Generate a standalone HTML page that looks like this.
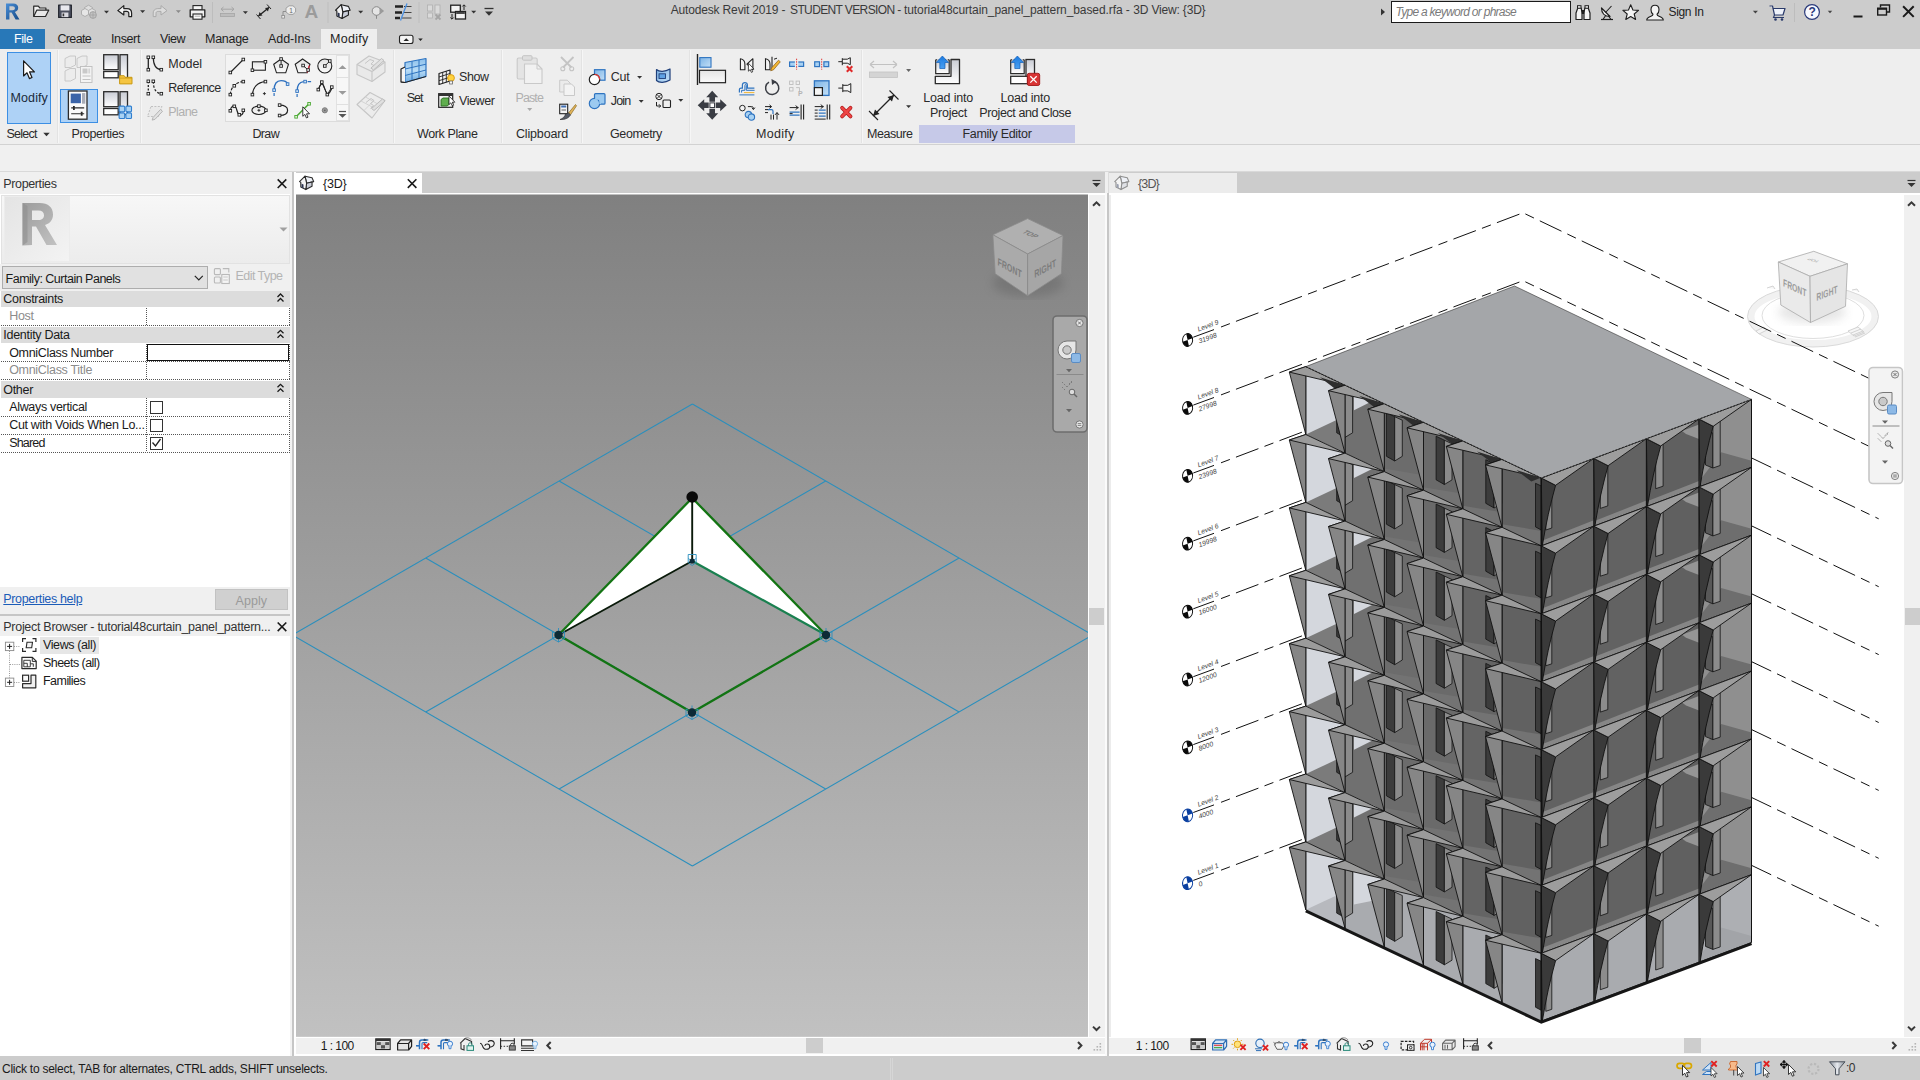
<!DOCTYPE html>
<html><head><meta charset="utf-8"><title>Revit</title>
<style>
html,body{margin:0;padding:0}
body{width:1920px;height:1080px;position:relative;overflow:hidden;background:#f0f0f0;font-family:"Liberation Sans",sans-serif;font-size:12px}
.t{position:absolute;white-space:nowrap;display:block}
.b{position:absolute}
svg{position:absolute;left:0;top:0;overflow:visible}
</style></head><body>
<div class="b" style="left:0px;top:0px;width:1920px;height:49px;background:#cccccc;"></div>
<div class="b" style="left:0px;top:49px;width:1920px;height:95px;background:#eeeeee;"></div>
<div class="b" style="left:0px;top:144px;width:1920px;height:1px;background:#d2d2d2;"></div>
<div class="b" style="left:0px;top:145px;width:1920px;height:27px;background:#f0f0f0;"></div>
<div class="b" style="left:0px;top:28.9px;width:44.7px;height:19.8px;background:#2878b8;"></div>
<span class="t" style="left:14.0px;top:31.3px;font-size:12.5px;line-height:16.2px;color:#ffffff;letter-spacing:-0.41px;">File</span>
<div class="b" style="left:321px;top:29px;width:56px;height:20px;background:#eeeeee;"></div>
<span class="t" style="left:57.5px;top:31.3px;font-size:12.5px;line-height:16.2px;color:#222;letter-spacing:-0.67px;">Create</span>
<span class="t" style="left:111.0px;top:31.3px;font-size:12.5px;line-height:16.2px;color:#222;letter-spacing:-0.38px;">Insert</span>
<span class="t" style="left:160.0px;top:31.3px;font-size:12.5px;line-height:16.2px;color:#222;letter-spacing:-0.47px;">View</span>
<span class="t" style="left:205.0px;top:31.3px;font-size:12.5px;line-height:16.2px;color:#222;letter-spacing:-0.28px;">Manage</span>
<span class="t" style="left:268.0px;top:31.3px;font-size:12.5px;line-height:16.2px;color:#222;letter-spacing:-0.08px;">Add-Ins</span>
<span class="t" style="left:330.0px;top:31.3px;font-size:12.5px;line-height:16.2px;color:#222;letter-spacing:0.28px;">Modify</span>
<span class="t" style="left:670.7px;top:3.4px;font-size:12px;line-height:15.6px;color:#3a3a3a;letter-spacing:-0.16px;">Autodesk Revit 2019 -</span>
<span class="t" style="left:790.0px;top:3.4px;font-size:12px;line-height:15.6px;color:#3a3a3a;letter-spacing:-0.62px;">STUDENT VERSION -</span>
<span class="t" style="left:904.0px;top:3.4px;font-size:12px;line-height:15.6px;color:#3a3a3a;letter-spacing:-0.09px;">tutorial48curtain_panel_pattern_based.rfa -</span>
<span class="t" style="left:1133.3px;top:3.4px;font-size:12px;line-height:15.6px;color:#3a3a3a;letter-spacing:-0.18px;">3D View: {3D}</span>
<div class="b" style="left:1391px;top:1px;width:180px;height:22px;background:#ffffff;border:1px solid #1a1a1a;box-sizing:border-box;"></div>
<span class="t" style="left:1395.5px;top:4.9px;font-size:12px;line-height:15.6px;color:#7a7a7a;letter-spacing:-0.72px;font-style:italic;">Type a keyword or phrase</span>
<span class="t" style="left:1668.5px;top:5.4px;font-size:12px;line-height:15.6px;color:#222;letter-spacing:-0.34px;">Sign In</span>
<div class="b" style="left:56.5px;top:50px;width:1px;height:93px;background:#e3e3e3;"></div>
<div class="b" style="left:57.5px;top:50px;width:1px;height:93px;background:#f6f6f6;"></div>
<div class="b" style="left:139.5px;top:50px;width:1px;height:93px;background:#e3e3e3;"></div>
<div class="b" style="left:140.5px;top:50px;width:1px;height:93px;background:#f6f6f6;"></div>
<div class="b" style="left:392.5px;top:50px;width:1px;height:93px;background:#e3e3e3;"></div>
<div class="b" style="left:393.5px;top:50px;width:1px;height:93px;background:#f6f6f6;"></div>
<div class="b" style="left:501px;top:50px;width:1px;height:93px;background:#e3e3e3;"></div>
<div class="b" style="left:502px;top:50px;width:1px;height:93px;background:#f6f6f6;"></div>
<div class="b" style="left:581px;top:50px;width:1px;height:93px;background:#e3e3e3;"></div>
<div class="b" style="left:582px;top:50px;width:1px;height:93px;background:#f6f6f6;"></div>
<div class="b" style="left:689px;top:50px;width:1px;height:93px;background:#e3e3e3;"></div>
<div class="b" style="left:690px;top:50px;width:1px;height:93px;background:#f6f6f6;"></div>
<div class="b" style="left:861px;top:50px;width:1px;height:93px;background:#e3e3e3;"></div>
<div class="b" style="left:862px;top:50px;width:1px;height:93px;background:#f6f6f6;"></div>
<div class="b" style="left:7px;top:52px;width:44px;height:72px;background:#aed2f6;border:1px solid #3c8fe4;box-sizing:border-box;"></div>
<span class="t" style="left:10.5px;top:90.1px;font-size:12.5px;line-height:16.2px;color:#1a2a3a;letter-spacing:0.11px;">Modify</span>
<div class="b" style="left:60px;top:89px;width:38px;height:34px;background:#aed2f6;border:1px solid #3c8fe4;box-sizing:border-box;"></div>
<div class="b" style="left:225px;top:54px;width:125px;height:68px;background:#f3f3f3;border:1px solid #dcdcdc;box-sizing:border-box;"></div>
<div class="b" style="left:336px;top:55px;width:13px;height:66px;background:#f7f7f7;border:1px solid #e2e2e2;box-sizing:border-box;"></div>
<div class="b" style="left:336px;top:77px;width:13px;height:1px;background:#e0e0e0;"></div>
<div class="b" style="left:336px;top:104px;width:13px;height:1px;background:#e0e0e0;"></div>
<span class="t" style="left:6.5px;top:125.8px;font-size:12.5px;line-height:16.2px;color:#2a2a2a;letter-spacing:-0.74px;">Select</span>
<span class="t" style="left:71.5px;top:125.8px;font-size:12.5px;line-height:16.2px;color:#2a2a2a;letter-spacing:-0.45px;">Properties</span>
<span class="t" style="left:252.5px;top:125.8px;font-size:12.5px;line-height:16.2px;color:#2a2a2a;letter-spacing:-0.67px;">Draw</span>
<span class="t" style="left:417.0px;top:125.8px;font-size:12.5px;line-height:16.2px;color:#2a2a2a;letter-spacing:-0.39px;">Work Plane</span>
<span class="t" style="left:516.0px;top:125.8px;font-size:12.5px;line-height:16.2px;color:#2a2a2a;letter-spacing:-0.17px;">Clipboard</span>
<span class="t" style="left:610.0px;top:125.8px;font-size:12.5px;line-height:16.2px;color:#2a2a2a;letter-spacing:-0.36px;">Geometry</span>
<span class="t" style="left:756.0px;top:125.8px;font-size:12.5px;line-height:16.2px;color:#2a2a2a;letter-spacing:0.28px;">Modify</span>
<span class="t" style="left:867.0px;top:125.8px;font-size:12.5px;line-height:16.2px;color:#2a2a2a;letter-spacing:-0.45px;">Measure</span>
<div class="b" style="left:919px;top:125px;width:156px;height:18px;background:#c6c9e8;"></div>
<span class="t" style="left:962.5px;top:125.8px;font-size:12.5px;line-height:16.2px;color:#2a2a2a;letter-spacing:-0.30px;">Family Editor</span>
<span class="t" style="left:168.3px;top:56.4px;font-size:12.5px;line-height:16.2px;color:#2a2a2a;letter-spacing:-0.07px;">Model</span>
<span class="t" style="left:168.3px;top:80.4px;font-size:12.5px;line-height:16.2px;color:#2a2a2a;letter-spacing:-0.61px;">Reference</span>
<span class="t" style="left:406.7px;top:90.1px;font-size:12.5px;line-height:16.2px;color:#2a2a2a;letter-spacing:-0.99px;">Set</span>
<span class="t" style="left:459.0px;top:69.3px;font-size:12.5px;line-height:16.2px;color:#2a2a2a;letter-spacing:-0.44px;">Show</span>
<span class="t" style="left:459.0px;top:93.4px;font-size:12.5px;line-height:16.2px;color:#2a2a2a;letter-spacing:-0.41px;">Viewer</span>
<span class="t" style="left:610.7px;top:69.3px;font-size:12.5px;line-height:16.2px;color:#2a2a2a;letter-spacing:-0.22px;">Cut</span>
<span class="t" style="left:610.7px;top:93.3px;font-size:12.5px;line-height:16.2px;color:#2a2a2a;letter-spacing:-0.78px;">Join</span>
<span class="t" style="left:168.3px;top:104.3px;font-size:12.5px;line-height:16.2px;color:#b0b0b0;letter-spacing:-0.55px;">Plane</span>
<span class="t" style="left:515.5px;top:90.1px;font-size:12.5px;line-height:16.2px;color:#b0b0b0;letter-spacing:-0.89px;">Paste</span>
<span class="t" style="left:923.3px;top:90.3px;font-size:12.5px;line-height:16.2px;color:#2a2a2a;letter-spacing:-0.19px;">Load into</span>
<span class="t" style="left:930.0px;top:105.3px;font-size:12.5px;line-height:16.2px;color:#2a2a2a;letter-spacing:-0.27px;">Project</span>
<span class="t" style="left:1000.5px;top:90.3px;font-size:12.5px;line-height:16.2px;color:#2a2a2a;letter-spacing:-0.21px;">Load into</span>
<span class="t" style="left:979.3px;top:105.3px;font-size:12.5px;line-height:16.2px;color:#2a2a2a;letter-spacing:-0.41px;">Project and Close</span>
<div class="b" style="left:0px;top:172px;width:292px;height:885px;background:#ffffff;"></div>
<div class="b" style="left:0px;top:171px;width:1920px;height:1px;background:#d9d9d9;"></div>
<div class="b" style="left:0px;top:172px;width:292px;height:22px;background:#f0f0f0;"></div>
<span class="t" style="left:3.3px;top:176.2px;font-size:12.5px;line-height:16.2px;color:#333;letter-spacing:-0.37px;">Properties</span>
<div class="b" style="left:1px;top:194.5px;width:289px;height:69px;border:1px solid #e2e2e2;box-sizing:border-box;background:linear-gradient(#f7f7f7,#ececec);"></div>
<div class="b" style="left:4px;top:196px;width:66px;height:66px;border:1px solid #ececec;box-sizing:border-box;background:linear-gradient(135deg,#e4e4e4,#f3f3f3);"></div>
<div class="b" style="left:0px;top:263.5px;width:292px;height:27px;background:#f0f0f0;"></div>
<div class="b" style="left:1.5px;top:266px;width:206px;height:22.5px;background:#e1e1e1;border:1px solid #adadad;box-sizing:border-box;"></div>
<span class="t" style="left:5.6px;top:270.6px;font-size:12.5px;line-height:16.2px;color:#1a1a1a;letter-spacing:-0.50px;">Family: Curtain Panels</span>
<span class="t" style="left:235.5px;top:268.4px;font-size:12.5px;line-height:16.2px;color:#b4b4b4;letter-spacing:-0.54px;">Edit Type</span>
<div class="b" style="left:1px;top:290.5px;width:289px;height:16.8px;background:#dcdcdc;"></div>
<span class="t" style="left:3.3px;top:291.2px;font-size:12.5px;line-height:16.2px;color:#1a1a1a;letter-spacing:-0.32px;">Constraints</span>
<div class="b" style="left:1px;top:326.7px;width:289px;height:16.7px;background:#dcdcdc;"></div>
<span class="t" style="left:3.3px;top:327.3px;font-size:12.5px;line-height:16.2px;color:#1a1a1a;letter-spacing:-0.29px;">Identity Data</span>
<div class="b" style="left:1px;top:380.8px;width:289px;height:16.8px;background:#dcdcdc;"></div>
<span class="t" style="left:3.3px;top:381.5px;font-size:12.5px;line-height:16.2px;color:#1a1a1a;letter-spacing:-0.31px;">Other</span>
<span class="t" style="left:9.2px;top:308.3px;font-size:12.5px;line-height:16.2px;color:#8c8c8c;letter-spacing:-0.28px;">Host</span>
<span class="t" style="left:9.2px;top:344.9px;font-size:12.5px;line-height:16.2px;color:#1a1a1a;letter-spacing:-0.33px;">OmniClass Number</span>
<span class="t" style="left:9.2px;top:362.4px;font-size:12.5px;line-height:16.2px;color:#8c8c8c;letter-spacing:-0.31px;">OmniClass Title</span>
<span class="t" style="left:9.2px;top:398.5px;font-size:12.5px;line-height:16.2px;color:#1a1a1a;letter-spacing:-0.32px;">Always vertical</span>
<span class="t" style="left:9.2px;top:416.6px;font-size:12.5px;line-height:16.2px;color:#1a1a1a;letter-spacing:-0.31px;">Cut with Voids When Lo...</span>
<span class="t" style="left:9.2px;top:434.7px;font-size:12.5px;line-height:16.2px;color:#1a1a1a;letter-spacing:-0.82px;">Shared</span>
<div class="b" style="left:1px;top:325.3px;width:289px;height:1px;background:repeating-linear-gradient(90deg,#555 0 1px,transparent 1px 2px);"></div>
<div class="b" style="left:1px;top:361px;width:289px;height:1px;background:repeating-linear-gradient(90deg,#555 0 1px,transparent 1px 2px);"></div>
<div class="b" style="left:1px;top:379px;width:289px;height:1px;background:repeating-linear-gradient(90deg,#555 0 1px,transparent 1px 2px);"></div>
<div class="b" style="left:1px;top:415.5px;width:289px;height:1px;background:repeating-linear-gradient(90deg,#555 0 1px,transparent 1px 2px);"></div>
<div class="b" style="left:1px;top:433.5px;width:289px;height:1px;background:repeating-linear-gradient(90deg,#555 0 1px,transparent 1px 2px);"></div>
<div class="b" style="left:1px;top:451.5px;width:289px;height:1px;background:repeating-linear-gradient(90deg,#555 0 1px,transparent 1px 2px);"></div>
<div class="b" style="left:146.4px;top:307.3px;width:1px;height:18px;background:repeating-linear-gradient(0deg,#555 0 1px,transparent 1px 2px);"></div>
<div class="b" style="left:289.3px;top:307.3px;width:1px;height:18px;background:repeating-linear-gradient(0deg,#555 0 1px,transparent 1px 2px);"></div>
<div class="b" style="left:146.4px;top:343.4px;width:1px;height:35.6px;background:repeating-linear-gradient(0deg,#555 0 1px,transparent 1px 2px);"></div>
<div class="b" style="left:289.3px;top:343.4px;width:1px;height:35.6px;background:repeating-linear-gradient(0deg,#555 0 1px,transparent 1px 2px);"></div>
<div class="b" style="left:146.4px;top:397.6px;width:1px;height:53.9px;background:repeating-linear-gradient(0deg,#555 0 1px,transparent 1px 2px);"></div>
<div class="b" style="left:289.3px;top:397.6px;width:1px;height:53.9px;background:repeating-linear-gradient(0deg,#555 0 1px,transparent 1px 2px);"></div>
<div class="b" style="left:146.8px;top:344.2px;width:142.4px;height:16.5px;background:#fff;border:1px solid #111;box-sizing:border-box;"></div>
<div class="b" style="left:150px;top:400.5px;width:13px;height:13px;background:#fff;border:1px solid #333;box-sizing:border-box;"></div>
<div class="b" style="left:150px;top:418.5px;width:13px;height:13px;background:#fff;border:1px solid #333;box-sizing:border-box;"></div>
<div class="b" style="left:150px;top:436.5px;width:13px;height:13px;background:#fff;border:1px solid #333;box-sizing:border-box;"></div>
<div class="b" style="left:0px;top:586.5px;width:292px;height:28px;background:#f0f0f0;"></div>
<span class="t" style="left:3.3px;top:590.6px;font-size:12.5px;line-height:16.2px;color:#1b5cb8;letter-spacing:-0.34px;text-decoration:underline;">Properties help</span>
<div class="b" style="left:215.3px;top:589px;width:73px;height:21px;background:#d0d0d0;border:1px solid #c2c2c2;box-sizing:border-box;"></div>
<span class="t" style="left:235.5px;top:592.9px;font-size:12.5px;line-height:16.2px;color:#9a9a9a;letter-spacing:0.05px;">Apply</span>
<div class="b" style="left:0px;top:613.8px;width:292px;height:1.8px;background:#c6c6c6;"></div>
<div class="b" style="left:0px;top:616px;width:292px;height:20px;background:#f0f0f0;"></div>
<span class="t" style="left:3.3px;top:619.4px;font-size:12.5px;line-height:16.2px;color:#333;letter-spacing:-0.29px;">Project Browser - tutorial48curtain_panel_pattern...</span>
<div class="b" style="left:40.3px;top:636.5px;width:58.5px;height:17px;background:#e6e6e6;"></div>
<span class="t" style="left:43.0px;top:637.4px;font-size:12.5px;line-height:16.2px;color:#1a1a1a;letter-spacing:-0.40px;">Views (all)</span>
<span class="t" style="left:43.0px;top:655.4px;font-size:12.5px;line-height:16.2px;color:#1a1a1a;letter-spacing:-0.55px;">Sheets (all)</span>
<span class="t" style="left:43.0px;top:673.4px;font-size:12.5px;line-height:16.2px;color:#1a1a1a;letter-spacing:-0.54px;">Families</span>
<div class="b" style="left:290px;top:172px;width:2px;height:885px;background:#f2f2f2;"></div>
<div class="b" style="left:292px;top:172px;width:2px;height:885px;background:#c6c6c6;"></div>
<div class="b" style="left:294px;top:172px;width:2.1px;height:885px;background:#ffffff;"></div>
<div class="b" style="left:295.8px;top:172px;width:809.2px;height:20.5px;background:#cccccc;"></div>
<div class="b" style="left:295.8px;top:192.5px;width:809.2px;height:2.1px;background:#ffffff;"></div>
<div class="b" style="left:294.2px;top:172.7px;width:127.8px;height:21.9px;background:#ffffff;"></div>
<span class="t" style="left:323.0px;top:176.3px;font-size:12.5px;line-height:16.2px;color:#1a1a1a;letter-spacing:-0.18px;">{3D}</span>
<div class="b" style="left:1088px;top:194.5px;width:17px;height:843px;background:#f0f0f0;"></div>
<div class="b" style="left:1088px;top:194.5px;width:1.1px;height:843px;background:#ffffff;"></div>
<div class="b" style="left:1089.1px;top:608px;width:15px;height:16.7px;background:#cdcdcd;"></div>
<div class="b" style="left:295.8px;top:1036.8px;width:809.2px;height:19.2px;background:#f0f0f0;"></div>
<span class="t" style="left:320.8px;top:1039.0px;font-size:12px;line-height:15.6px;color:#1a1a1a;letter-spacing:-0.54px;">1 : 100</span>
<div class="b" style="left:295.8px;top:1036.8px;width:809.2px;height:1.4px;background:#ffffff;"></div>
<div class="b" style="left:295.8px;top:1054.2px;width:809.2px;height:1.6px;background:#ffffff;"></div>
<div class="b" style="left:806px;top:1038.4px;width:17px;height:14.8px;background:#cdcdcd;"></div>
<div class="b" style="left:1105px;top:192.5px;width:2.2px;height:864px;background:#fafafa;"></div>
<div class="b" style="left:1107.2px;top:192.5px;width:2px;height:864px;background:#c6c6c6;"></div>
<div class="b" style="left:1108.3px;top:172px;width:0.9px;height:20.5px;background:#dcdcdc;"></div>
<div class="b" style="left:1109.2px;top:172px;width:810.8px;height:20.5px;background:#cccccc;"></div>
<div class="b" style="left:1109.2px;top:192.5px;width:810.8px;height:2.1px;background:#ffffff;"></div>
<div class="b" style="left:1109.2px;top:172.9px;width:127.5px;height:20px;background:#ececec;"></div>
<span class="t" style="left:1137.9px;top:176.1px;font-size:12.5px;line-height:16.2px;color:#555;letter-spacing:-0.81px;">{3D}</span>
<div class="b" style="left:1109.2px;top:194.5px;width:795px;height:843px;background:#ffffff;"></div>
<div class="b" style="left:1109.2px;top:194.5px;width:1.8px;height:843px;background:#ececec;"></div>
<div class="b" style="left:1904.2px;top:194.5px;width:15.8px;height:843px;background:#f0f0f0;"></div>
<div class="b" style="left:1905.1px;top:608px;width:14.9px;height:16.7px;background:#cdcdcd;"></div>
<div class="b" style="left:1109.2px;top:1037px;width:810.8px;height:19px;background:#f0f0f0;"></div>
<span class="t" style="left:1135.8px;top:1039.0px;font-size:12px;line-height:15.6px;color:#1a1a1a;letter-spacing:-0.57px;">1 : 100</span>
<div class="b" style="left:1109.2px;top:1036.8px;width:810.8px;height:1.4px;background:#ffffff;"></div>
<div class="b" style="left:1109.2px;top:1054.2px;width:810.8px;height:1.6px;background:#ffffff;"></div>
<div class="b" style="left:1684px;top:1038.4px;width:17px;height:14.8px;background:#cdcdcd;"></div>
<div class="b" style="left:0px;top:1055.8px;width:1920px;height:24.2px;background:#cccccc;"></div>
<div class="b" style="left:890.3px;top:1058px;width:1px;height:22px;background:#d6d6d6;"></div>
<div class="b" style="left:892.3px;top:1058px;width:1px;height:22px;background:#d6d6d6;"></div>
<span class="t" style="left:2.0px;top:1061.9px;font-size:12px;line-height:15.6px;color:#1a1a1a;letter-spacing:-0.25px;">Click to select, TAB for alternates, CTRL adds, SHIFT unselects.</span>
<span class="t" style="left:1846.0px;top:1061.2px;font-size:12px;line-height:15.6px;color:#333;letter-spacing:-0.50px;">:0</span>
<svg width="1920" height="1080" viewBox="0 0 1920 1080"><defs><linearGradient id="cg" x1="0" y1="0" x2="0" y2="1"><stop offset="0" stop-color="#808080"/><stop offset="1" stop-color="#c1c1c1"/></linearGradient><clipPath id="cc"><rect x="296" y="194.5" width="792" height="842.3"/></clipPath><filter id="bl"><feGaussianBlur stdDeviation="5"/></filter></defs><rect x="296" y="194.5" width="792" height="842.3" fill="url(#cg)"/><g clip-path="url(#cc)"><path d="M692.4 404.0L292.4 635.0M692.4 404.0L1092.4 635.0M292.4 635.0L692.4 866.0M1092.4 635.0L692.4 866.0M559.1 481.0L959.1 712.0M825.7 481.0L425.7 712.0M425.7 558.0L825.7 789.0M959.1 558.0L559.1 789.0" stroke="#2a8fbd" stroke-width="1.05" fill="none"/><polygon points="692.2,498 558.5,635 692.2,561 826,635" fill="#ffffff"/><path d="M692.2 498L692.2 561M692.2 561L558.5 635" stroke="#0a1a0a" stroke-width="1.9" fill="none"/><path d="M692.2 561L826 635" stroke="#1a8050" stroke-width="2.2" fill="none"/><path d="M692.2 498L558.5 635M692.2 498L826 635M558.5 635L692 712.5L826 635" stroke="#137413" stroke-width="2.3" fill="none" stroke-linejoin="round"/><circle cx="692.2" cy="497" r="5.8" fill="#0a0a0a"/><g transform="translate(558.5,635)"><path d="M-6 -3.5L6 3.5M-6 3.5L6 -3.5M0 -7V7M-6 -3.5V3.5L0 7L6 3.5V-3.5" stroke="#2a8fbd" stroke-width="0.9" fill="none"/><circle r="4.2" fill="#0d2a36"/></g><g transform="translate(826,635)"><path d="M-6 -3.5L6 3.5M-6 3.5L6 -3.5M0 -7V7M-6 -3.5V3.5L0 7L6 3.5V-3.5" stroke="#2a8fbd" stroke-width="0.9" fill="none"/><circle r="4.2" fill="#0d2a36"/></g><g transform="translate(692,712.5)"><path d="M-6 -3.5L6 3.5M-6 3.5L6 -3.5M0 -7V7M-6 -3.5V3.5L0 7L6 3.5V-3.5" stroke="#2a8fbd" stroke-width="0.9" fill="none"/><circle r="4.2" fill="#0d2a36"/></g><g transform="translate(692.2,559.5)"><path d="M-4 -5h8v8l-4 3l-4-3zM-4 -1l4 2.5l4-2.5" stroke="#2a8fbd" stroke-width="0.9" fill="none"/><circle cy="1.5" r="2.6" fill="#0d2a36"/></g></g><ellipse cx="1028" cy="283" rx="36" ry="14" fill="#5a5a5a" opacity="0.35" filter="url(#bl)"/><polygon points="1027.6,218.6 1063,235.5 1027.6,254 992.9,234.8" fill="#b0b0b0" stroke="#8a8a8a" stroke-width="0.8"/><polygon points="992.9,234.8 1027.6,254 1027.6,295.7 995.2,273.7" fill="#aaaaaa" stroke="#8a8a8a" stroke-width="0.8"/><polygon points="1027.6,254 1063,235.5 1061.4,273.7 1027.6,295.7" fill="#a6a6a6" stroke="#8a8a8a" stroke-width="0.8"/><text style="font-family:'Liberation Sans',sans-serif;font-size:10.5px;font-weight:bold;fill:#7c7c7c;letter-spacing:0.1px" transform="matrix(0.66,0.36,-0.04,1,997.5,265)">FRONT</text><text style="font-family:'Liberation Sans',sans-serif;font-size:10.5px;font-weight:bold;fill:#7c7c7c;letter-spacing:0.1px" transform="matrix(0.66,-0.36,0.04,1,1034.5,278)">RIGHT</text><text style="font-family:'Liberation Sans',sans-serif;font-size:10.5px;font-weight:bold;fill:#7c7c7c;letter-spacing:0.1px" transform="matrix(0.6,0.27,-0.7,0.36,1021.5,232.5)">TOP</text><g opacity="1"><rect x="1053" y="316" width="34" height="116" rx="4" fill="#a9a9a9" stroke="#6e6e6e" stroke-width="1.6"/><circle cx="1079.5" cy="323" r="3.6" fill="#e8e8e8" stroke="#666" stroke-width="0.8"/><path d="M1078 321.5l3 3m0-3l-3 3" stroke="#666" stroke-width="0.9" fill="none"/><path d="M1067 341 a9 9 0 1 0 9 9 v-9z" fill="#e6e6e6" stroke="#777" stroke-width="1"/><circle cx="1067" cy="350" r="4.2" fill="#c9c9c9" stroke="#777" stroke-width="1"/><rect x="1071.5" y="353.5" width="9" height="9" rx="1.5" fill="#8db9e6" stroke="#5a8cc4" stroke-width="1"/><path d="M1066 369h6l-3 3.2z" fill="#666"/><path d="M1056.5 374.5h27" stroke="#8a8a8a" stroke-width="1"/><circle cx="1072" cy="392" r="2.8" fill="#ddd" stroke="#666" stroke-width="1"/><path d="M1074 394l3 3" stroke="#666" stroke-width="1.4"/><path d="M1062 382l5 5M1072 382l-5 5M1065 390l-3-3M1069 384l3-3" stroke="#777" stroke-width="0.9" stroke-dasharray="1.5 1.2" fill="none"/><path d="M1066 409h6l-3 3.2z" fill="#666"/><circle cx="1079.5" cy="424.5" r="3.6" fill="#e8e8e8" stroke="#666" stroke-width="0.8"/><path d="M1077.7 423.6h3.6M1077.7 425.4h3.6" stroke="#666" stroke-width="0.8"/></g></svg>
<svg width="1920" height="1080" viewBox="0 0 1920 1080"><defs><clipPath id="rc"><rect x="1109.2" y="194.5" width="795" height="842.5"/></clipPath></defs><g clip-path="url(#rc)" shape-rendering="auto"><ellipse cx="1813" cy="316.5" rx="62" ry="27" fill="none" stroke="#f1f1f1" stroke-width="7"/><ellipse cx="1813" cy="316.5" rx="65.5" ry="30.5" fill="none" stroke="#d6d6d6" stroke-width="0.9"/><ellipse cx="1813" cy="315.5" rx="51" ry="23" fill="none" stroke="#dadada" stroke-width="0.9"/><path d="M1756 331l8-4l3 3l-8 4zM1848 331l10-4l6 5l-10 4zM1767 288l6-2l2 3M1852 290l5-1l2 3" fill="#f6f6f6" stroke="#cfcfcf" stroke-width="0.9"/><path d="M1851 333l10-4M1853 335l10-4M1855 337l10-4" stroke="#c9c9c9" stroke-width="0.8"/><path d="M1193.3 880.4L1214 872.8" stroke="#111" stroke-width="1"/><path d="M1221 870.2L1523 756.0L1878.7 926.2" stroke="#111" stroke-width="1" fill="none" stroke-dasharray="9.5 6.5 24 6.5"/><g transform="translate(1187.6,883.2) rotate(-20) skewX(-8)"><ellipse rx="5.2" ry="6.2" fill="#fff" stroke="#0a3fa0" stroke-width="1"/><path d="M0 0V-6.2A5.2 6.2 0 0 1 5.2 0ZM0 0V6.2A5.2 6.2 0 0 1 -5.2 0Z" fill="#0a3fa0"/></g><text style="font-family:'Liberation Sans',sans-serif;font-size:6.8px;fill:#444;font-style:italic" transform="translate(1198.5,874.7) rotate(-20)">Level 1</text><text style="font-family:'Liberation Sans',sans-serif;font-size:6.8px;fill:#444;font-style:italic" transform="translate(1199.5,886.7) rotate(-20)">0</text><path d="M1193.3 812.5L1214 804.9" stroke="#111" stroke-width="1"/><path d="M1221 802.3L1523 688.1L1878.7 858.3" stroke="#111" stroke-width="1" fill="none" stroke-dasharray="9.5 6.5 24 6.5"/><g transform="translate(1187.6,815.3) rotate(-20) skewX(-8)"><ellipse rx="5.2" ry="6.2" fill="#fff" stroke="#0a3fa0" stroke-width="1"/><path d="M0 0V-6.2A5.2 6.2 0 0 1 5.2 0ZM0 0V6.2A5.2 6.2 0 0 1 -5.2 0Z" fill="#0a3fa0"/></g><text style="font-family:'Liberation Sans',sans-serif;font-size:6.8px;fill:#444;font-style:italic" transform="translate(1198.5,806.8) rotate(-20)">Level 2</text><text style="font-family:'Liberation Sans',sans-serif;font-size:6.8px;fill:#444;font-style:italic" transform="translate(1199.5,818.8) rotate(-20)">4000</text><path d="M1193.3 744.6L1214 737.0" stroke="#111" stroke-width="1"/><path d="M1221 734.4L1523 620.2L1878.7 790.4" stroke="#111" stroke-width="1" fill="none" stroke-dasharray="9.5 6.5 24 6.5"/><g transform="translate(1187.6,747.4) rotate(-20) skewX(-8)"><ellipse rx="5.2" ry="6.2" fill="#fff" stroke="#0a0a0a" stroke-width="1"/><path d="M0 0V-6.2A5.2 6.2 0 0 1 5.2 0ZM0 0V6.2A5.2 6.2 0 0 1 -5.2 0Z" fill="#0a0a0a"/></g><text style="font-family:'Liberation Sans',sans-serif;font-size:6.8px;fill:#444;font-style:italic" transform="translate(1198.5,738.9) rotate(-20)">Level 3</text><text style="font-family:'Liberation Sans',sans-serif;font-size:6.8px;fill:#444;font-style:italic" transform="translate(1199.5,750.9) rotate(-20)">8000</text><path d="M1193.3 676.7L1214 669.1" stroke="#111" stroke-width="1"/><path d="M1221 666.5L1523 552.3L1878.7 722.5" stroke="#111" stroke-width="1" fill="none" stroke-dasharray="9.5 6.5 24 6.5"/><g transform="translate(1187.6,679.5) rotate(-20) skewX(-8)"><ellipse rx="5.2" ry="6.2" fill="#fff" stroke="#0a0a0a" stroke-width="1"/><path d="M0 0V-6.2A5.2 6.2 0 0 1 5.2 0ZM0 0V6.2A5.2 6.2 0 0 1 -5.2 0Z" fill="#0a0a0a"/></g><text style="font-family:'Liberation Sans',sans-serif;font-size:6.8px;fill:#444;font-style:italic" transform="translate(1198.5,671.0) rotate(-20)">Level 4</text><text style="font-family:'Liberation Sans',sans-serif;font-size:6.8px;fill:#444;font-style:italic" transform="translate(1199.5,683.0) rotate(-20)">12000</text><path d="M1193.3 608.8L1214 601.2" stroke="#111" stroke-width="1"/><path d="M1221 598.6L1523 484.4L1878.7 654.6" stroke="#111" stroke-width="1" fill="none" stroke-dasharray="9.5 6.5 24 6.5"/><g transform="translate(1187.6,611.6) rotate(-20) skewX(-8)"><ellipse rx="5.2" ry="6.2" fill="#fff" stroke="#0a0a0a" stroke-width="1"/><path d="M0 0V-6.2A5.2 6.2 0 0 1 5.2 0ZM0 0V6.2A5.2 6.2 0 0 1 -5.2 0Z" fill="#0a0a0a"/></g><text style="font-family:'Liberation Sans',sans-serif;font-size:6.8px;fill:#444;font-style:italic" transform="translate(1198.5,603.1) rotate(-20)">Level 5</text><text style="font-family:'Liberation Sans',sans-serif;font-size:6.8px;fill:#444;font-style:italic" transform="translate(1199.5,615.1) rotate(-20)">16000</text><path d="M1193.3 540.9L1214 533.3" stroke="#111" stroke-width="1"/><path d="M1221 530.7L1523 416.5L1878.7 586.7" stroke="#111" stroke-width="1" fill="none" stroke-dasharray="9.5 6.5 24 6.5"/><g transform="translate(1187.6,543.7) rotate(-20) skewX(-8)"><ellipse rx="5.2" ry="6.2" fill="#fff" stroke="#0a0a0a" stroke-width="1"/><path d="M0 0V-6.2A5.2 6.2 0 0 1 5.2 0ZM0 0V6.2A5.2 6.2 0 0 1 -5.2 0Z" fill="#0a0a0a"/></g><text style="font-family:'Liberation Sans',sans-serif;font-size:6.8px;fill:#444;font-style:italic" transform="translate(1198.5,535.2) rotate(-20)">Level 6</text><text style="font-family:'Liberation Sans',sans-serif;font-size:6.8px;fill:#444;font-style:italic" transform="translate(1199.5,547.2) rotate(-20)">19998</text><path d="M1193.3 473.0L1214 465.4" stroke="#111" stroke-width="1"/><path d="M1221 462.8L1523 348.6L1878.7 518.8" stroke="#111" stroke-width="1" fill="none" stroke-dasharray="9.5 6.5 24 6.5"/><g transform="translate(1187.6,475.8) rotate(-20) skewX(-8)"><ellipse rx="5.2" ry="6.2" fill="#fff" stroke="#0a0a0a" stroke-width="1"/><path d="M0 0V-6.2A5.2 6.2 0 0 1 5.2 0ZM0 0V6.2A5.2 6.2 0 0 1 -5.2 0Z" fill="#0a0a0a"/></g><text style="font-family:'Liberation Sans',sans-serif;font-size:6.8px;fill:#444;font-style:italic" transform="translate(1198.5,467.3) rotate(-20)">Level 7</text><text style="font-family:'Liberation Sans',sans-serif;font-size:6.8px;fill:#444;font-style:italic" transform="translate(1199.5,479.3) rotate(-20)">23998</text><path d="M1193.3 405.1L1214 397.5" stroke="#111" stroke-width="1"/><path d="M1221 394.9L1523 280.7L1878.7 450.9" stroke="#111" stroke-width="1" fill="none" stroke-dasharray="9.5 6.5 24 6.5"/><g transform="translate(1187.6,407.9) rotate(-20) skewX(-8)"><ellipse rx="5.2" ry="6.2" fill="#fff" stroke="#0a0a0a" stroke-width="1"/><path d="M0 0V-6.2A5.2 6.2 0 0 1 5.2 0ZM0 0V6.2A5.2 6.2 0 0 1 -5.2 0Z" fill="#0a0a0a"/></g><text style="font-family:'Liberation Sans',sans-serif;font-size:6.8px;fill:#444;font-style:italic" transform="translate(1198.5,399.4) rotate(-20)">Level 8</text><text style="font-family:'Liberation Sans',sans-serif;font-size:6.8px;fill:#444;font-style:italic" transform="translate(1199.5,411.4) rotate(-20)">27998</text><path d="M1193.3 337.2L1214 329.6" stroke="#111" stroke-width="1"/><path d="M1221 327.0L1523 212.8L1878.7 383.0" stroke="#111" stroke-width="1" fill="none" stroke-dasharray="9.5 6.5 24 6.5"/><g transform="translate(1187.6,340.0) rotate(-20) skewX(-8)"><ellipse rx="5.2" ry="6.2" fill="#fff" stroke="#0a0a0a" stroke-width="1"/><path d="M0 0V-6.2A5.2 6.2 0 0 1 5.2 0ZM0 0V6.2A5.2 6.2 0 0 1 -5.2 0Z" fill="#0a0a0a"/></g><text style="font-family:'Liberation Sans',sans-serif;font-size:6.8px;fill:#444;font-style:italic" transform="translate(1198.5,331.5) rotate(-20)">Level 9</text><text style="font-family:'Liberation Sans',sans-serif;font-size:6.8px;fill:#444;font-style:italic" transform="translate(1199.5,343.5) rotate(-20)">31998</text><polygon points="1305.8,366.6 1345.0,385.2 1345.0,453.1 1305.8,434.5" fill="#d4d7dd" stroke="none" stroke-width="0" stroke-linejoin="round" /><polygon points="1305.8,434.5 1345.0,453.1 1345.0,416.1" fill="#7b7b7b" stroke="none" stroke-width="0" stroke-linejoin="round" /><path d="M1305.8 366.6L1305.8 434.5" stroke="#111" stroke-width="0.9"/><polygon points="1345.0,385.2 1384.3,403.7 1384.3,471.6 1345.0,453.1" fill="#707070" stroke="none" stroke-width="0" stroke-linejoin="round" /><polygon points="1354.0,390.2 1376.0,399.2 1354.0,410.2" fill="#d4d7dd" stroke="none" stroke-width="0" stroke-linejoin="round" /><path d="M1345.0 385.2L1345.0 453.1" stroke="#111" stroke-width="0.9"/><polygon points="1384.3,403.7 1423.5,422.3 1423.5,490.2 1384.3,471.6" fill="#6c6c6c" stroke="none" stroke-width="0" stroke-linejoin="round" /><polygon points="1384.3,471.6 1423.5,490.2 1423.5,475.2 1384.3,468.6" fill="#737373" stroke="none" stroke-width="0" stroke-linejoin="round" /><path d="M1384.3 403.7L1384.3 471.6" stroke="#111" stroke-width="0.9"/><polygon points="1423.5,422.3 1462.8,440.9 1462.8,508.8 1423.5,490.2" fill="#6a6a6a" stroke="none" stroke-width="0" stroke-linejoin="round" /><polygon points="1423.5,490.2 1462.8,508.8 1462.8,493.8 1423.5,487.2" fill="#737373" stroke="none" stroke-width="0" stroke-linejoin="round" /><path d="M1423.5 422.3L1423.5 490.2" stroke="#111" stroke-width="0.9"/><polygon points="1462.8,440.9 1502.0,459.4 1502.0,527.3 1462.8,508.8" fill="#646464" stroke="none" stroke-width="0" stroke-linejoin="round" /><polygon points="1462.8,508.8 1502.0,527.3 1502.0,512.3 1462.8,505.8" fill="#737373" stroke="none" stroke-width="0" stroke-linejoin="round" /><path d="M1462.8 440.9L1462.8 508.8" stroke="#111" stroke-width="0.9"/><polygon points="1502.0,459.4 1541.3,478.0 1541.3,545.9 1502.0,527.3" fill="#616161" stroke="none" stroke-width="0" stroke-linejoin="round" /><polygon points="1502.0,527.3 1541.3,545.9 1541.3,530.9 1502.0,524.3" fill="#737373" stroke="none" stroke-width="0" stroke-linejoin="round" /><path d="M1502.0 459.4L1502.0 527.3" stroke="#111" stroke-width="0.9"/><polygon points="1289.3,372.1 1305.8,366.6 1305.8,434.5" fill="#868686" stroke="#111" stroke-width="0.9" stroke-linejoin="round" /><polygon points="1289.3,372.1 1305.8,366.6 1345.0,385.2" fill="#9b9b9b" stroke="#111" stroke-width="0.9" stroke-linejoin="round" /><polygon points="1320.0,377.2 1344.5,385.0 1335.0,388.7" fill="#2e2e2e" stroke="none" stroke-width="0" stroke-linejoin="round" /><polygon points="1336.7,389.2 1345.0,393.1 1345.0,437.4 1336.7,432.8" fill="#3c3c3c" stroke="#111" stroke-width="0.8" stroke-linejoin="round" /><polygon points="1345.0,393.1 1352.6,396.7 1352.6,432.8 1345.0,437.4" fill="#8b8b8b" stroke="#111" stroke-width="0.8" stroke-linejoin="round" /><polygon points="1328.5,390.7 1345.0,385.2 1345.0,453.1" fill="#868686" stroke="#111" stroke-width="0.9" stroke-linejoin="round" /><polygon points="1328.5,390.7 1345.0,385.2 1384.3,403.7" fill="#9b9b9b" stroke="#111" stroke-width="0.9" stroke-linejoin="round" /><polygon points="1359.3,395.7 1383.8,403.5 1374.3,407.2" fill="#2e2e2e" stroke="none" stroke-width="0" stroke-linejoin="round" /><polygon points="1386.4,412.7 1394.7,416.7 1394.7,461.0 1386.4,456.3" fill="#3c3c3c" stroke="#111" stroke-width="0.8" stroke-linejoin="round" /><polygon points="1394.7,416.7 1402.3,420.2 1402.3,456.3 1394.7,461.0" fill="#8b8b8b" stroke="#111" stroke-width="0.8" stroke-linejoin="round" /><polygon points="1367.8,409.2 1384.3,403.7 1384.3,471.6" fill="#868686" stroke="#111" stroke-width="0.9" stroke-linejoin="round" /><polygon points="1367.8,409.2 1384.3,403.7 1423.5,422.3" fill="#9b9b9b" stroke="#111" stroke-width="0.9" stroke-linejoin="round" /><polygon points="1398.5,414.3 1423.0,422.1 1413.5,425.8" fill="#2e2e2e" stroke="none" stroke-width="0" stroke-linejoin="round" /><polygon points="1436.1,436.2 1444.4,440.2 1444.4,484.5 1436.1,479.8" fill="#3c3c3c" stroke="#111" stroke-width="0.8" stroke-linejoin="round" /><polygon points="1444.4,440.2 1452.0,443.8 1452.0,479.9 1444.4,484.5" fill="#8b8b8b" stroke="#111" stroke-width="0.8" stroke-linejoin="round" /><polygon points="1407.0,427.8 1423.5,422.3 1423.5,490.2" fill="#868686" stroke="#111" stroke-width="0.9" stroke-linejoin="round" /><polygon points="1407.0,427.8 1423.5,422.3 1462.8,440.9" fill="#9b9b9b" stroke="#111" stroke-width="0.9" stroke-linejoin="round" /><polygon points="1437.8,432.9 1462.3,440.7 1452.8,444.4" fill="#2e2e2e" stroke="none" stroke-width="0" stroke-linejoin="round" /><polygon points="1485.8,459.7 1494.1,463.7 1494.1,508.0 1485.8,503.3" fill="#3c3c3c" stroke="#111" stroke-width="0.8" stroke-linejoin="round" /><polygon points="1494.1,463.7 1501.7,467.3 1501.7,503.4 1494.1,508.0" fill="#8b8b8b" stroke="#111" stroke-width="0.8" stroke-linejoin="round" /><polygon points="1446.3,446.4 1462.8,440.9 1462.8,508.8" fill="#868686" stroke="#111" stroke-width="0.9" stroke-linejoin="round" /><polygon points="1446.3,446.4 1462.8,440.9 1502.0,459.4" fill="#9b9b9b" stroke="#111" stroke-width="0.9" stroke-linejoin="round" /><polygon points="1477.0,451.4 1501.5,459.2 1492.0,462.9" fill="#2e2e2e" stroke="none" stroke-width="0" stroke-linejoin="round" /><polygon points="1535.5,483.3 1541.3,486.0 1541.3,530.0 1535.5,526.9" fill="#3c3c3c" stroke="#111" stroke-width="0.8" stroke-linejoin="round" /><polygon points="1485.5,464.9 1502.0,459.4 1502.0,527.3" fill="#868686" stroke="#111" stroke-width="0.9" stroke-linejoin="round" /><polygon points="1485.5,464.9 1502.0,459.4 1541.3,478.0" fill="#9b9b9b" stroke="#111" stroke-width="0.9" stroke-linejoin="round" /><polygon points="1516.3,470.0 1540.8,477.8 1531.3,481.5" fill="#2e2e2e" stroke="none" stroke-width="0" stroke-linejoin="round" /><polygon points="1305.8,434.5 1345.0,453.1 1345.0,521.0 1305.8,502.4" fill="#d4d7dd" stroke="none" stroke-width="0" stroke-linejoin="round" /><polygon points="1305.8,502.4 1345.0,521.0 1345.0,484.0" fill="#7b7b7b" stroke="none" stroke-width="0" stroke-linejoin="round" /><path d="M1305.8 434.5L1305.8 502.4" stroke="#111" stroke-width="0.9"/><polygon points="1345.0,453.1 1384.3,471.6 1384.3,539.5 1345.0,521.0" fill="#707070" stroke="none" stroke-width="0" stroke-linejoin="round" /><polygon points="1354.0,458.1 1376.0,467.1 1354.0,478.1" fill="#d4d7dd" stroke="none" stroke-width="0" stroke-linejoin="round" /><path d="M1345.0 453.1L1345.0 521.0" stroke="#111" stroke-width="0.9"/><polygon points="1384.3,471.6 1423.5,490.2 1423.5,558.1 1384.3,539.5" fill="#6c6c6c" stroke="none" stroke-width="0" stroke-linejoin="round" /><polygon points="1384.3,539.5 1423.5,558.1 1423.5,543.1 1384.3,536.5" fill="#737373" stroke="none" stroke-width="0" stroke-linejoin="round" /><path d="M1384.3 471.6L1384.3 539.5" stroke="#111" stroke-width="0.9"/><polygon points="1423.5,490.2 1462.8,508.8 1462.8,576.7 1423.5,558.1" fill="#6a6a6a" stroke="none" stroke-width="0" stroke-linejoin="round" /><polygon points="1423.5,558.1 1462.8,576.7 1462.8,561.7 1423.5,555.1" fill="#737373" stroke="none" stroke-width="0" stroke-linejoin="round" /><path d="M1423.5 490.2L1423.5 558.1" stroke="#111" stroke-width="0.9"/><polygon points="1462.8,508.8 1502.0,527.3 1502.0,595.2 1462.8,576.7" fill="#646464" stroke="none" stroke-width="0" stroke-linejoin="round" /><polygon points="1462.8,576.7 1502.0,595.2 1502.0,580.2 1462.8,573.7" fill="#737373" stroke="none" stroke-width="0" stroke-linejoin="round" /><path d="M1462.8 508.8L1462.8 576.7" stroke="#111" stroke-width="0.9"/><polygon points="1502.0,527.3 1541.3,545.9 1541.3,613.8 1502.0,595.2" fill="#616161" stroke="none" stroke-width="0" stroke-linejoin="round" /><polygon points="1502.0,595.2 1541.3,613.8 1541.3,598.8 1502.0,592.2" fill="#737373" stroke="none" stroke-width="0" stroke-linejoin="round" /><path d="M1502.0 527.3L1502.0 595.2" stroke="#111" stroke-width="0.9"/><polygon points="1289.3,440.0 1305.8,434.5 1305.8,502.4" fill="#868686" stroke="#111" stroke-width="0.9" stroke-linejoin="round" /><polygon points="1289.3,440.0 1305.8,434.5 1345.0,453.1" fill="#9b9b9b" stroke="#111" stroke-width="0.9" stroke-linejoin="round" /><polygon points="1336.7,457.1 1345.0,461.0 1345.0,505.3 1336.7,500.7" fill="#3c3c3c" stroke="#111" stroke-width="0.8" stroke-linejoin="round" /><polygon points="1345.0,461.0 1352.6,464.6 1352.6,500.7 1345.0,505.3" fill="#8b8b8b" stroke="#111" stroke-width="0.8" stroke-linejoin="round" /><polygon points="1328.5,458.6 1345.0,453.1 1345.0,521.0" fill="#868686" stroke="#111" stroke-width="0.9" stroke-linejoin="round" /><polygon points="1328.5,458.6 1345.0,453.1 1384.3,471.6" fill="#9b9b9b" stroke="#111" stroke-width="0.9" stroke-linejoin="round" /><polygon points="1386.4,480.6 1394.7,484.6 1394.7,528.9 1386.4,524.2" fill="#3c3c3c" stroke="#111" stroke-width="0.8" stroke-linejoin="round" /><polygon points="1394.7,484.6 1402.3,488.1 1402.3,524.2 1394.7,528.9" fill="#8b8b8b" stroke="#111" stroke-width="0.8" stroke-linejoin="round" /><polygon points="1367.8,477.1 1384.3,471.6 1384.3,539.5" fill="#868686" stroke="#111" stroke-width="0.9" stroke-linejoin="round" /><polygon points="1367.8,477.1 1384.3,471.6 1423.5,490.2" fill="#9b9b9b" stroke="#111" stroke-width="0.9" stroke-linejoin="round" /><polygon points="1436.1,504.1 1444.4,508.1 1444.4,552.4 1436.1,547.7" fill="#3c3c3c" stroke="#111" stroke-width="0.8" stroke-linejoin="round" /><polygon points="1444.4,508.1 1452.0,511.7 1452.0,547.8 1444.4,552.4" fill="#8b8b8b" stroke="#111" stroke-width="0.8" stroke-linejoin="round" /><polygon points="1407.0,495.7 1423.5,490.2 1423.5,558.1" fill="#868686" stroke="#111" stroke-width="0.9" stroke-linejoin="round" /><polygon points="1407.0,495.7 1423.5,490.2 1462.8,508.8" fill="#9b9b9b" stroke="#111" stroke-width="0.9" stroke-linejoin="round" /><polygon points="1485.8,527.6 1494.1,531.6 1494.1,575.9 1485.8,571.2" fill="#3c3c3c" stroke="#111" stroke-width="0.8" stroke-linejoin="round" /><polygon points="1494.1,531.6 1501.7,535.2 1501.7,571.3 1494.1,575.9" fill="#8b8b8b" stroke="#111" stroke-width="0.8" stroke-linejoin="round" /><polygon points="1446.3,514.3 1462.8,508.8 1462.8,576.7" fill="#868686" stroke="#111" stroke-width="0.9" stroke-linejoin="round" /><polygon points="1446.3,514.3 1462.8,508.8 1502.0,527.3" fill="#9b9b9b" stroke="#111" stroke-width="0.9" stroke-linejoin="round" /><polygon points="1535.5,551.2 1541.3,553.9 1541.3,597.9 1535.5,594.8" fill="#3c3c3c" stroke="#111" stroke-width="0.8" stroke-linejoin="round" /><polygon points="1485.5,532.8 1502.0,527.3 1502.0,595.2" fill="#868686" stroke="#111" stroke-width="0.9" stroke-linejoin="round" /><polygon points="1485.5,532.8 1502.0,527.3 1541.3,545.9" fill="#9b9b9b" stroke="#111" stroke-width="0.9" stroke-linejoin="round" /><polygon points="1305.8,502.4 1345.0,521.0 1345.0,588.9 1305.8,570.3" fill="#d4d7dd" stroke="none" stroke-width="0" stroke-linejoin="round" /><polygon points="1305.8,570.3 1345.0,588.9 1345.0,551.9" fill="#7b7b7b" stroke="none" stroke-width="0" stroke-linejoin="round" /><path d="M1305.8 502.4L1305.8 570.3" stroke="#111" stroke-width="0.9"/><polygon points="1345.0,521.0 1384.3,539.5 1384.3,607.4 1345.0,588.9" fill="#707070" stroke="none" stroke-width="0" stroke-linejoin="round" /><polygon points="1354.0,526.0 1376.0,535.0 1354.0,546.0" fill="#d4d7dd" stroke="none" stroke-width="0" stroke-linejoin="round" /><path d="M1345.0 521.0L1345.0 588.9" stroke="#111" stroke-width="0.9"/><polygon points="1384.3,539.5 1423.5,558.1 1423.5,626.0 1384.3,607.4" fill="#6c6c6c" stroke="none" stroke-width="0" stroke-linejoin="round" /><polygon points="1384.3,607.4 1423.5,626.0 1423.5,611.0 1384.3,604.4" fill="#737373" stroke="none" stroke-width="0" stroke-linejoin="round" /><path d="M1384.3 539.5L1384.3 607.4" stroke="#111" stroke-width="0.9"/><polygon points="1423.5,558.1 1462.8,576.7 1462.8,644.6 1423.5,626.0" fill="#6a6a6a" stroke="none" stroke-width="0" stroke-linejoin="round" /><polygon points="1423.5,626.0 1462.8,644.6 1462.8,629.6 1423.5,623.0" fill="#737373" stroke="none" stroke-width="0" stroke-linejoin="round" /><path d="M1423.5 558.1L1423.5 626.0" stroke="#111" stroke-width="0.9"/><polygon points="1462.8,576.7 1502.0,595.2 1502.0,663.1 1462.8,644.6" fill="#646464" stroke="none" stroke-width="0" stroke-linejoin="round" /><polygon points="1462.8,644.6 1502.0,663.1 1502.0,648.1 1462.8,641.6" fill="#737373" stroke="none" stroke-width="0" stroke-linejoin="round" /><path d="M1462.8 576.7L1462.8 644.6" stroke="#111" stroke-width="0.9"/><polygon points="1502.0,595.2 1541.3,613.8 1541.3,681.7 1502.0,663.1" fill="#616161" stroke="none" stroke-width="0" stroke-linejoin="round" /><polygon points="1502.0,663.1 1541.3,681.7 1541.3,666.7 1502.0,660.1" fill="#737373" stroke="none" stroke-width="0" stroke-linejoin="round" /><path d="M1502.0 595.2L1502.0 663.1" stroke="#111" stroke-width="0.9"/><polygon points="1289.3,507.9 1305.8,502.4 1305.8,570.3" fill="#868686" stroke="#111" stroke-width="0.9" stroke-linejoin="round" /><polygon points="1289.3,507.9 1305.8,502.4 1345.0,521.0" fill="#9b9b9b" stroke="#111" stroke-width="0.9" stroke-linejoin="round" /><polygon points="1336.7,525.0 1345.0,528.9 1345.0,573.2 1336.7,568.6" fill="#3c3c3c" stroke="#111" stroke-width="0.8" stroke-linejoin="round" /><polygon points="1345.0,528.9 1352.6,532.5 1352.6,568.6 1345.0,573.2" fill="#8b8b8b" stroke="#111" stroke-width="0.8" stroke-linejoin="round" /><polygon points="1328.5,526.5 1345.0,521.0 1345.0,588.9" fill="#868686" stroke="#111" stroke-width="0.9" stroke-linejoin="round" /><polygon points="1328.5,526.5 1345.0,521.0 1384.3,539.5" fill="#9b9b9b" stroke="#111" stroke-width="0.9" stroke-linejoin="round" /><polygon points="1386.4,548.5 1394.7,552.5 1394.7,596.8 1386.4,592.1" fill="#3c3c3c" stroke="#111" stroke-width="0.8" stroke-linejoin="round" /><polygon points="1394.7,552.5 1402.3,556.0 1402.3,592.1 1394.7,596.8" fill="#8b8b8b" stroke="#111" stroke-width="0.8" stroke-linejoin="round" /><polygon points="1367.8,545.0 1384.3,539.5 1384.3,607.4" fill="#868686" stroke="#111" stroke-width="0.9" stroke-linejoin="round" /><polygon points="1367.8,545.0 1384.3,539.5 1423.5,558.1" fill="#9b9b9b" stroke="#111" stroke-width="0.9" stroke-linejoin="round" /><polygon points="1436.1,572.0 1444.4,576.0 1444.4,620.3 1436.1,615.6" fill="#3c3c3c" stroke="#111" stroke-width="0.8" stroke-linejoin="round" /><polygon points="1444.4,576.0 1452.0,579.6 1452.0,615.7 1444.4,620.3" fill="#8b8b8b" stroke="#111" stroke-width="0.8" stroke-linejoin="round" /><polygon points="1407.0,563.6 1423.5,558.1 1423.5,626.0" fill="#868686" stroke="#111" stroke-width="0.9" stroke-linejoin="round" /><polygon points="1407.0,563.6 1423.5,558.1 1462.8,576.7" fill="#9b9b9b" stroke="#111" stroke-width="0.9" stroke-linejoin="round" /><polygon points="1485.8,595.5 1494.1,599.5 1494.1,643.8 1485.8,639.1" fill="#3c3c3c" stroke="#111" stroke-width="0.8" stroke-linejoin="round" /><polygon points="1494.1,599.5 1501.7,603.1 1501.7,639.2 1494.1,643.8" fill="#8b8b8b" stroke="#111" stroke-width="0.8" stroke-linejoin="round" /><polygon points="1446.3,582.2 1462.8,576.7 1462.8,644.6" fill="#868686" stroke="#111" stroke-width="0.9" stroke-linejoin="round" /><polygon points="1446.3,582.2 1462.8,576.7 1502.0,595.2" fill="#9b9b9b" stroke="#111" stroke-width="0.9" stroke-linejoin="round" /><polygon points="1535.5,619.1 1541.3,621.8 1541.3,665.8 1535.5,662.7" fill="#3c3c3c" stroke="#111" stroke-width="0.8" stroke-linejoin="round" /><polygon points="1485.5,600.7 1502.0,595.2 1502.0,663.1" fill="#868686" stroke="#111" stroke-width="0.9" stroke-linejoin="round" /><polygon points="1485.5,600.7 1502.0,595.2 1541.3,613.8" fill="#9b9b9b" stroke="#111" stroke-width="0.9" stroke-linejoin="round" /><polygon points="1305.8,570.3 1345.0,588.9 1345.0,656.8 1305.8,638.2" fill="#d4d7dd" stroke="none" stroke-width="0" stroke-linejoin="round" /><polygon points="1305.8,638.2 1345.0,656.8 1345.0,619.8" fill="#7b7b7b" stroke="none" stroke-width="0" stroke-linejoin="round" /><path d="M1305.8 570.3L1305.8 638.2" stroke="#111" stroke-width="0.9"/><polygon points="1345.0,588.9 1384.3,607.4 1384.3,675.3 1345.0,656.8" fill="#707070" stroke="none" stroke-width="0" stroke-linejoin="round" /><polygon points="1354.0,593.9 1376.0,602.9 1354.0,613.9" fill="#d4d7dd" stroke="none" stroke-width="0" stroke-linejoin="round" /><path d="M1345.0 588.9L1345.0 656.8" stroke="#111" stroke-width="0.9"/><polygon points="1384.3,607.4 1423.5,626.0 1423.5,693.9 1384.3,675.3" fill="#6c6c6c" stroke="none" stroke-width="0" stroke-linejoin="round" /><polygon points="1384.3,675.3 1423.5,693.9 1423.5,678.9 1384.3,672.3" fill="#737373" stroke="none" stroke-width="0" stroke-linejoin="round" /><path d="M1384.3 607.4L1384.3 675.3" stroke="#111" stroke-width="0.9"/><polygon points="1423.5,626.0 1462.8,644.6 1462.8,712.5 1423.5,693.9" fill="#6a6a6a" stroke="none" stroke-width="0" stroke-linejoin="round" /><polygon points="1423.5,693.9 1462.8,712.5 1462.8,697.5 1423.5,690.9" fill="#737373" stroke="none" stroke-width="0" stroke-linejoin="round" /><path d="M1423.5 626.0L1423.5 693.9" stroke="#111" stroke-width="0.9"/><polygon points="1462.8,644.6 1502.0,663.1 1502.0,731.0 1462.8,712.5" fill="#646464" stroke="none" stroke-width="0" stroke-linejoin="round" /><polygon points="1462.8,712.5 1502.0,731.0 1502.0,716.0 1462.8,709.5" fill="#737373" stroke="none" stroke-width="0" stroke-linejoin="round" /><path d="M1462.8 644.6L1462.8 712.5" stroke="#111" stroke-width="0.9"/><polygon points="1502.0,663.1 1541.3,681.7 1541.3,749.6 1502.0,731.0" fill="#616161" stroke="none" stroke-width="0" stroke-linejoin="round" /><polygon points="1502.0,731.0 1541.3,749.6 1541.3,734.6 1502.0,728.0" fill="#737373" stroke="none" stroke-width="0" stroke-linejoin="round" /><path d="M1502.0 663.1L1502.0 731.0" stroke="#111" stroke-width="0.9"/><polygon points="1289.3,575.8 1305.8,570.3 1305.8,638.2" fill="#868686" stroke="#111" stroke-width="0.9" stroke-linejoin="round" /><polygon points="1289.3,575.8 1305.8,570.3 1345.0,588.9" fill="#9b9b9b" stroke="#111" stroke-width="0.9" stroke-linejoin="round" /><polygon points="1336.7,592.9 1345.0,596.8 1345.0,641.1 1336.7,636.5" fill="#3c3c3c" stroke="#111" stroke-width="0.8" stroke-linejoin="round" /><polygon points="1345.0,596.8 1352.6,600.4 1352.6,636.5 1345.0,641.1" fill="#8b8b8b" stroke="#111" stroke-width="0.8" stroke-linejoin="round" /><polygon points="1328.5,594.4 1345.0,588.9 1345.0,656.8" fill="#868686" stroke="#111" stroke-width="0.9" stroke-linejoin="round" /><polygon points="1328.5,594.4 1345.0,588.9 1384.3,607.4" fill="#9b9b9b" stroke="#111" stroke-width="0.9" stroke-linejoin="round" /><polygon points="1386.4,616.4 1394.7,620.4 1394.7,664.7 1386.4,660.0" fill="#3c3c3c" stroke="#111" stroke-width="0.8" stroke-linejoin="round" /><polygon points="1394.7,620.4 1402.3,623.9 1402.3,660.0 1394.7,664.7" fill="#8b8b8b" stroke="#111" stroke-width="0.8" stroke-linejoin="round" /><polygon points="1367.8,612.9 1384.3,607.4 1384.3,675.3" fill="#868686" stroke="#111" stroke-width="0.9" stroke-linejoin="round" /><polygon points="1367.8,612.9 1384.3,607.4 1423.5,626.0" fill="#9b9b9b" stroke="#111" stroke-width="0.9" stroke-linejoin="round" /><polygon points="1436.1,639.9 1444.4,643.9 1444.4,688.2 1436.1,683.5" fill="#3c3c3c" stroke="#111" stroke-width="0.8" stroke-linejoin="round" /><polygon points="1444.4,643.9 1452.0,647.5 1452.0,683.6 1444.4,688.2" fill="#8b8b8b" stroke="#111" stroke-width="0.8" stroke-linejoin="round" /><polygon points="1407.0,631.5 1423.5,626.0 1423.5,693.9" fill="#868686" stroke="#111" stroke-width="0.9" stroke-linejoin="round" /><polygon points="1407.0,631.5 1423.5,626.0 1462.8,644.6" fill="#9b9b9b" stroke="#111" stroke-width="0.9" stroke-linejoin="round" /><polygon points="1485.8,663.4 1494.1,667.4 1494.1,711.7 1485.8,707.0" fill="#3c3c3c" stroke="#111" stroke-width="0.8" stroke-linejoin="round" /><polygon points="1494.1,667.4 1501.7,671.0 1501.7,707.1 1494.1,711.7" fill="#8b8b8b" stroke="#111" stroke-width="0.8" stroke-linejoin="round" /><polygon points="1446.3,650.1 1462.8,644.6 1462.8,712.5" fill="#868686" stroke="#111" stroke-width="0.9" stroke-linejoin="round" /><polygon points="1446.3,650.1 1462.8,644.6 1502.0,663.1" fill="#9b9b9b" stroke="#111" stroke-width="0.9" stroke-linejoin="round" /><polygon points="1535.5,687.0 1541.3,689.7 1541.3,733.7 1535.5,730.6" fill="#3c3c3c" stroke="#111" stroke-width="0.8" stroke-linejoin="round" /><polygon points="1485.5,668.6 1502.0,663.1 1502.0,731.0" fill="#868686" stroke="#111" stroke-width="0.9" stroke-linejoin="round" /><polygon points="1485.5,668.6 1502.0,663.1 1541.3,681.7" fill="#9b9b9b" stroke="#111" stroke-width="0.9" stroke-linejoin="round" /><polygon points="1305.8,638.2 1345.0,656.8 1345.0,724.7 1305.8,706.1" fill="#d4d7dd" stroke="none" stroke-width="0" stroke-linejoin="round" /><polygon points="1305.8,706.1 1345.0,724.7 1345.0,687.7" fill="#7b7b7b" stroke="none" stroke-width="0" stroke-linejoin="round" /><path d="M1305.8 638.2L1305.8 706.1" stroke="#111" stroke-width="0.9"/><polygon points="1345.0,656.8 1384.3,675.3 1384.3,743.2 1345.0,724.7" fill="#707070" stroke="none" stroke-width="0" stroke-linejoin="round" /><polygon points="1354.0,661.8 1376.0,670.8 1354.0,681.8" fill="#d4d7dd" stroke="none" stroke-width="0" stroke-linejoin="round" /><path d="M1345.0 656.8L1345.0 724.7" stroke="#111" stroke-width="0.9"/><polygon points="1384.3,675.3 1423.5,693.9 1423.5,761.8 1384.3,743.2" fill="#6c6c6c" stroke="none" stroke-width="0" stroke-linejoin="round" /><polygon points="1384.3,743.2 1423.5,761.8 1423.5,746.8 1384.3,740.2" fill="#737373" stroke="none" stroke-width="0" stroke-linejoin="round" /><path d="M1384.3 675.3L1384.3 743.2" stroke="#111" stroke-width="0.9"/><polygon points="1423.5,693.9 1462.8,712.5 1462.8,780.4 1423.5,761.8" fill="#6a6a6a" stroke="none" stroke-width="0" stroke-linejoin="round" /><polygon points="1423.5,761.8 1462.8,780.4 1462.8,765.4 1423.5,758.8" fill="#737373" stroke="none" stroke-width="0" stroke-linejoin="round" /><path d="M1423.5 693.9L1423.5 761.8" stroke="#111" stroke-width="0.9"/><polygon points="1462.8,712.5 1502.0,731.0 1502.0,798.9 1462.8,780.4" fill="#646464" stroke="none" stroke-width="0" stroke-linejoin="round" /><polygon points="1462.8,780.4 1502.0,798.9 1502.0,783.9 1462.8,777.4" fill="#737373" stroke="none" stroke-width="0" stroke-linejoin="round" /><path d="M1462.8 712.5L1462.8 780.4" stroke="#111" stroke-width="0.9"/><polygon points="1502.0,731.0 1541.3,749.6 1541.3,817.5 1502.0,798.9" fill="#616161" stroke="none" stroke-width="0" stroke-linejoin="round" /><polygon points="1502.0,798.9 1541.3,817.5 1541.3,802.5 1502.0,795.9" fill="#737373" stroke="none" stroke-width="0" stroke-linejoin="round" /><path d="M1502.0 731.0L1502.0 798.9" stroke="#111" stroke-width="0.9"/><polygon points="1289.3,643.7 1305.8,638.2 1305.8,706.1" fill="#868686" stroke="#111" stroke-width="0.9" stroke-linejoin="round" /><polygon points="1289.3,643.7 1305.8,638.2 1345.0,656.8" fill="#9b9b9b" stroke="#111" stroke-width="0.9" stroke-linejoin="round" /><polygon points="1336.7,660.8 1345.0,664.7 1345.0,709.0 1336.7,704.4" fill="#3c3c3c" stroke="#111" stroke-width="0.8" stroke-linejoin="round" /><polygon points="1345.0,664.7 1352.6,668.3 1352.6,704.4 1345.0,709.0" fill="#8b8b8b" stroke="#111" stroke-width="0.8" stroke-linejoin="round" /><polygon points="1328.5,662.3 1345.0,656.8 1345.0,724.7" fill="#868686" stroke="#111" stroke-width="0.9" stroke-linejoin="round" /><polygon points="1328.5,662.3 1345.0,656.8 1384.3,675.3" fill="#9b9b9b" stroke="#111" stroke-width="0.9" stroke-linejoin="round" /><polygon points="1386.4,684.3 1394.7,688.3 1394.7,732.6 1386.4,727.9" fill="#3c3c3c" stroke="#111" stroke-width="0.8" stroke-linejoin="round" /><polygon points="1394.7,688.3 1402.3,691.8 1402.3,727.9 1394.7,732.6" fill="#8b8b8b" stroke="#111" stroke-width="0.8" stroke-linejoin="round" /><polygon points="1367.8,680.8 1384.3,675.3 1384.3,743.2" fill="#868686" stroke="#111" stroke-width="0.9" stroke-linejoin="round" /><polygon points="1367.8,680.8 1384.3,675.3 1423.5,693.9" fill="#9b9b9b" stroke="#111" stroke-width="0.9" stroke-linejoin="round" /><polygon points="1436.1,707.8 1444.4,711.8 1444.4,756.1 1436.1,751.4" fill="#3c3c3c" stroke="#111" stroke-width="0.8" stroke-linejoin="round" /><polygon points="1444.4,711.8 1452.0,715.4 1452.0,751.5 1444.4,756.1" fill="#8b8b8b" stroke="#111" stroke-width="0.8" stroke-linejoin="round" /><polygon points="1407.0,699.4 1423.5,693.9 1423.5,761.8" fill="#868686" stroke="#111" stroke-width="0.9" stroke-linejoin="round" /><polygon points="1407.0,699.4 1423.5,693.9 1462.8,712.5" fill="#9b9b9b" stroke="#111" stroke-width="0.9" stroke-linejoin="round" /><polygon points="1485.8,731.3 1494.1,735.3 1494.1,779.6 1485.8,774.9" fill="#3c3c3c" stroke="#111" stroke-width="0.8" stroke-linejoin="round" /><polygon points="1494.1,735.3 1501.7,738.9 1501.7,775.0 1494.1,779.6" fill="#8b8b8b" stroke="#111" stroke-width="0.8" stroke-linejoin="round" /><polygon points="1446.3,718.0 1462.8,712.5 1462.8,780.4" fill="#868686" stroke="#111" stroke-width="0.9" stroke-linejoin="round" /><polygon points="1446.3,718.0 1462.8,712.5 1502.0,731.0" fill="#9b9b9b" stroke="#111" stroke-width="0.9" stroke-linejoin="round" /><polygon points="1535.5,754.9 1541.3,757.6 1541.3,801.6 1535.5,798.5" fill="#3c3c3c" stroke="#111" stroke-width="0.8" stroke-linejoin="round" /><polygon points="1485.5,736.5 1502.0,731.0 1502.0,798.9" fill="#868686" stroke="#111" stroke-width="0.9" stroke-linejoin="round" /><polygon points="1485.5,736.5 1502.0,731.0 1541.3,749.6" fill="#9b9b9b" stroke="#111" stroke-width="0.9" stroke-linejoin="round" /><polygon points="1305.8,706.1 1345.0,724.7 1345.0,792.6 1305.8,774.0" fill="#d4d7dd" stroke="none" stroke-width="0" stroke-linejoin="round" /><polygon points="1305.8,774.0 1345.0,792.6 1345.0,755.6" fill="#7b7b7b" stroke="none" stroke-width="0" stroke-linejoin="round" /><path d="M1305.8 706.1L1305.8 774.0" stroke="#111" stroke-width="0.9"/><polygon points="1345.0,724.7 1384.3,743.2 1384.3,811.1 1345.0,792.6" fill="#707070" stroke="none" stroke-width="0" stroke-linejoin="round" /><polygon points="1354.0,729.7 1376.0,738.7 1354.0,749.7" fill="#d4d7dd" stroke="none" stroke-width="0" stroke-linejoin="round" /><path d="M1345.0 724.7L1345.0 792.6" stroke="#111" stroke-width="0.9"/><polygon points="1384.3,743.2 1423.5,761.8 1423.5,829.7 1384.3,811.1" fill="#6c6c6c" stroke="none" stroke-width="0" stroke-linejoin="round" /><polygon points="1384.3,811.1 1423.5,829.7 1423.5,814.7 1384.3,808.1" fill="#737373" stroke="none" stroke-width="0" stroke-linejoin="round" /><path d="M1384.3 743.2L1384.3 811.1" stroke="#111" stroke-width="0.9"/><polygon points="1423.5,761.8 1462.8,780.4 1462.8,848.3 1423.5,829.7" fill="#6a6a6a" stroke="none" stroke-width="0" stroke-linejoin="round" /><polygon points="1423.5,829.7 1462.8,848.3 1462.8,833.3 1423.5,826.7" fill="#737373" stroke="none" stroke-width="0" stroke-linejoin="round" /><path d="M1423.5 761.8L1423.5 829.7" stroke="#111" stroke-width="0.9"/><polygon points="1462.8,780.4 1502.0,798.9 1502.0,866.8 1462.8,848.3" fill="#646464" stroke="none" stroke-width="0" stroke-linejoin="round" /><polygon points="1462.8,848.3 1502.0,866.8 1502.0,851.8 1462.8,845.3" fill="#737373" stroke="none" stroke-width="0" stroke-linejoin="round" /><path d="M1462.8 780.4L1462.8 848.3" stroke="#111" stroke-width="0.9"/><polygon points="1502.0,798.9 1541.3,817.5 1541.3,885.4 1502.0,866.8" fill="#616161" stroke="none" stroke-width="0" stroke-linejoin="round" /><polygon points="1502.0,866.8 1541.3,885.4 1541.3,870.4 1502.0,863.8" fill="#737373" stroke="none" stroke-width="0" stroke-linejoin="round" /><path d="M1502.0 798.9L1502.0 866.8" stroke="#111" stroke-width="0.9"/><polygon points="1289.3,711.6 1305.8,706.1 1305.8,774.0" fill="#868686" stroke="#111" stroke-width="0.9" stroke-linejoin="round" /><polygon points="1289.3,711.6 1305.8,706.1 1345.0,724.7" fill="#9b9b9b" stroke="#111" stroke-width="0.9" stroke-linejoin="round" /><polygon points="1336.7,728.7 1345.0,732.6 1345.0,776.9 1336.7,772.3" fill="#3c3c3c" stroke="#111" stroke-width="0.8" stroke-linejoin="round" /><polygon points="1345.0,732.6 1352.6,736.2 1352.6,772.3 1345.0,776.9" fill="#8b8b8b" stroke="#111" stroke-width="0.8" stroke-linejoin="round" /><polygon points="1328.5,730.2 1345.0,724.7 1345.0,792.6" fill="#868686" stroke="#111" stroke-width="0.9" stroke-linejoin="round" /><polygon points="1328.5,730.2 1345.0,724.7 1384.3,743.2" fill="#9b9b9b" stroke="#111" stroke-width="0.9" stroke-linejoin="round" /><polygon points="1386.4,752.2 1394.7,756.2 1394.7,800.5 1386.4,795.8" fill="#3c3c3c" stroke="#111" stroke-width="0.8" stroke-linejoin="round" /><polygon points="1394.7,756.2 1402.3,759.7 1402.3,795.8 1394.7,800.5" fill="#8b8b8b" stroke="#111" stroke-width="0.8" stroke-linejoin="round" /><polygon points="1367.8,748.7 1384.3,743.2 1384.3,811.1" fill="#868686" stroke="#111" stroke-width="0.9" stroke-linejoin="round" /><polygon points="1367.8,748.7 1384.3,743.2 1423.5,761.8" fill="#9b9b9b" stroke="#111" stroke-width="0.9" stroke-linejoin="round" /><polygon points="1436.1,775.7 1444.4,779.7 1444.4,824.0 1436.1,819.3" fill="#3c3c3c" stroke="#111" stroke-width="0.8" stroke-linejoin="round" /><polygon points="1444.4,779.7 1452.0,783.3 1452.0,819.4 1444.4,824.0" fill="#8b8b8b" stroke="#111" stroke-width="0.8" stroke-linejoin="round" /><polygon points="1407.0,767.3 1423.5,761.8 1423.5,829.7" fill="#868686" stroke="#111" stroke-width="0.9" stroke-linejoin="round" /><polygon points="1407.0,767.3 1423.5,761.8 1462.8,780.4" fill="#9b9b9b" stroke="#111" stroke-width="0.9" stroke-linejoin="round" /><polygon points="1485.8,799.2 1494.1,803.2 1494.1,847.5 1485.8,842.8" fill="#3c3c3c" stroke="#111" stroke-width="0.8" stroke-linejoin="round" /><polygon points="1494.1,803.2 1501.7,806.8 1501.7,842.9 1494.1,847.5" fill="#8b8b8b" stroke="#111" stroke-width="0.8" stroke-linejoin="round" /><polygon points="1446.3,785.9 1462.8,780.4 1462.8,848.3" fill="#868686" stroke="#111" stroke-width="0.9" stroke-linejoin="round" /><polygon points="1446.3,785.9 1462.8,780.4 1502.0,798.9" fill="#9b9b9b" stroke="#111" stroke-width="0.9" stroke-linejoin="round" /><polygon points="1535.5,822.8 1541.3,825.5 1541.3,869.5 1535.5,866.4" fill="#3c3c3c" stroke="#111" stroke-width="0.8" stroke-linejoin="round" /><polygon points="1485.5,804.4 1502.0,798.9 1502.0,866.8" fill="#868686" stroke="#111" stroke-width="0.9" stroke-linejoin="round" /><polygon points="1485.5,804.4 1502.0,798.9 1541.3,817.5" fill="#9b9b9b" stroke="#111" stroke-width="0.9" stroke-linejoin="round" /><polygon points="1305.8,774.0 1345.0,792.6 1345.0,860.5 1305.8,841.9" fill="#d4d7dd" stroke="none" stroke-width="0" stroke-linejoin="round" /><polygon points="1305.8,841.9 1345.0,860.5 1345.0,823.5" fill="#7b7b7b" stroke="none" stroke-width="0" stroke-linejoin="round" /><path d="M1305.8 774.0L1305.8 841.9" stroke="#111" stroke-width="0.9"/><polygon points="1345.0,792.6 1384.3,811.1 1384.3,879.0 1345.0,860.5" fill="#707070" stroke="none" stroke-width="0" stroke-linejoin="round" /><polygon points="1354.0,797.6 1376.0,806.6 1354.0,817.6" fill="#d4d7dd" stroke="none" stroke-width="0" stroke-linejoin="round" /><path d="M1345.0 792.6L1345.0 860.5" stroke="#111" stroke-width="0.9"/><polygon points="1384.3,811.1 1423.5,829.7 1423.5,897.6 1384.3,879.0" fill="#6c6c6c" stroke="none" stroke-width="0" stroke-linejoin="round" /><polygon points="1384.3,879.0 1423.5,897.6 1423.5,882.6 1384.3,876.0" fill="#737373" stroke="none" stroke-width="0" stroke-linejoin="round" /><path d="M1384.3 811.1L1384.3 879.0" stroke="#111" stroke-width="0.9"/><polygon points="1423.5,829.7 1462.8,848.3 1462.8,916.2 1423.5,897.6" fill="#6a6a6a" stroke="none" stroke-width="0" stroke-linejoin="round" /><polygon points="1423.5,897.6 1462.8,916.2 1462.8,901.2 1423.5,894.6" fill="#737373" stroke="none" stroke-width="0" stroke-linejoin="round" /><path d="M1423.5 829.7L1423.5 897.6" stroke="#111" stroke-width="0.9"/><polygon points="1462.8,848.3 1502.0,866.8 1502.0,934.7 1462.8,916.2" fill="#646464" stroke="none" stroke-width="0" stroke-linejoin="round" /><polygon points="1462.8,916.2 1502.0,934.7 1502.0,919.7 1462.8,913.2" fill="#737373" stroke="none" stroke-width="0" stroke-linejoin="round" /><path d="M1462.8 848.3L1462.8 916.2" stroke="#111" stroke-width="0.9"/><polygon points="1502.0,866.8 1541.3,885.4 1541.3,953.3 1502.0,934.7" fill="#616161" stroke="none" stroke-width="0" stroke-linejoin="round" /><polygon points="1502.0,934.7 1541.3,953.3 1541.3,938.3 1502.0,931.7" fill="#737373" stroke="none" stroke-width="0" stroke-linejoin="round" /><path d="M1502.0 866.8L1502.0 934.7" stroke="#111" stroke-width="0.9"/><polygon points="1289.3,779.5 1305.8,774.0 1305.8,841.9" fill="#868686" stroke="#111" stroke-width="0.9" stroke-linejoin="round" /><polygon points="1289.3,779.5 1305.8,774.0 1345.0,792.6" fill="#9b9b9b" stroke="#111" stroke-width="0.9" stroke-linejoin="round" /><polygon points="1336.7,796.6 1345.0,800.5 1345.0,844.8 1336.7,840.2" fill="#3c3c3c" stroke="#111" stroke-width="0.8" stroke-linejoin="round" /><polygon points="1345.0,800.5 1352.6,804.1 1352.6,840.2 1345.0,844.8" fill="#8b8b8b" stroke="#111" stroke-width="0.8" stroke-linejoin="round" /><polygon points="1328.5,798.1 1345.0,792.6 1345.0,860.5" fill="#868686" stroke="#111" stroke-width="0.9" stroke-linejoin="round" /><polygon points="1328.5,798.1 1345.0,792.6 1384.3,811.1" fill="#9b9b9b" stroke="#111" stroke-width="0.9" stroke-linejoin="round" /><polygon points="1386.4,820.1 1394.7,824.1 1394.7,868.4 1386.4,863.7" fill="#3c3c3c" stroke="#111" stroke-width="0.8" stroke-linejoin="round" /><polygon points="1394.7,824.1 1402.3,827.6 1402.3,863.7 1394.7,868.4" fill="#8b8b8b" stroke="#111" stroke-width="0.8" stroke-linejoin="round" /><polygon points="1367.8,816.6 1384.3,811.1 1384.3,879.0" fill="#868686" stroke="#111" stroke-width="0.9" stroke-linejoin="round" /><polygon points="1367.8,816.6 1384.3,811.1 1423.5,829.7" fill="#9b9b9b" stroke="#111" stroke-width="0.9" stroke-linejoin="round" /><polygon points="1436.1,843.6 1444.4,847.6 1444.4,891.9 1436.1,887.2" fill="#3c3c3c" stroke="#111" stroke-width="0.8" stroke-linejoin="round" /><polygon points="1444.4,847.6 1452.0,851.2 1452.0,887.3 1444.4,891.9" fill="#8b8b8b" stroke="#111" stroke-width="0.8" stroke-linejoin="round" /><polygon points="1407.0,835.2 1423.5,829.7 1423.5,897.6" fill="#868686" stroke="#111" stroke-width="0.9" stroke-linejoin="round" /><polygon points="1407.0,835.2 1423.5,829.7 1462.8,848.3" fill="#9b9b9b" stroke="#111" stroke-width="0.9" stroke-linejoin="round" /><polygon points="1485.8,867.1 1494.1,871.1 1494.1,915.4 1485.8,910.7" fill="#3c3c3c" stroke="#111" stroke-width="0.8" stroke-linejoin="round" /><polygon points="1494.1,871.1 1501.7,874.7 1501.7,910.8 1494.1,915.4" fill="#8b8b8b" stroke="#111" stroke-width="0.8" stroke-linejoin="round" /><polygon points="1446.3,853.8 1462.8,848.3 1462.8,916.2" fill="#868686" stroke="#111" stroke-width="0.9" stroke-linejoin="round" /><polygon points="1446.3,853.8 1462.8,848.3 1502.0,866.8" fill="#9b9b9b" stroke="#111" stroke-width="0.9" stroke-linejoin="round" /><polygon points="1535.5,890.7 1541.3,893.4 1541.3,937.4 1535.5,934.3" fill="#3c3c3c" stroke="#111" stroke-width="0.8" stroke-linejoin="round" /><polygon points="1485.5,872.3 1502.0,866.8 1502.0,934.7" fill="#868686" stroke="#111" stroke-width="0.9" stroke-linejoin="round" /><polygon points="1485.5,872.3 1502.0,866.8 1541.3,885.4" fill="#9b9b9b" stroke="#111" stroke-width="0.9" stroke-linejoin="round" /><polygon points="1305.8,841.9 1345.0,860.5 1345.0,928.4 1305.8,909.8" fill="#d4d7dd" stroke="none" stroke-width="0" stroke-linejoin="round" /><polygon points="1305.8,909.8 1345.0,928.4 1345.0,891.4" fill="#b7b9be" stroke="none" stroke-width="0" stroke-linejoin="round" /><path d="M1305.8 841.9L1305.8 909.8" stroke="#111" stroke-width="0.9"/><polygon points="1345.0,860.5 1384.3,879.0 1384.3,946.9 1345.0,928.4" fill="#a9abaf" stroke="none" stroke-width="0" stroke-linejoin="round" /><polygon points="1354.0,865.5 1384.0,879.5 1384.0,898.5 1354.0,904.5" fill="#d4d7dd" stroke="none" stroke-width="0" stroke-linejoin="round" /><path d="M1345.0 860.5L1345.0 928.4" stroke="#111" stroke-width="0.9"/><polygon points="1384.3,879.0 1423.5,897.6 1423.5,965.5 1384.3,946.9" fill="#a9abaf" stroke="none" stroke-width="0" stroke-linejoin="round" /><path d="M1384.3 879.0L1384.3 946.9" stroke="#111" stroke-width="0.9"/><polygon points="1423.5,897.6 1462.8,916.2 1462.8,984.1 1423.5,965.5" fill="#a9abaf" stroke="none" stroke-width="0" stroke-linejoin="round" /><path d="M1423.5 897.6L1423.5 965.5" stroke="#111" stroke-width="0.9"/><polygon points="1462.8,916.2 1502.0,934.7 1502.0,1002.6 1462.8,984.1" fill="#a9abaf" stroke="none" stroke-width="0" stroke-linejoin="round" /><path d="M1462.8 916.2L1462.8 984.1" stroke="#111" stroke-width="0.9"/><polygon points="1502.0,934.7 1541.3,953.3 1541.3,1021.2 1502.0,1002.6" fill="#a9abaf" stroke="none" stroke-width="0" stroke-linejoin="round" /><path d="M1502.0 934.7L1502.0 1002.6" stroke="#111" stroke-width="0.9"/><polygon points="1289.3,847.4 1305.8,841.9 1305.8,909.8" fill="#868686" stroke="#111" stroke-width="0.9" stroke-linejoin="round" /><polygon points="1289.3,847.4 1305.8,841.9 1345.0,860.5" fill="#9b9b9b" stroke="#111" stroke-width="0.9" stroke-linejoin="round" /><polygon points="1336.7,864.5 1345.0,868.4 1345.0,917.7 1336.7,913.1" fill="#3c3c3c" stroke="#111" stroke-width="0.8" stroke-linejoin="round" /><polygon points="1345.0,868.4 1352.6,872.0 1352.6,913.1 1345.0,917.7" fill="#8b8b8b" stroke="#111" stroke-width="0.8" stroke-linejoin="round" /><polygon points="1328.5,866.0 1345.0,860.5 1345.0,928.4" fill="#868686" stroke="#111" stroke-width="0.9" stroke-linejoin="round" /><polygon points="1328.5,866.0 1345.0,860.5 1384.3,879.0" fill="#9b9b9b" stroke="#111" stroke-width="0.9" stroke-linejoin="round" /><polygon points="1386.4,888.0 1394.7,892.0 1394.7,941.3 1386.4,936.6" fill="#3c3c3c" stroke="#111" stroke-width="0.8" stroke-linejoin="round" /><polygon points="1394.7,892.0 1402.3,895.5 1402.3,936.6 1394.7,941.3" fill="#8b8b8b" stroke="#111" stroke-width="0.8" stroke-linejoin="round" /><polygon points="1367.8,884.5 1384.3,879.0 1384.3,946.9" fill="#868686" stroke="#111" stroke-width="0.9" stroke-linejoin="round" /><polygon points="1367.8,884.5 1384.3,879.0 1423.5,897.6" fill="#9b9b9b" stroke="#111" stroke-width="0.9" stroke-linejoin="round" /><polygon points="1436.1,911.5 1444.4,915.5 1444.4,964.8 1436.1,960.1" fill="#3c3c3c" stroke="#111" stroke-width="0.8" stroke-linejoin="round" /><polygon points="1444.4,915.5 1452.0,919.1 1452.0,960.2 1444.4,964.8" fill="#8b8b8b" stroke="#111" stroke-width="0.8" stroke-linejoin="round" /><polygon points="1407.0,903.1 1423.5,897.6 1423.5,965.5" fill="#868686" stroke="#111" stroke-width="0.9" stroke-linejoin="round" /><polygon points="1407.0,903.1 1423.5,897.6 1462.8,916.2" fill="#9b9b9b" stroke="#111" stroke-width="0.9" stroke-linejoin="round" /><polygon points="1485.8,935.0 1494.1,939.0 1494.1,988.3 1485.8,983.6" fill="#3c3c3c" stroke="#111" stroke-width="0.8" stroke-linejoin="round" /><polygon points="1494.1,939.0 1501.7,942.6 1501.7,983.7 1494.1,988.3" fill="#8b8b8b" stroke="#111" stroke-width="0.8" stroke-linejoin="round" /><polygon points="1446.3,921.7 1462.8,916.2 1462.8,984.1" fill="#868686" stroke="#111" stroke-width="0.9" stroke-linejoin="round" /><polygon points="1446.3,921.7 1462.8,916.2 1502.0,934.7" fill="#9b9b9b" stroke="#111" stroke-width="0.9" stroke-linejoin="round" /><polygon points="1535.5,958.6 1541.3,961.3 1541.3,1010.3 1535.5,1007.2" fill="#3c3c3c" stroke="#111" stroke-width="0.8" stroke-linejoin="round" /><polygon points="1485.5,940.2 1502.0,934.7 1502.0,1002.6" fill="#868686" stroke="#111" stroke-width="0.9" stroke-linejoin="round" /><polygon points="1485.5,940.2 1502.0,934.7 1541.3,953.3" fill="#9b9b9b" stroke="#111" stroke-width="0.9" stroke-linejoin="round" /><polygon points="1541.3,478.0 1593.8,458.4 1593.8,526.2 1541.3,545.9" fill="#626262" stroke="none" stroke-width="0" stroke-linejoin="round" /><polygon points="1541.3,545.9 1593.8,526.2 1593.8,520.2 1541.3,540.9" fill="#868686" stroke="none" stroke-width="0" stroke-linejoin="round" /><polygon points="1545.8,498.0 1551.8,496.0 1551.8,528.0 1545.8,530.0" fill="#8c8c8c" stroke="#111" stroke-width="0.8" stroke-linejoin="round" /><path d="M1541.3 478.0L1541.3 545.9" stroke="#111" stroke-width="1.1"/><path d="M1541.3 545.9L1593.8 526.2" stroke="#111" stroke-width="0.9"/><path d="M1541.3 478.0L1555.6 485.3Q1547.6 513.3 1542.3 545.9Z" fill="#3a3a3a" stroke="#111" stroke-width="0.9" stroke-linejoin="round"/><polygon points="1541.3,478.0 1555.6,485.3 1593.8,458.4" fill="#9d9d9d" stroke="#111" stroke-width="0.9" stroke-linejoin="round" /><polygon points="1541.3,545.9 1593.8,526.2 1593.8,594.1 1541.3,613.8" fill="#626262" stroke="none" stroke-width="0" stroke-linejoin="round" /><polygon points="1541.3,613.8 1593.8,594.1 1593.8,588.1 1541.3,608.8" fill="#868686" stroke="none" stroke-width="0" stroke-linejoin="round" /><polygon points="1545.8,565.9 1551.8,563.9 1551.8,595.9 1545.8,597.9" fill="#8c8c8c" stroke="#111" stroke-width="0.8" stroke-linejoin="round" /><path d="M1541.3 545.9L1541.3 613.8" stroke="#111" stroke-width="1.1"/><path d="M1541.3 613.8L1593.8 594.1" stroke="#111" stroke-width="0.9"/><path d="M1541.3 545.9L1555.6 553.2Q1547.6 581.2 1542.3 613.8Z" fill="#3a3a3a" stroke="#111" stroke-width="0.9" stroke-linejoin="round"/><polygon points="1541.3,545.9 1555.6,553.2 1593.8,526.2" fill="#9d9d9d" stroke="#111" stroke-width="0.9" stroke-linejoin="round" /><polygon points="1541.3,613.8 1593.8,594.1 1593.8,662.0 1541.3,681.7" fill="#626262" stroke="none" stroke-width="0" stroke-linejoin="round" /><polygon points="1541.3,681.7 1593.8,662.0 1593.8,656.0 1541.3,676.7" fill="#868686" stroke="none" stroke-width="0" stroke-linejoin="round" /><polygon points="1545.8,633.8 1551.8,631.8 1551.8,663.8 1545.8,665.8" fill="#8c8c8c" stroke="#111" stroke-width="0.8" stroke-linejoin="round" /><path d="M1541.3 613.8L1541.3 681.7" stroke="#111" stroke-width="1.1"/><path d="M1541.3 681.7L1593.8 662.0" stroke="#111" stroke-width="0.9"/><path d="M1541.3 613.8L1555.6 621.1Q1547.6 649.1 1542.3 681.7Z" fill="#3a3a3a" stroke="#111" stroke-width="0.9" stroke-linejoin="round"/><polygon points="1541.3,613.8 1555.6,621.1 1593.8,594.1" fill="#9d9d9d" stroke="#111" stroke-width="0.9" stroke-linejoin="round" /><polygon points="1541.3,681.7 1593.8,662.1 1593.8,730.0 1541.3,749.6" fill="#626262" stroke="none" stroke-width="0" stroke-linejoin="round" /><polygon points="1541.3,749.6 1593.8,730.0 1593.8,724.0 1541.3,744.6" fill="#868686" stroke="none" stroke-width="0" stroke-linejoin="round" /><polygon points="1545.8,701.7 1551.8,699.7 1551.8,731.7 1545.8,733.7" fill="#8c8c8c" stroke="#111" stroke-width="0.8" stroke-linejoin="round" /><path d="M1541.3 681.7L1541.3 749.6" stroke="#111" stroke-width="1.1"/><path d="M1541.3 749.6L1593.8 730.0" stroke="#111" stroke-width="0.9"/><path d="M1541.3 681.7L1555.6 689.0Q1547.6 717.0 1542.3 749.6Z" fill="#3a3a3a" stroke="#111" stroke-width="0.9" stroke-linejoin="round"/><polygon points="1541.3,681.7 1555.6,689.0 1593.8,662.1" fill="#9d9d9d" stroke="#111" stroke-width="0.9" stroke-linejoin="round" /><polygon points="1541.3,749.6 1593.8,730.0 1593.8,797.9 1541.3,817.5" fill="#626262" stroke="none" stroke-width="0" stroke-linejoin="round" /><polygon points="1541.3,817.5 1593.8,797.9 1593.8,791.9 1541.3,812.5" fill="#868686" stroke="none" stroke-width="0" stroke-linejoin="round" /><polygon points="1545.8,769.6 1551.8,767.6 1551.8,799.6 1545.8,801.6" fill="#8c8c8c" stroke="#111" stroke-width="0.8" stroke-linejoin="round" /><path d="M1541.3 749.6L1541.3 817.5" stroke="#111" stroke-width="1.1"/><path d="M1541.3 817.5L1593.8 797.9" stroke="#111" stroke-width="0.9"/><path d="M1541.3 749.6L1555.6 756.9Q1547.6 784.9 1542.3 817.5Z" fill="#3a3a3a" stroke="#111" stroke-width="0.9" stroke-linejoin="round"/><polygon points="1541.3,749.6 1555.6,756.9 1593.8,730.0" fill="#9d9d9d" stroke="#111" stroke-width="0.9" stroke-linejoin="round" /><polygon points="1541.3,817.5 1593.8,797.9 1593.8,865.8 1541.3,885.4" fill="#626262" stroke="none" stroke-width="0" stroke-linejoin="round" /><polygon points="1541.3,885.4 1593.8,865.8 1593.8,859.8 1541.3,880.4" fill="#868686" stroke="none" stroke-width="0" stroke-linejoin="round" /><polygon points="1545.8,837.5 1551.8,835.5 1551.8,867.5 1545.8,869.5" fill="#8c8c8c" stroke="#111" stroke-width="0.8" stroke-linejoin="round" /><path d="M1541.3 817.5L1541.3 885.4" stroke="#111" stroke-width="1.1"/><path d="M1541.3 885.4L1593.8 865.8" stroke="#111" stroke-width="0.9"/><path d="M1541.3 817.5L1555.6 824.8Q1547.6 852.8 1542.3 885.4Z" fill="#3a3a3a" stroke="#111" stroke-width="0.9" stroke-linejoin="round"/><polygon points="1541.3,817.5 1555.6,824.8 1593.8,797.9" fill="#9d9d9d" stroke="#111" stroke-width="0.9" stroke-linejoin="round" /><polygon points="1541.3,885.4 1593.8,865.8 1593.8,933.7 1541.3,953.3" fill="#626262" stroke="none" stroke-width="0" stroke-linejoin="round" /><polygon points="1541.3,953.3 1593.8,933.7 1593.8,927.7 1541.3,948.3" fill="#868686" stroke="none" stroke-width="0" stroke-linejoin="round" /><polygon points="1545.8,905.4 1551.8,903.4 1551.8,935.4 1545.8,937.4" fill="#8c8c8c" stroke="#111" stroke-width="0.8" stroke-linejoin="round" /><path d="M1541.3 885.4L1541.3 953.3" stroke="#111" stroke-width="1.1"/><path d="M1541.3 953.3L1593.8 933.7" stroke="#111" stroke-width="0.9"/><path d="M1541.3 885.4L1555.6 892.7Q1547.6 920.7 1542.3 953.3Z" fill="#3a3a3a" stroke="#111" stroke-width="0.9" stroke-linejoin="round"/><polygon points="1541.3,885.4 1555.6,892.7 1593.8,865.8" fill="#9d9d9d" stroke="#111" stroke-width="0.9" stroke-linejoin="round" /><polygon points="1541.3,953.3 1593.8,933.7 1593.8,1001.6 1541.3,1021.2" fill="#a9abaf" stroke="none" stroke-width="0" stroke-linejoin="round" /><polygon points="1545.8,973.3 1551.8,971.3 1551.8,1009.3 1545.8,1011.3" fill="#8c8c8c" stroke="#111" stroke-width="0.8" stroke-linejoin="round" /><path d="M1541.3 953.3L1541.3 1021.2" stroke="#111" stroke-width="1.1"/><path d="M1541.3 1021.2L1593.8 1001.6" stroke="#111" stroke-width="0.9"/><path d="M1541.3 953.3L1555.6 960.6Q1547.6 988.6 1542.3 1021.2Z" fill="#3a3a3a" stroke="#111" stroke-width="0.9" stroke-linejoin="round"/><polygon points="1541.3,953.3 1555.6,960.6 1593.8,933.7" fill="#9d9d9d" stroke="#111" stroke-width="0.9" stroke-linejoin="round" /><polygon points="1593.8,458.4 1646.4,438.7 1646.4,506.6 1593.8,526.2" fill="#626262" stroke="none" stroke-width="0" stroke-linejoin="round" /><polygon points="1593.8,526.2 1646.4,506.6 1646.4,500.6 1593.8,521.2" fill="#868686" stroke="none" stroke-width="0" stroke-linejoin="round" /><polygon points="1600.3,466.4 1607.8,463.9 1607.8,505.9 1600.3,508.4" fill="#8c8c8c" stroke="#111" stroke-width="0.8" stroke-linejoin="round" /><path d="M1593.8 458.4L1593.8 526.2" stroke="#111" stroke-width="1.1"/><path d="M1593.8 526.2L1646.4 506.6" stroke="#111" stroke-width="0.9"/><path d="M1593.8 458.4L1608.1 465.7Q1600.1 493.7 1594.8 526.2Z" fill="#3a3a3a" stroke="#111" stroke-width="0.9" stroke-linejoin="round"/><polygon points="1593.8,458.4 1608.1,465.7 1646.4,438.7" fill="#9d9d9d" stroke="#111" stroke-width="0.9" stroke-linejoin="round" /><polygon points="1593.8,526.2 1646.4,506.6 1646.4,574.5 1593.8,594.1" fill="#626262" stroke="none" stroke-width="0" stroke-linejoin="round" /><polygon points="1593.8,594.1 1646.4,574.5 1646.4,568.5 1593.8,589.1" fill="#868686" stroke="none" stroke-width="0" stroke-linejoin="round" /><polygon points="1600.3,534.2 1607.8,531.8 1607.8,573.8 1600.3,576.2" fill="#8c8c8c" stroke="#111" stroke-width="0.8" stroke-linejoin="round" /><path d="M1593.8 526.2L1593.8 594.1" stroke="#111" stroke-width="1.1"/><path d="M1593.8 594.1L1646.4 574.5" stroke="#111" stroke-width="0.9"/><path d="M1593.8 526.2L1608.1 533.5Q1600.1 561.5 1594.8 594.1Z" fill="#3a3a3a" stroke="#111" stroke-width="0.9" stroke-linejoin="round"/><polygon points="1593.8,526.2 1608.1,533.5 1646.4,506.6" fill="#9d9d9d" stroke="#111" stroke-width="0.9" stroke-linejoin="round" /><polygon points="1593.8,594.2 1646.4,574.5 1646.4,642.4 1593.8,662.1" fill="#626262" stroke="none" stroke-width="0" stroke-linejoin="round" /><polygon points="1593.8,662.1 1646.4,642.4 1646.4,636.4 1593.8,657.1" fill="#868686" stroke="none" stroke-width="0" stroke-linejoin="round" /><polygon points="1600.3,602.2 1607.8,599.7 1607.8,641.7 1600.3,644.2" fill="#8c8c8c" stroke="#111" stroke-width="0.8" stroke-linejoin="round" /><path d="M1593.8 594.2L1593.8 662.1" stroke="#111" stroke-width="1.1"/><path d="M1593.8 662.1L1646.4 642.4" stroke="#111" stroke-width="0.9"/><path d="M1593.8 594.2L1608.1 601.5Q1600.1 629.5 1594.8 662.1Z" fill="#3a3a3a" stroke="#111" stroke-width="0.9" stroke-linejoin="round"/><polygon points="1593.8,594.2 1608.1,601.5 1646.4,574.5" fill="#9d9d9d" stroke="#111" stroke-width="0.9" stroke-linejoin="round" /><polygon points="1593.8,662.1 1646.4,642.4 1646.4,710.3 1593.8,730.0" fill="#626262" stroke="none" stroke-width="0" stroke-linejoin="round" /><polygon points="1593.8,730.0 1646.4,710.3 1646.4,704.3 1593.8,725.0" fill="#868686" stroke="none" stroke-width="0" stroke-linejoin="round" /><polygon points="1600.3,670.1 1607.8,667.6 1607.8,709.6 1600.3,712.1" fill="#8c8c8c" stroke="#111" stroke-width="0.8" stroke-linejoin="round" /><path d="M1593.8 662.1L1593.8 730.0" stroke="#111" stroke-width="1.1"/><path d="M1593.8 730.0L1646.4 710.3" stroke="#111" stroke-width="0.9"/><path d="M1593.8 662.1L1608.1 669.4Q1600.1 697.4 1594.8 730.0Z" fill="#3a3a3a" stroke="#111" stroke-width="0.9" stroke-linejoin="round"/><polygon points="1593.8,662.1 1608.1,669.4 1646.4,642.4" fill="#9d9d9d" stroke="#111" stroke-width="0.9" stroke-linejoin="round" /><polygon points="1593.8,730.0 1646.4,710.3 1646.4,778.2 1593.8,797.9" fill="#626262" stroke="none" stroke-width="0" stroke-linejoin="round" /><polygon points="1593.8,797.9 1646.4,778.2 1646.4,772.2 1593.8,792.9" fill="#868686" stroke="none" stroke-width="0" stroke-linejoin="round" /><polygon points="1600.3,738.0 1607.8,735.5 1607.8,777.5 1600.3,780.0" fill="#8c8c8c" stroke="#111" stroke-width="0.8" stroke-linejoin="round" /><path d="M1593.8 730.0L1593.8 797.9" stroke="#111" stroke-width="1.1"/><path d="M1593.8 797.9L1646.4 778.2" stroke="#111" stroke-width="0.9"/><path d="M1593.8 730.0L1608.1 737.2Q1600.1 765.2 1594.8 797.9Z" fill="#3a3a3a" stroke="#111" stroke-width="0.9" stroke-linejoin="round"/><polygon points="1593.8,730.0 1608.1,737.2 1646.4,710.3" fill="#9d9d9d" stroke="#111" stroke-width="0.9" stroke-linejoin="round" /><polygon points="1593.8,797.9 1646.4,778.2 1646.4,846.1 1593.8,865.8" fill="#626262" stroke="none" stroke-width="0" stroke-linejoin="round" /><polygon points="1593.8,865.8 1646.4,846.1 1646.4,840.1 1593.8,860.8" fill="#868686" stroke="none" stroke-width="0" stroke-linejoin="round" /><polygon points="1600.3,805.9 1607.8,803.4 1607.8,845.4 1600.3,847.9" fill="#8c8c8c" stroke="#111" stroke-width="0.8" stroke-linejoin="round" /><path d="M1593.8 797.9L1593.8 865.8" stroke="#111" stroke-width="1.1"/><path d="M1593.8 865.8L1646.4 846.1" stroke="#111" stroke-width="0.9"/><path d="M1593.8 797.9L1608.1 805.1Q1600.1 833.1 1594.8 865.8Z" fill="#3a3a3a" stroke="#111" stroke-width="0.9" stroke-linejoin="round"/><polygon points="1593.8,797.9 1608.1,805.1 1646.4,778.2" fill="#9d9d9d" stroke="#111" stroke-width="0.9" stroke-linejoin="round" /><polygon points="1593.8,865.8 1646.4,846.1 1646.4,914.0 1593.8,933.6" fill="#626262" stroke="none" stroke-width="0" stroke-linejoin="round" /><polygon points="1593.8,933.6 1646.4,914.0 1646.4,908.0 1593.8,928.6" fill="#868686" stroke="none" stroke-width="0" stroke-linejoin="round" /><polygon points="1600.3,873.8 1607.8,871.2 1607.8,913.2 1600.3,915.8" fill="#8c8c8c" stroke="#111" stroke-width="0.8" stroke-linejoin="round" /><path d="M1593.8 865.8L1593.8 933.6" stroke="#111" stroke-width="1.1"/><path d="M1593.8 933.6L1646.4 914.0" stroke="#111" stroke-width="0.9"/><path d="M1593.8 865.8L1608.1 873.0Q1600.1 901.0 1594.8 933.6Z" fill="#3a3a3a" stroke="#111" stroke-width="0.9" stroke-linejoin="round"/><polygon points="1593.8,865.8 1608.1,873.0 1646.4,846.1" fill="#9d9d9d" stroke="#111" stroke-width="0.9" stroke-linejoin="round" /><polygon points="1593.8,933.7 1646.4,914.0 1646.4,981.9 1593.8,1001.6" fill="#a9abaf" stroke="none" stroke-width="0" stroke-linejoin="round" /><polygon points="1600.3,941.7 1607.8,939.2 1607.8,987.2 1600.3,989.7" fill="#8c8c8c" stroke="#111" stroke-width="0.8" stroke-linejoin="round" /><path d="M1593.8 933.7L1593.8 1001.6" stroke="#111" stroke-width="1.1"/><path d="M1593.8 1001.6L1646.4 981.9" stroke="#111" stroke-width="0.9"/><path d="M1593.8 933.7L1608.1 941.0Q1600.1 969.0 1594.8 1001.6Z" fill="#3a3a3a" stroke="#111" stroke-width="0.9" stroke-linejoin="round"/><polygon points="1593.8,933.7 1608.1,941.0 1646.4,914.0" fill="#9d9d9d" stroke="#111" stroke-width="0.9" stroke-linejoin="round" /><polygon points="1646.4,438.7 1699.0,419.0 1699.0,486.9 1646.4,506.6" fill="#606060" stroke="none" stroke-width="0" stroke-linejoin="round" /><polygon points="1646.4,506.6 1699.0,486.9 1699.0,480.9 1646.4,501.6" fill="#868686" stroke="none" stroke-width="0" stroke-linejoin="round" /><polygon points="1682.0,431.0 1699.0,424.5 1699.0,439.0 1686.0,434.0" fill="#959595" stroke="none" stroke-width="0" stroke-linejoin="round" /><polygon points="1655.7,446.7 1663.1,444.2 1663.1,486.2 1655.7,488.7" fill="#8c8c8c" stroke="#111" stroke-width="0.8" stroke-linejoin="round" /><path d="M1646.4 438.7L1646.4 506.6" stroke="#111" stroke-width="1.1"/><path d="M1646.4 506.6L1699.0 486.9" stroke="#111" stroke-width="0.9"/><path d="M1646.4 438.7L1660.7 446.0Q1652.7 474.0 1647.4 506.6Z" fill="#3a3a3a" stroke="#111" stroke-width="0.9" stroke-linejoin="round"/><polygon points="1646.4,438.7 1660.7,446.0 1699.0,419.0" fill="#9d9d9d" stroke="#111" stroke-width="0.9" stroke-linejoin="round" /><polygon points="1646.4,506.6 1699.0,487.0 1699.0,554.9 1646.4,574.5" fill="#606060" stroke="none" stroke-width="0" stroke-linejoin="round" /><polygon points="1646.4,574.5 1699.0,554.9 1699.0,548.9 1646.4,569.5" fill="#868686" stroke="none" stroke-width="0" stroke-linejoin="round" /><polygon points="1682.0,499.0 1699.0,492.5 1699.0,507.0 1686.0,502.0" fill="#959595" stroke="none" stroke-width="0" stroke-linejoin="round" /><polygon points="1655.7,514.6 1663.1,512.1 1663.1,554.1 1655.7,556.6" fill="#8c8c8c" stroke="#111" stroke-width="0.8" stroke-linejoin="round" /><path d="M1646.4 506.6L1646.4 574.5" stroke="#111" stroke-width="1.1"/><path d="M1646.4 574.5L1699.0 554.9" stroke="#111" stroke-width="0.9"/><path d="M1646.4 506.6L1660.7 513.9Q1652.7 541.9 1647.4 574.5Z" fill="#3a3a3a" stroke="#111" stroke-width="0.9" stroke-linejoin="round"/><polygon points="1646.4,506.6 1660.7,513.9 1699.0,487.0" fill="#9d9d9d" stroke="#111" stroke-width="0.9" stroke-linejoin="round" /><polygon points="1646.4,574.5 1699.0,554.9 1699.0,622.8 1646.4,642.4" fill="#606060" stroke="none" stroke-width="0" stroke-linejoin="round" /><polygon points="1646.4,642.4 1699.0,622.8 1699.0,616.8 1646.4,637.4" fill="#868686" stroke="none" stroke-width="0" stroke-linejoin="round" /><polygon points="1682.0,566.9 1699.0,560.4 1699.0,574.9 1686.0,569.9" fill="#959595" stroke="none" stroke-width="0" stroke-linejoin="round" /><polygon points="1655.7,582.5 1663.1,580.0 1663.1,622.0 1655.7,624.5" fill="#8c8c8c" stroke="#111" stroke-width="0.8" stroke-linejoin="round" /><path d="M1646.4 574.5L1646.4 642.4" stroke="#111" stroke-width="1.1"/><path d="M1646.4 642.4L1699.0 622.8" stroke="#111" stroke-width="0.9"/><path d="M1646.4 574.5L1660.7 581.8Q1652.7 609.8 1647.4 642.4Z" fill="#3a3a3a" stroke="#111" stroke-width="0.9" stroke-linejoin="round"/><polygon points="1646.4,574.5 1660.7,581.8 1699.0,554.9" fill="#9d9d9d" stroke="#111" stroke-width="0.9" stroke-linejoin="round" /><polygon points="1646.4,642.4 1699.0,622.8 1699.0,690.6 1646.4,710.3" fill="#606060" stroke="none" stroke-width="0" stroke-linejoin="round" /><polygon points="1646.4,710.3 1699.0,690.6 1699.0,684.6 1646.4,705.3" fill="#868686" stroke="none" stroke-width="0" stroke-linejoin="round" /><polygon points="1682.0,634.8 1699.0,628.2 1699.0,642.8 1686.0,637.8" fill="#959595" stroke="none" stroke-width="0" stroke-linejoin="round" /><polygon points="1655.7,650.4 1663.1,647.9 1663.1,689.9 1655.7,692.4" fill="#8c8c8c" stroke="#111" stroke-width="0.8" stroke-linejoin="round" /><path d="M1646.4 642.4L1646.4 710.3" stroke="#111" stroke-width="1.1"/><path d="M1646.4 710.3L1699.0 690.6" stroke="#111" stroke-width="0.9"/><path d="M1646.4 642.4L1660.7 649.7Q1652.7 677.7 1647.4 710.3Z" fill="#3a3a3a" stroke="#111" stroke-width="0.9" stroke-linejoin="round"/><polygon points="1646.4,642.4 1660.7,649.7 1699.0,622.8" fill="#9d9d9d" stroke="#111" stroke-width="0.9" stroke-linejoin="round" /><polygon points="1646.4,710.3 1699.0,690.6 1699.0,758.5 1646.4,778.2" fill="#606060" stroke="none" stroke-width="0" stroke-linejoin="round" /><polygon points="1646.4,778.2 1699.0,758.5 1699.0,752.5 1646.4,773.2" fill="#868686" stroke="none" stroke-width="0" stroke-linejoin="round" /><polygon points="1682.0,702.6 1699.0,696.1 1699.0,710.6 1686.0,705.6" fill="#959595" stroke="none" stroke-width="0" stroke-linejoin="round" /><polygon points="1655.7,718.3 1663.1,715.8 1663.1,757.8 1655.7,760.3" fill="#8c8c8c" stroke="#111" stroke-width="0.8" stroke-linejoin="round" /><path d="M1646.4 710.3L1646.4 778.2" stroke="#111" stroke-width="1.1"/><path d="M1646.4 778.2L1699.0 758.5" stroke="#111" stroke-width="0.9"/><path d="M1646.4 710.3L1660.7 717.6Q1652.7 745.6 1647.4 778.2Z" fill="#3a3a3a" stroke="#111" stroke-width="0.9" stroke-linejoin="round"/><polygon points="1646.4,710.3 1660.7,717.6 1699.0,690.6" fill="#9d9d9d" stroke="#111" stroke-width="0.9" stroke-linejoin="round" /><polygon points="1646.4,778.2 1699.0,758.6 1699.0,826.5 1646.4,846.1" fill="#606060" stroke="none" stroke-width="0" stroke-linejoin="round" /><polygon points="1646.4,846.1 1699.0,826.5 1699.0,820.5 1646.4,841.1" fill="#868686" stroke="none" stroke-width="0" stroke-linejoin="round" /><polygon points="1682.0,770.6 1699.0,764.1 1699.0,778.6 1686.0,773.6" fill="#959595" stroke="none" stroke-width="0" stroke-linejoin="round" /><polygon points="1655.7,786.2 1663.1,783.7 1663.1,825.7 1655.7,828.2" fill="#8c8c8c" stroke="#111" stroke-width="0.8" stroke-linejoin="round" /><path d="M1646.4 778.2L1646.4 846.1" stroke="#111" stroke-width="1.1"/><path d="M1646.4 846.1L1699.0 826.5" stroke="#111" stroke-width="0.9"/><path d="M1646.4 778.2L1660.7 785.5Q1652.7 813.5 1647.4 846.1Z" fill="#3a3a3a" stroke="#111" stroke-width="0.9" stroke-linejoin="round"/><polygon points="1646.4,778.2 1660.7,785.5 1699.0,758.6" fill="#9d9d9d" stroke="#111" stroke-width="0.9" stroke-linejoin="round" /><polygon points="1646.4,846.1 1699.0,826.5 1699.0,894.4 1646.4,914.0" fill="#606060" stroke="none" stroke-width="0" stroke-linejoin="round" /><polygon points="1646.4,914.0 1699.0,894.4 1699.0,888.4 1646.4,909.0" fill="#868686" stroke="none" stroke-width="0" stroke-linejoin="round" /><polygon points="1682.0,838.5 1699.0,832.0 1699.0,846.5 1686.0,841.5" fill="#959595" stroke="none" stroke-width="0" stroke-linejoin="round" /><polygon points="1655.7,854.1 1663.1,851.6 1663.1,893.6 1655.7,896.1" fill="#8c8c8c" stroke="#111" stroke-width="0.8" stroke-linejoin="round" /><path d="M1646.4 846.1L1646.4 914.0" stroke="#111" stroke-width="1.1"/><path d="M1646.4 914.0L1699.0 894.4" stroke="#111" stroke-width="0.9"/><path d="M1646.4 846.1L1660.7 853.4Q1652.7 881.4 1647.4 914.0Z" fill="#3a3a3a" stroke="#111" stroke-width="0.9" stroke-linejoin="round"/><polygon points="1646.4,846.1 1660.7,853.4 1699.0,826.5" fill="#9d9d9d" stroke="#111" stroke-width="0.9" stroke-linejoin="round" /><polygon points="1646.4,914.0 1699.0,894.4 1699.0,962.2 1646.4,981.9" fill="#a9abaf" stroke="none" stroke-width="0" stroke-linejoin="round" /><polygon points="1655.7,922.0 1663.1,919.5 1663.1,967.5 1655.7,970.0" fill="#8c8c8c" stroke="#111" stroke-width="0.8" stroke-linejoin="round" /><path d="M1646.4 914.0L1646.4 981.9" stroke="#111" stroke-width="1.1"/><path d="M1646.4 981.9L1699.0 962.2" stroke="#111" stroke-width="0.9"/><path d="M1646.4 914.0L1660.7 921.3Q1652.7 949.3 1647.4 981.9Z" fill="#3a3a3a" stroke="#111" stroke-width="0.9" stroke-linejoin="round"/><polygon points="1646.4,914.0 1660.7,921.3 1699.0,894.4" fill="#9d9d9d" stroke="#111" stroke-width="0.9" stroke-linejoin="round" /><polygon points="1699.0,419.0 1751.5,399.4 1751.5,467.3 1699.0,486.9" fill="#8f8f8f" stroke="none" stroke-width="0" stroke-linejoin="round" /><polygon points="1699.0,486.9 1751.5,467.3 1751.5,460.8 1721.2,452.3 1701.0,479.0" fill="#6e6e6e" stroke="none" stroke-width="0" stroke-linejoin="round" /><polygon points="1705.5,431.0 1712.9,433.0 1712.9,468.0 1705.5,465.0" fill="#585858" stroke="#111" stroke-width="0.8" stroke-linejoin="round" /><polygon points="1712.9,423.0 1720.2,420.5 1720.2,465.5 1712.9,468.0" fill="#8c8c8c" stroke="#111" stroke-width="0.8" stroke-linejoin="round" /><path d="M1699.0 419.0L1699.0 486.9" stroke="#111" stroke-width="1.1"/><path d="M1699.0 486.9L1751.5 467.3" stroke="#111" stroke-width="0.9"/><path d="M1699.0 419.0L1713.2 426.3Q1705.2 454.3 1700.0 486.9Z" fill="#3a3a3a" stroke="#111" stroke-width="0.9" stroke-linejoin="round"/><polygon points="1699.0,419.0 1713.2,426.3 1751.5,399.4" fill="#9d9d9d" stroke="#111" stroke-width="0.9" stroke-linejoin="round" /><polygon points="1699.0,486.9 1751.5,467.3 1751.5,535.2 1699.0,554.8" fill="#8f8f8f" stroke="none" stroke-width="0" stroke-linejoin="round" /><polygon points="1699.0,554.8 1751.5,535.2 1751.5,528.7 1721.2,520.2 1701.0,546.9" fill="#6e6e6e" stroke="none" stroke-width="0" stroke-linejoin="round" /><polygon points="1705.5,498.9 1712.9,500.9 1712.9,535.9 1705.5,532.9" fill="#585858" stroke="#111" stroke-width="0.8" stroke-linejoin="round" /><polygon points="1712.9,490.9 1720.2,488.4 1720.2,533.4 1712.9,535.9" fill="#8c8c8c" stroke="#111" stroke-width="0.8" stroke-linejoin="round" /><path d="M1699.0 486.9L1699.0 554.8" stroke="#111" stroke-width="1.1"/><path d="M1699.0 554.8L1751.5 535.2" stroke="#111" stroke-width="0.9"/><path d="M1699.0 486.9L1713.2 494.2Q1705.2 522.2 1700.0 554.8Z" fill="#3a3a3a" stroke="#111" stroke-width="0.9" stroke-linejoin="round"/><polygon points="1699.0,486.9 1713.2,494.2 1751.5,467.3" fill="#9d9d9d" stroke="#111" stroke-width="0.9" stroke-linejoin="round" /><polygon points="1699.0,554.8 1751.5,535.2 1751.5,603.1 1699.0,622.7" fill="#8f8f8f" stroke="none" stroke-width="0" stroke-linejoin="round" /><polygon points="1699.0,622.7 1751.5,603.1 1751.5,596.6 1721.2,588.1 1701.0,614.8" fill="#6e6e6e" stroke="none" stroke-width="0" stroke-linejoin="round" /><polygon points="1705.5,566.8 1712.9,568.8 1712.9,603.8 1705.5,600.8" fill="#585858" stroke="#111" stroke-width="0.8" stroke-linejoin="round" /><polygon points="1712.9,558.8 1720.2,556.3 1720.2,601.3 1712.9,603.8" fill="#8c8c8c" stroke="#111" stroke-width="0.8" stroke-linejoin="round" /><path d="M1699.0 554.8L1699.0 622.7" stroke="#111" stroke-width="1.1"/><path d="M1699.0 622.7L1751.5 603.1" stroke="#111" stroke-width="0.9"/><path d="M1699.0 554.8L1713.2 562.1Q1705.2 590.1 1700.0 622.7Z" fill="#3a3a3a" stroke="#111" stroke-width="0.9" stroke-linejoin="round"/><polygon points="1699.0,554.8 1713.2,562.1 1751.5,535.2" fill="#9d9d9d" stroke="#111" stroke-width="0.9" stroke-linejoin="round" /><polygon points="1699.0,622.8 1751.5,603.1 1751.5,671.0 1699.0,690.6" fill="#8f8f8f" stroke="none" stroke-width="0" stroke-linejoin="round" /><polygon points="1699.0,690.6 1751.5,671.0 1751.5,664.5 1721.2,656.0 1701.0,682.8" fill="#6e6e6e" stroke="none" stroke-width="0" stroke-linejoin="round" /><polygon points="1705.5,634.8 1712.9,636.8 1712.9,671.8 1705.5,668.8" fill="#585858" stroke="#111" stroke-width="0.8" stroke-linejoin="round" /><polygon points="1712.9,626.8 1720.2,624.2 1720.2,669.2 1712.9,671.8" fill="#8c8c8c" stroke="#111" stroke-width="0.8" stroke-linejoin="round" /><path d="M1699.0 622.8L1699.0 690.6" stroke="#111" stroke-width="1.1"/><path d="M1699.0 690.6L1751.5 671.0" stroke="#111" stroke-width="0.9"/><path d="M1699.0 622.8L1713.2 630.0Q1705.2 658.0 1700.0 690.6Z" fill="#3a3a3a" stroke="#111" stroke-width="0.9" stroke-linejoin="round"/><polygon points="1699.0,622.8 1713.2,630.0 1751.5,603.1" fill="#9d9d9d" stroke="#111" stroke-width="0.9" stroke-linejoin="round" /><polygon points="1699.0,690.6 1751.5,671.0 1751.5,738.9 1699.0,758.5" fill="#8f8f8f" stroke="none" stroke-width="0" stroke-linejoin="round" /><polygon points="1699.0,758.5 1751.5,738.9 1751.5,732.4 1721.2,723.9 1701.0,750.6" fill="#6e6e6e" stroke="none" stroke-width="0" stroke-linejoin="round" /><polygon points="1705.5,702.6 1712.9,704.6 1712.9,739.6 1705.5,736.6" fill="#585858" stroke="#111" stroke-width="0.8" stroke-linejoin="round" /><polygon points="1712.9,694.6 1720.2,692.1 1720.2,737.1 1712.9,739.6" fill="#8c8c8c" stroke="#111" stroke-width="0.8" stroke-linejoin="round" /><path d="M1699.0 690.6L1699.0 758.5" stroke="#111" stroke-width="1.1"/><path d="M1699.0 758.5L1751.5 738.9" stroke="#111" stroke-width="0.9"/><path d="M1699.0 690.6L1713.2 697.9Q1705.2 725.9 1700.0 758.5Z" fill="#3a3a3a" stroke="#111" stroke-width="0.9" stroke-linejoin="round"/><polygon points="1699.0,690.6 1713.2,697.9 1751.5,671.0" fill="#9d9d9d" stroke="#111" stroke-width="0.9" stroke-linejoin="round" /><polygon points="1699.0,758.5 1751.5,738.9 1751.5,806.8 1699.0,826.4" fill="#8f8f8f" stroke="none" stroke-width="0" stroke-linejoin="round" /><polygon points="1699.0,826.4 1751.5,806.8 1751.5,800.3 1721.2,791.8 1701.0,818.5" fill="#6e6e6e" stroke="none" stroke-width="0" stroke-linejoin="round" /><polygon points="1705.5,770.5 1712.9,772.5 1712.9,807.5 1705.5,804.5" fill="#585858" stroke="#111" stroke-width="0.8" stroke-linejoin="round" /><polygon points="1712.9,762.5 1720.2,760.0 1720.2,805.0 1712.9,807.5" fill="#8c8c8c" stroke="#111" stroke-width="0.8" stroke-linejoin="round" /><path d="M1699.0 758.5L1699.0 826.4" stroke="#111" stroke-width="1.1"/><path d="M1699.0 826.4L1751.5 806.8" stroke="#111" stroke-width="0.9"/><path d="M1699.0 758.5L1713.2 765.8Q1705.2 793.8 1700.0 826.4Z" fill="#3a3a3a" stroke="#111" stroke-width="0.9" stroke-linejoin="round"/><polygon points="1699.0,758.5 1713.2,765.8 1751.5,738.9" fill="#9d9d9d" stroke="#111" stroke-width="0.9" stroke-linejoin="round" /><polygon points="1699.0,826.5 1751.5,806.8 1751.5,874.7 1699.0,894.4" fill="#8f8f8f" stroke="none" stroke-width="0" stroke-linejoin="round" /><polygon points="1699.0,894.4 1751.5,874.7 1751.5,868.2 1721.2,859.8 1701.0,886.5" fill="#6e6e6e" stroke="none" stroke-width="0" stroke-linejoin="round" /><polygon points="1705.5,838.5 1712.9,840.5 1712.9,875.5 1705.5,872.5" fill="#585858" stroke="#111" stroke-width="0.8" stroke-linejoin="round" /><polygon points="1712.9,830.5 1720.2,828.0 1720.2,873.0 1712.9,875.5" fill="#8c8c8c" stroke="#111" stroke-width="0.8" stroke-linejoin="round" /><path d="M1699.0 826.5L1699.0 894.4" stroke="#111" stroke-width="1.1"/><path d="M1699.0 894.4L1751.5 874.7" stroke="#111" stroke-width="0.9"/><path d="M1699.0 826.5L1713.2 833.8Q1705.2 861.8 1700.0 894.4Z" fill="#3a3a3a" stroke="#111" stroke-width="0.9" stroke-linejoin="round"/><polygon points="1699.0,826.5 1713.2,833.8 1751.5,806.8" fill="#9d9d9d" stroke="#111" stroke-width="0.9" stroke-linejoin="round" /><polygon points="1699.0,894.4 1751.5,874.7 1751.5,942.6 1699.0,962.2" fill="#adafb3" stroke="none" stroke-width="0" stroke-linejoin="round" /><polygon points="1699.0,962.2 1751.5,942.6 1751.5,936.1 1721.2,927.6 1701.0,954.4" fill="#a2a4a8" stroke="none" stroke-width="0" stroke-linejoin="round" /><polygon points="1705.5,906.4 1712.9,908.4 1712.9,949.4 1705.5,946.4" fill="#585858" stroke="#111" stroke-width="0.8" stroke-linejoin="round" /><polygon points="1712.9,898.4 1720.2,895.9 1720.2,946.9 1712.9,949.4" fill="#8c8c8c" stroke="#111" stroke-width="0.8" stroke-linejoin="round" /><path d="M1699.0 894.4L1699.0 962.2" stroke="#111" stroke-width="1.1"/><path d="M1699.0 962.2L1751.5 942.6" stroke="#111" stroke-width="0.9"/><path d="M1699.0 894.4L1713.2 901.6Q1705.2 929.6 1700.0 962.2Z" fill="#3a3a3a" stroke="#111" stroke-width="0.9" stroke-linejoin="round"/><polygon points="1699.0,894.4 1713.2,901.6 1751.5,874.7" fill="#9d9d9d" stroke="#111" stroke-width="0.9" stroke-linejoin="round" /><path d="M1541.3 478.0V1021.2" stroke="#111" stroke-width="1.2"/><path d="M1751.5 399.4V942.6" stroke="#111" stroke-width="1"/><polygon points="1305.8,366.6 1514.5,286.0 1751.5,399.4 1541.3,478.0" fill="#a4a6a9" stroke="#333" stroke-width="0.6" stroke-linejoin="round" /><path d="M1305.8,366.6L1541.3,478.0L1751.5,399.4" stroke="#111" stroke-width="0.8" fill="none" stroke-dasharray="2 1.5"/><path d="M1305.8 910.8L1541.3 1022.2L1751.5 943.6" stroke="#161616" stroke-width="3" fill="none" stroke-linejoin="miter"/><ellipse cx="1812" cy="312" rx="34" ry="11" fill="#c8c8c8" opacity="0.45" filter="url(#bl)"/><polygon points="1813.8,251.3 1847.5,263.8 1810,276.3 1778.3,262" fill="#f1f1f1" stroke="#a9a9a9" stroke-width="0.8"/><polygon points="1778.3,262 1810,276.3 1810.5,322.5 1780.8,305" fill="#eaeaea" stroke="#a9a9a9" stroke-width="0.8"/><polygon points="1810,276.3 1847.5,263.8 1845.5,306.3 1810.5,322.5" fill="#e5e5e5" stroke="#a9a9a9" stroke-width="0.8"/><text style="font-family:'Liberation Sans',sans-serif;font-size:10.5px;font-weight:bold;fill:#9c9c9c;letter-spacing:0.1px" transform="matrix(0.64,0.3,-0.02,1,1783,286)">FRONT</text><text style="font-family:'Liberation Sans',sans-serif;font-size:10.5px;font-weight:bold;fill:#9c9c9c;letter-spacing:0.1px" transform="matrix(0.64,-0.25,0.02,1,1816.5,301)">RIGHT</text><text style="font-family:'Liberation Sans',sans-serif;font-size:10.5px;font-weight:bold;fill:#9c9c9c;letter-spacing:0.1px;font-size:7px;fill:#b5b5b5" transform="matrix(-0.7,-0.2,0.7,-0.3,1820,261)">TOP</text><g opacity="1"><rect x="1869" y="367.5" width="33.5" height="116" rx="4" fill="#f3f3f3" stroke="#c6c6c6" stroke-width="1.6"/><circle cx="1895" cy="374.5" r="3.6" fill="#e8e8e8" stroke="#666" stroke-width="0.8"/><path d="M1893.5 373l3 3m0-3l-3 3" stroke="#666" stroke-width="0.9" fill="none"/><path d="M1883 392.5 a9 9 0 1 0 9 9 v-9z" fill="#e6e6e6" stroke="#777" stroke-width="1"/><circle cx="1883" cy="401.5" r="4.2" fill="#c9c9c9" stroke="#777" stroke-width="1"/><rect x="1887.5" y="405" width="9" height="9" rx="1.5" fill="#8db9e6" stroke="#5a8cc4" stroke-width="1"/><path d="M1882 420.5h6l-3 3.2z" fill="#666"/><path d="M1872.5 426h27" stroke="#8a8a8a" stroke-width="1"/><circle cx="1888" cy="443.5" r="2.8" fill="#ddd" stroke="#666" stroke-width="1"/><path d="M1890 445.5l3 3" stroke="#666" stroke-width="1.4"/><path d="M1878 433.5l5 5M1888 433.5l-5 5M1881 441.5l-3-3M1885 435.5l3-3" stroke="#777" stroke-width="0.9" stroke-dasharray="1.5 1.2" fill="none"/><path d="M1882 460.5h6l-3 3.2z" fill="#666"/><circle cx="1895" cy="476" r="3.6" fill="#e8e8e8" stroke="#666" stroke-width="0.8"/><path d="M1893.2 475.1h3.6M1893.2 476.9h3.6" stroke="#666" stroke-width="0.8"/></g></g></svg>
<svg width="1920" height="1080" viewBox="0 0 1920 1080"><defs><linearGradient id="rg" x1="0" y1="0" x2="1" y2="1"><stop offset="0" stop-color="#4a8fd8"/><stop offset="1" stop-color="#164a86"/></linearGradient></defs><path d="M6 3.5h7.2c3.2 0 5 1.7 5 4.3c0 2.2-1.3 3.6-3.3 4.1l4.6 7.6h-3.9l-4-7h-2.2v7H6zM9.4 6.2v4h3.2c1.5 0 2.3-0.8 2.3-2s-0.8-2-2.3-2z" fill="url(#rg)"/><g transform="translate(33,5)" ><path d="M0.7 11.5V1.2h4.6l1.6 1.8h6v2.2" fill="#f2f2f2" stroke="#2a2a2a" stroke-width="1.2" stroke-linejoin="round"/><path d="M0.7 11.5l3-6.3h12l-3.2 6.3z" fill="#e8e8e8" stroke="#2a2a2a" stroke-width="1.2" stroke-linejoin="round"/></g><g transform="translate(58,4.5)" ><path d="M0.6 0.6h12.8v12.3h-12.8z" fill="#4a4f5e" stroke="#23262e" stroke-width="1.1" stroke-linejoin="round"/><rect x="2.6" y="0.8" width="8.8" height="5.2" fill="#e9e9ee"/><rect x="3.6" y="8" width="6.8" height="4.6" fill="#d9d9e0"/><rect x="4.6" y="9" width="1.6" height="2.8" fill="#333"/></g><g transform="translate(81,4)" ><path d="M3.5 3.5l4-2.3l4 2.3v4.6l-4 2.3l-4-2.3z" fill="#dedede" stroke="#a9a9a9" stroke-width="0.9"/><path d="M0.5 6.5l3.5-2l3.5 2v4l-3.5 2l-3.5-2z" fill="#e6e6e6" stroke="#a9a9a9" stroke-width="0.9"/><path d="M7.5 6.5l3.5-2l3.5 2v4l-3.5 2l-3.5-2z" fill="#e0e0e0" stroke="#a9a9a9" stroke-width="0.9"/><circle cx="12" cy="11" r="3.4" fill="#c2c2c2" stroke="#9a9a9a" stroke-width="0.8"/><path d="M9 11h6M12 8v6" stroke="#9a9a9a" stroke-width="0.6"/></g><path d="M104 10.7h5l-2.5 2.8z" fill="#333"/><g transform="translate(117,5)" ><path d="M0.8 5.6l6-5v3h3.2c3 0 4.6 2 4.6 4.4v3.6h-2.8v-3.2c0-1.4-0.8-2-2.2-2h-2.8v3.6z" fill="#f4f4f4" stroke="#222" stroke-width="1.2" stroke-linejoin="round"/></g><path d="M140.1 10.2h5l-2.5 2.8z" fill="#333"/><g transform="translate(153,5)" ><path d="M14 5.6l-6-5v3h-3.2c-3 0-4.6 2-4.6 4.4v3.6h2.8v-3.2c0-1.4 0.8-2 2.2-2h2.8v3.6z" fill="#dcdcdc" stroke="#aaa" stroke-width="1" stroke-linejoin="round"/></g><path d="M175.9 10.2h5l-2.5 2.8z" fill="#8a8a8a"/><g transform="translate(189.5,5)" ><rect x="3.5" y="0.6" width="9" height="4.5" fill="#f6f6f6" stroke="#222" stroke-width="1.1"/><path d="M0.7 4.8h14.6v7h-14.6z" fill="#f0f0f0" stroke="#222" stroke-width="1.3" stroke-linejoin="round"/><rect x="3.5" y="9" width="9" height="5.2" fill="#fafafa" stroke="#222" stroke-width="1.1"/><path d="M5.2 11.2h5.6" stroke="#999" stroke-width="0.8"/></g><rect x="212" y="2" width="1" height="21" fill="#bdbdbd"/><g transform="translate(220,6)" ><path d="M1 3.2h13M1 3.2l2.5-2.2M1 3.2l2.5 2.2M14 3.2l-2.5-2.2M14 3.2l-2.5 2.2" stroke="#a5a5a5" stroke-width="1" fill="none"/><rect x="0.5" y="7.5" width="14" height="3" fill="#bdbdbd" stroke="#a5a5a5" stroke-width="0.8"/></g><path d="M242.9 11.2h5l-2.5 2.8z" fill="#333"/><g transform="translate(256,4)" ><path d="M2.5 12l10.5-8.5" stroke="#222" stroke-width="1.4"/><path d="M2.5 12l1-4l3 3.6zM13 3.5l-1 4l-3-3.6z" fill="#222"/><path d="M0.5 10.5l4 4.5M11 0.5l4 4.5" stroke="#222" stroke-width="1"/></g><g transform="translate(281,5)" ><path d="M5 3.2l3-2.4h4l2.6 2.4v3.8l-2.6 2.4h-4l-3-2.4z" fill="#ededed" stroke="#999" stroke-width="0.9"/><text x="8.2" y="7.6" style="font:6.5px 'Liberation Sans';fill:#666">1</text><path d="M5 6.5h-3v4" stroke="#888" stroke-width="0.9" fill="none"/><rect x="0.8" y="10.5" width="2.6" height="2.6" fill="#eee" stroke="#888" stroke-width="0.8"/></g><text x="304.5" y="18.2" style="font:bold 19px 'Liberation Sans';fill:#9b9b9b">A</text><rect x="327.5" y="2" width="1" height="21" fill="#bdbdbd"/><g transform="translate(335.3,4.3) scale(1.03)"><path d="M5.7 0.4L12.75 2L14.4 5.8L7.3 7.4Z" fill="#eef1f7" stroke="#222" stroke-width="1.1" stroke-linejoin="round"/><path d="M7.300 7.400L12.750 6.200L12.750 10.400L6.500 13.750Z" fill="#c9cdd8" stroke="#222" stroke-width="1.100" stroke-linejoin="round"/><path d="M0.250 5.800L5.700 0.400L7.300 7.400L6.500 13.750L1.500 11.250L1.500 6.600Z" fill="#f4f4f4" stroke="#222" stroke-width="1.100" stroke-linejoin="round"/><path d="M2.300 8L4.200 8.800L4.200 12.400L2.300 11.500Z" fill="#2a3350"/></g><path d="M358.2 10.7h5l-2.5 2.8z" fill="#333"/><g transform="translate(371.5,4)" ><circle cx="5" cy="7" r="4.3" fill="#e4e4e4" stroke="#8a8a8a" stroke-width="1"/><path d="M8 3.2l4.6 3.8l-4.6 3.8z" fill="#9a9a9a"/><path d="M5 11.3v3.5" stroke="#8a8a8a" stroke-width="1"/></g><g transform="translate(395,5)" ><path d="M0 1.5h8M0 7.5h7M0 13h5" stroke="#222" stroke-width="2.4"/><path d="M9 1.5h7.5M8 7.5h8.5M6.5 13h10" stroke="#222" stroke-width="0.8"/><path d="M12 -1.5l-6.5 17" stroke="#4a90e2" stroke-width="1.3"/></g><rect x="418.5" y="2" width="1" height="21" fill="#bdbdbd"/><g transform="translate(427,4.5)" ><rect x="0.5" y="0.5" width="5" height="6" fill="#dadada" stroke="#b0b0b0" stroke-width="0.8"/><rect x="8" y="0.5" width="5" height="9" fill="#dadada" stroke="#b0b0b0" stroke-width="0.8"/><rect x="0.5" y="8.5" width="5" height="5" fill="#dadada" stroke="#b0b0b0" stroke-width="0.8"/><path d="M8.5 10l5 5M13.5 10l-5 5" stroke="#a5a5a5" stroke-width="1.8"/></g><g transform="translate(450,4.5)" ><rect x="0.7" y="0.7" width="9.6" height="7" fill="#f4f4f4" stroke="#222" stroke-width="1.3"/><rect x="5.5" y="7" width="10" height="7.5" fill="#f4f4f4" stroke="#222" stroke-width="1.3"/><rect x="6.2" y="7.7" width="8.6" height="1.6" fill="#222"/><path d="M14 0.5v5M12.3 2l1.7-1.7l1.7 1.7M2 9.5v5M0.3 13l1.7 1.7l1.7-1.7" stroke="#222" stroke-width="1" fill="none"/></g><path d="M471.2 10.7h5l-2.5 2.8z" fill="#333"/><path d="M484.5 8.5h9" stroke="#333" stroke-width="1.3"/><path d="M485 11.5h8l-4 4.3z" fill="#333"/><defs><linearGradient id="gw" x1="0" y1="0" x2="0" y2="1"><stop offset="0" stop-color="#c9ccd4"/><stop offset="1" stop-color="#ffffff"/></linearGradient><linearGradient id="gl" x1="0" y1="0" x2="0" y2="1"><stop offset="0" stop-color="#e4e4e4"/><stop offset="1" stop-color="#fafafa"/></linearGradient></defs><path d="M23.6 60.8v15.2l3.4-3.2l2.4 5.8l2.6-1.1l-2.4-5.6h4.8z" fill="#ffffff" stroke="#1a1a1a" stroke-width="1.2" stroke-linejoin="round"/><path d="M43.25 132.7h6.5l-3.25 3.55z" fill="#333"/><g transform="translate(64,55)" ><path d="M1 3.5l5-2.5h5.5v9l-5 2.5h-5.5z" fill="#ececec" stroke="#c4c4c4" stroke-width="0.9"/><path d="M13 3.5l5-2.5h5v9l-4.5 2.5h-5.5z" fill="#ececec" stroke="#c4c4c4" stroke-width="0.9"/><path d="M1 16l5-2.5h5.5v10l-5 2.5h-5.5z" fill="#ececec" stroke="#c4c4c4" stroke-width="0.9"/><rect x="16.5" y="11.5" width="11.5" height="16" fill="#f4f4f4" stroke="#bdbdbd" stroke-width="0.9"/><rect x="18.5" y="13.5" width="5" height="5" fill="#c9c9c9"/><rect x="24.3" y="13.5" width="1.8" height="5" fill="#d4d4d4"/><path d="M18.5 21h8M18.5 24.5h8" stroke="#bdbdbd" stroke-width="0.9"/></g><g transform="translate(103,54)" ><rect x="0.7" y="0.7" width="14.5" height="15" fill="url(#gw)" stroke="#2b2b2b" stroke-width="1.3"/><rect x="17" y="0.7" width="7.5" height="23" fill="url(#gw)" stroke="#2b2b2b" stroke-width="1.3"/><rect x="0.7" y="17.5" width="14.5" height="6.3" fill="#fff" stroke="#2b2b2b" stroke-width="1.3"/></g><g transform="translate(119,73.5)" ><path d="M0.6 2.2h4.6l1.2 1.6h6.6v6.6h-12.4z" fill="#f5c542" stroke="#c99a14" stroke-width="1"/><path d="M0.6 4.6h12.4" stroke="#c99a14" stroke-width="0.8"/></g><g transform="translate(103,91)" ><rect x="0.7" y="0.7" width="14.5" height="15" fill="url(#gw)" stroke="#2b2b2b" stroke-width="1.3"/><rect x="17" y="0.7" width="7.5" height="23" fill="url(#gw)" stroke="#2b2b2b" stroke-width="1.3"/><rect x="0.7" y="17.5" width="14.5" height="6.3" fill="#fff" stroke="#2b2b2b" stroke-width="1.3"/></g><g transform="translate(118.5,105.5)" ><rect x="0.6" y="0.6" width="5.6" height="5.6" rx="1" fill="#a9d2f3" stroke="#2f7fd0" stroke-width="1.1"/><rect x="0.6" y="7.4" width="5.6" height="5.6" rx="1" fill="#a9d2f3" stroke="#2f7fd0" stroke-width="1.1"/><rect x="7.4" y="0.6" width="5.6" height="5.6" rx="1" fill="#a9d2f3" stroke="#2f7fd0" stroke-width="1.1"/><rect x="7.4" y="7.4" width="5.6" height="5.6" rx="1" fill="#a9d2f3" stroke="#2f7fd0" stroke-width="1.1"/></g><g transform="translate(67.7,90.3)" ><rect x="0.7" y="0.7" width="18.6" height="28.2" fill="#fafafa" stroke="#2b2b2b" stroke-width="1.3"/><rect x="3" y="3.3" width="10.2" height="9.6" fill="#3b64a8"/><rect x="14.3" y="2.8" width="3.3" height="10.6" fill="#a9adb8"/><path d="M3.5 17.6h13M3.5 23.4h13" stroke="#2b2b2b" stroke-width="1.1"/><path d="M6.2 15.6v4M14 21.4v4" stroke="#2b2b2b" stroke-width="1.8"/></g><g transform="translate(146.5,55.5)" ><path d="M1.8 1.8v12.4" stroke="#222" stroke-width="1.3"/><path d="M6.8 1.8c0 7 2.5 12 8 12.4" stroke="#222" stroke-width="1.2" fill="none"/><rect x="0.5" y="0.5" width="2.6" height="2.6" fill="#f4f4f4" stroke="#222" stroke-width="0.9"/><rect x="0.5" y="12.9" width="2.6" height="2.6" fill="#f4f4f4" stroke="#222" stroke-width="0.9"/><rect x="5.5" y="0.5" width="2.6" height="2.6" fill="#f4f4f4" stroke="#222" stroke-width="0.9"/><rect x="13.5" y="12.9" width="2.6" height="2.6" fill="#f4f4f4" stroke="#222" stroke-width="0.9"/></g><g transform="translate(146.5,79.5)" ><path d="M1.8 1.8v12.4" stroke="#222" stroke-width="1.3" stroke-dasharray="2 1.6"/><path d="M6.8 1.8c0 7 2.5 12 8 12.4" stroke="#222" stroke-width="1.2" fill="none" stroke-dasharray="2.4 1.6"/><rect x="0.5" y="0.5" width="2.6" height="2.6" fill="#f4f4f4" stroke="#222" stroke-width="0.9"/><rect x="0.5" y="12.9" width="2.6" height="2.6" fill="#f4f4f4" stroke="#222" stroke-width="0.9"/><rect x="5.5" y="0.5" width="2.6" height="2.6" fill="#f4f4f4" stroke="#222" stroke-width="0.9"/><rect x="13.5" y="12.9" width="2.6" height="2.6" fill="#f4f4f4" stroke="#222" stroke-width="0.9"/></g><g transform="translate(147,105)" ><path d="M4 1.5h11l-3.5 10h-11z" fill="#e9e9e9" stroke="#c0c0c0" stroke-width="1" stroke-dasharray="2 1.4"/><path d="M6 12.5l7.5-8l2 1.8l-7.5 8l-2.8 0.8z" fill="#e2e2e2" stroke="#b5b5b5" stroke-width="1"/></g><g transform="translate(236.8,66)" ><path d="M-6.5 6.5L6.5 -6.5" stroke="#222" stroke-width="1.1"/><rect x="-7.8" y="5.2" width="2.6" height="2.6" fill="#f4f4f4" stroke="#222" stroke-width="0.9"/><rect x="5.2" y="-7.8" width="2.6" height="2.6" fill="#f4f4f4" stroke="#222" stroke-width="0.9"/></g><g transform="translate(258.9,66)" ><rect x="-6.5" y="-4.2" width="13" height="8.4" fill="url(#gl)" stroke="#222" stroke-width="1.1"/><rect x="-7.8" y="2.9" width="2.6" height="2.6" fill="#f4f4f4" stroke="#222" stroke-width="0.9"/><rect x="5.2" y="-5.5" width="2.6" height="2.6" fill="#f4f4f4" stroke="#222" stroke-width="0.9"/></g><g transform="translate(281.1,66)" ><path d="M0 -7l7.4 5.2l-2.8 8.6h-9.2l-2.8-8.6z" fill="url(#gl)" stroke="#222" stroke-width="1.1"/><path d="M0 -7v7" stroke="#222" stroke-width="1"/><rect x="-1.3" y="-8.3" width="2.6" height="2.6" fill="#f4f4f4" stroke="#222" stroke-width="0.9"/><rect x="-1.3" y="-1.3" width="2.6" height="2.6" fill="#f4f4f4" stroke="#222" stroke-width="0.9"/></g><g transform="translate(302.6,66)" ><path d="M0 -7l7.4 5.2l-2.8 8.6h-9.2l-2.8-8.6z" fill="url(#gl)" stroke="#222" stroke-width="1.1"/><path d="M0.5 -0.5l5 4.5" stroke="#222" stroke-width="1"/><path d="M6.8 -0.5l-2.2 7" stroke="#e0283c" stroke-width="1.2"/><rect x="-0.8" y="-1.8" width="2.6" height="2.6" fill="#f4f4f4" stroke="#222" stroke-width="0.9"/><rect x="4.2" y="2.7" width="2.6" height="2.6" fill="#f4f4f4" stroke="#222" stroke-width="0.9"/></g><g transform="translate(324.8,66)" ><circle r="7" fill="url(#gl)" stroke="#222" stroke-width="1.1"/><path d="M0 0l5-5" stroke="#222" stroke-width="1"/><rect x="-1.3" y="-1.3" width="2.6" height="2.6" fill="#f4f4f4" stroke="#222" stroke-width="0.9"/><rect x="3.7" y="-6.3" width="2.6" height="2.6" fill="#f4f4f4" stroke="#222" stroke-width="0.9"/></g><g transform="translate(236.8,88.1)" ><path d="M-6.5 6.5c0.5-7 5-12.5 13-13" stroke="#222" stroke-width="1.1" fill="none" stroke-dasharray="3 1.3"/><rect x="-7.8" y="5.2" width="2.6" height="2.6" fill="#f4f4f4" stroke="#222" stroke-width="0.9"/><rect x="-3.8" y="-3.6" width="2.6" height="2.6" fill="#f4f4f4" stroke="#222" stroke-width="0.9"/><rect x="5.2" y="-7.8" width="2.6" height="2.6" fill="#f4f4f4" stroke="#222" stroke-width="0.9"/></g><g transform="translate(258.9,88.1)" ><path d="M-6.5 6.5c0.5-7 5-12.5 13-13" stroke="#222" stroke-width="1.1" fill="none"/><path d="M4 5.5h3M5.5 4v3" stroke="#222" stroke-width="0.9"/><rect x="-7.8" y="5.2" width="2.6" height="2.6" fill="#f4f4f4" stroke="#222" stroke-width="0.9"/><rect x="5.2" y="-7.8" width="2.6" height="2.6" fill="#f4f4f4" stroke="#222" stroke-width="0.9"/></g><g transform="translate(281.1,88.1)" ><path d="M-7 2c0-6 2.5-9.5 7-9.5c3.6 0 5.8 1.4 6.5 3" stroke="#2c6fbe" stroke-width="1.3" fill="none"/><path d="M-7 5v3" stroke="#2c6fbe" stroke-width="1.2"/><rect x="-8.3" y="0.7" width="2.6" height="2.6" fill="#d8ebfb" stroke="#2c6fbe" stroke-width="0.9"/><rect x="5.2" y="-5.3" width="2.6" height="2.6" fill="#d8ebfb" stroke="#2c6fbe" stroke-width="0.9"/></g><g transform="translate(302.6,88.1)" ><path d="M-5.5 3c0-6 2-9 6.5-9.5" stroke="#2c6fbe" stroke-width="1.3" fill="none"/><path d="M-5.5 6v3M5 -6.5h3.5" stroke="#2c6fbe" stroke-width="1.2"/><rect x="-6.8" y="1.7" width="2.6" height="2.6" fill="#d8ebfb" stroke="#2c6fbe" stroke-width="0.9"/><rect x="1.2" y="-7.8" width="2.6" height="2.6" fill="#d8ebfb" stroke="#2c6fbe" stroke-width="0.9"/></g><g transform="translate(324.8,88.1)" ><path d="M-6.5 1.5l3.5-7.5l5.5 12.5l4.5-7.5" stroke="#222" stroke-width="0.9" fill="none"/><path d="M-6.5 1.5c2-6 4-6.5 5-4.5c1.5 3 2 7 4 8.5c1.5 1 3-2 4.500-5" stroke="#222" stroke-width="1.2" fill="none"/><rect x="-7.8" y="0.2" width="2.6" height="2.6" fill="#f4f4f4" stroke="#222" stroke-width="0.9"/><rect x="-4.3" y="-7.3" width="2.6" height="2.6" fill="#f4f4f4" stroke="#222" stroke-width="0.9"/><rect x="1.2" y="5.2" width="2.6" height="2.6" fill="#f4f4f4" stroke="#222" stroke-width="0.9"/><rect x="5.7" y="-2.3" width="2.6" height="2.6" fill="#f4f4f4" stroke="#222" stroke-width="0.9"/></g><g transform="translate(236.8,110.3)" ><path d="M-6.5 0.500c0.500-4.500 3.500-6.500 5.500-3.500c1.500 2.500 1.500 7.500 4 8c2 0 3.500-2 3.500-5" stroke="#222" stroke-width="1.2" fill="none"/><rect x="-7.8" y="-0.8" width="2.6" height="2.6" fill="#f4f4f4" stroke="#222" stroke-width="0.9"/><rect x="-3.8" y="-5.3" width="2.6" height="2.6" fill="#f4f4f4" stroke="#222" stroke-width="0.9"/><rect x="1.2" y="3.2" width="2.6" height="2.6" fill="#f4f4f4" stroke="#222" stroke-width="0.9"/><rect x="5.2" y="-1.3" width="2.6" height="2.6" fill="#f4f4f4" stroke="#222" stroke-width="0.9"/></g><g transform="translate(258.9,110.3)" ><ellipse rx="7" ry="4.2" fill="url(#gl)" stroke="#222" stroke-width="1.1"/><path d="M-1.500 0h3M0 -1.500v3" stroke="#222" stroke-width="0.9"/><rect x="-1.3" y="-5.5" width="2.6" height="2.6" fill="#f4f4f4" stroke="#222" stroke-width="0.9"/><rect x="5.7" y="-1.3" width="2.6" height="2.6" fill="#f4f4f4" stroke="#222" stroke-width="0.9"/></g><g transform="translate(281.1,110.3)" ><path d="M-1.500 -5.200c5 0 8 1.800 8 5.200s-3 5.200-8 5.200" stroke="#222" stroke-width="1.2" fill="none"/><rect x="-2.8" y="-6.5" width="2.6" height="2.6" fill="#f4f4f4" stroke="#222" stroke-width="0.9"/><rect x="-2.8" y="3.9" width="2.6" height="2.6" fill="#f4f4f4" stroke="#222" stroke-width="0.9"/></g><g transform="translate(302.6,110.3)" ><path d="M-6.500 6.500L6.500 -6.500" stroke="#4aa832" stroke-width="1.500"/><rect x="-7.8" y="5.2" width="2.6" height="2.6" fill="#e4f6dc" stroke="#4aa832" stroke-width="0.9"/><rect x="5.2" y="-7.8" width="2.6" height="2.6" fill="#e4f6dc" stroke="#4aa832" stroke-width="0.9"/><path d="M0.200 -3.500v9.500l2.100-1.900l1.500 3.500l1.600-0.700l-1.500-3.400h3z" fill="#fff" stroke="#222" stroke-width="0.900" stroke-linejoin="round"/></g><g transform="translate(324.8,110.3)" ><circle r="2.600" fill="#9a9a9a" stroke="#777" stroke-width="0.900"/><circle r="0.900" fill="#666"/></g><path d="M338.500 69h8l-4-3.800z" fill="#9a9a9a"/><path d="M338.500 91h8l-4 3.800z" fill="#9a9a9a"/><path d="M339 111.500h7" stroke="#555" stroke-width="1.200"/><path d="M338.500 114h8l-4 3.800z" fill="#555"/><g transform="translate(356,55)" ><path d="M1 9.500l12-8.500l16 6v10l-13 9.500l-15-7z" fill="#e9e9e9" stroke="#c6c6c6" stroke-width="1.100" stroke-linejoin="round"/><path d="M1 9.500l15 7l13-9.500M16 16.500v10" stroke="#c6c6c6" stroke-width="1.100" fill="none"/><path d="M9 8.500l5-4l4 1.500l-3 3l3 1.500l-3 3" stroke="#c6c6c6" stroke-width="1" fill="none"/><path d="M15 13l10.500-9.500l2.500 2l-10.500 9.500z" fill="#e0e0e0" stroke="#bdbdbd" stroke-width="1"/></g><g transform="translate(356,91.5)" ><path d="M1 13l13-12l15 8l-13 17.500z" fill="#ececec" stroke="#c6c6c6" stroke-width="1.100" stroke-linejoin="round"/><path d="M5 9.500l15 8M9.500 5.500l14 8M8 19l10-10" stroke="#d0d0d0" stroke-width="0.900"/><path d="M10 11l5-4l3 2l-3.500 3l3 2l-3 3" stroke="#c6c6c6" stroke-width="1" fill="none"/><path d="M15.500 17l11-9.500l2.500 2l-11 9.500z" fill="#e0e0e0" stroke="#bdbdbd" stroke-width="1"/></g><defs><linearGradient id="gb" x1="0" y1="0" x2="0" y2="1"><stop offset="0" stop-color="#8cc0ec"/><stop offset="0.5" stop-color="#b9dcf6"/><stop offset="1" stop-color="#6aa9e0"/></linearGradient><linearGradient id="gbl" x1="0" y1="0" x2="1" y2="1"><stop offset="0" stop-color="#7db4e6"/><stop offset="1" stop-color="#c4e0f7"/></linearGradient><linearGradient id="gar" x1="0" y1="0" x2="0" y2="1"><stop offset="0" stop-color="#1b7ae0"/><stop offset="1" stop-color="#4aa0f2"/></linearGradient></defs><g transform="translate(400,58)" ><path d="M5 4.500l21-4v18l-21 6z" fill="url(#gb)" stroke="#2f74c0" stroke-width="1.200" stroke-linejoin="round"/><path d="M12 3.200v19.300M19 1.800v18.700M5 11l21-4.800M5 17.500l21-5.500" stroke="#2f74c0" stroke-width="1"/><path d="M5 9l-4 2v13l4 0.500" fill="#f4f4f4" stroke="#222" stroke-width="1.200" stroke-linejoin="round"/><path d="M1 24l4 0.500l21-6" stroke="#222" stroke-width="1" fill="none"/></g><g transform="translate(438,69)" ><path d="M1 4.500l11-3.500v11l-11 3.500z" fill="#f4f4f4" stroke="#222" stroke-width="1.200" stroke-linejoin="round"/><path d="M4.700 3.300v11M8.300 2.200v11M1 8l11-3.500M1 11.700l11-3.500" stroke="#222" stroke-width="0.900"/><circle cx="13" cy="9" r="3.400" fill="#ffd23e" stroke="#d99a10" stroke-width="0.900"/><rect x="11.600" y="12" width="2.800" height="3" fill="#f6f6f6" stroke="#666" stroke-width="0.800"/></g><g transform="translate(438,93)" ><rect x="0.700" y="0.700" width="14" height="13.600" fill="#f4f4f4" stroke="#222" stroke-width="1.200"/><rect x="0.700" y="0.700" width="14" height="2.300" fill="#333"/><path d="M3 6.500l2-1.500h6v6.500l-2 1.500h-6z" fill="#5fae4e" stroke="#2d6e22" stroke-width="0.900"/><path d="M11 3v8.500l1.900-1.700l1.300 3l1.400-0.600l-1.300-3h2.600z" fill="#fff" stroke="#222" stroke-width="0.800" stroke-linejoin="round"/></g><g transform="translate(516.5,55)" ><rect x="0.700" y="3" width="20" height="21" rx="1.500" fill="#e4e4e4" stroke="#c9c9c9" stroke-width="1.100"/><rect x="6" y="0.700" width="9.500" height="4.500" rx="1" fill="#dedede" stroke="#c4c4c4" stroke-width="1"/><path d="M8 9h12.500l5 5v14.500h-17.500z" fill="#f1f1f1" stroke="#c9c9c9" stroke-width="1.100" stroke-linejoin="round"/><path d="M20.500 9v5h5" stroke="#c9c9c9" stroke-width="1" fill="none"/></g><path d="M527.2 108.1h5l-2.5 2.8z" fill="#aaa"/><g transform="translate(560,56)" ><path d="M1 1l10.500 10.500M13.500 1L3 11.500" stroke="#c4c4c4" stroke-width="1.800"/><circle cx="2.800" cy="12.800" r="2" fill="none" stroke="#c4c4c4" stroke-width="1.100"/><circle cx="11.700" cy="12.800" r="2" fill="none" stroke="#c4c4c4" stroke-width="1.100"/></g><g transform="translate(559,79.5)" ><path d="M0.700 0.700h7.500l3 3v8.800h-10.500z" fill="#ebebeb" stroke="#c9c9c9" stroke-width="1"/><path d="M5 4.500h7.500l3 3v8.500h-10.500z" fill="#f3f3f3" stroke="#c9c9c9" stroke-width="1"/></g><g transform="translate(559,103.5)" ><rect x="0.700" y="0.700" width="8" height="9.500" fill="#f4f4f4" stroke="#222" stroke-width="1.100"/><rect x="2.200" y="2" width="5" height="2" fill="#3f6fb5"/><path d="M2.500 6.500h4.500" stroke="#555" stroke-width="0.900"/><path d="M16.500 1l-7 8.500l2 1.800l6-9z" fill="#e2b45a" stroke="#8a6a22" stroke-width="0.700"/><path d="M9.500 9.500l2 1.800c-1.500 3-5 5-10.500 4.700c3-1 5-3 5.500-5.500z" fill="#555b66" stroke="#333" stroke-width="0.700"/></g><g transform="translate(588.5,69)" ><rect x="6" y="0.700" width="10.500" height="10.500" fill="url(#gbl)" stroke="#2f74c0" stroke-width="1.200"/><circle cx="6" cy="10.500" r="5.200" fill="#fff" stroke="#222" stroke-width="1.200"/><path d="M6 5.300A5.200 5.200 0 0 1 11.200 10.500" fill="none" stroke="#e03a3a" stroke-width="1.300"/></g><g transform="translate(588.5,93)" ><rect x="6" y="0.700" width="10.500" height="10.500" rx="1" fill="#9ccaf0" stroke="#2f74c0" stroke-width="1.200"/><circle cx="6" cy="10.500" r="5.200" fill="#9ccaf0" stroke="#2f74c0" stroke-width="1.200"/><path d="M6.600 5.900h5v5" fill="none" stroke="#9ccaf0" stroke-width="1.600"/></g><path d="M637.1 75.9h5l-2.5 2.8z" fill="#333"/><path d="M638.7 99.9h5l-2.5 2.8z" fill="#333"/><g transform="translate(655.5,68)" ><path d="M1 1.500c2.500 2.500 8.500 2.500 13.500-0.500v11c-5 3-11 3-13.500 0.500z" fill="url(#gbl)" stroke="#1f3f7a" stroke-width="1.200" stroke-linejoin="round"/><rect x="3.500" y="5.800" width="6.500" height="4.700" fill="#5fa2e4" stroke="#1f3f7a" stroke-width="0.900"/></g><g transform="translate(655,92.5)" ><circle cx="4" cy="4" r="3.200" fill="#f4f4f4" stroke="#222" stroke-width="1"/><path d="M1.800 1.800l4.400 4.400M6.200 1.800l-4.400 4.400" stroke="#222" stroke-width="0.900"/><rect x="8" y="7.500" width="7.500" height="7.500" rx="1" fill="#f0f0f0" stroke="#222" stroke-width="1.100"/><path d="M1.500 9.500v4h4M4 11.800l1.700 1.700l-1.700 1.700" stroke="#222" stroke-width="1" fill="none"/></g><path d="M678.3 98.9h5l-2.5 2.8z" fill="#333"/><g transform="translate(696.5,54)" ><path d="M1 0v31" stroke="#222" stroke-width="1.400"/><rect x="3.300" y="3.600" width="11.200" height="9.600" fill="url(#gbl)" stroke="#2f74c0" stroke-width="1.100"/><rect x="3" y="16.300" width="26" height="12.400" fill="url(#gl)" stroke="#222" stroke-width="1.200"/></g><g transform="translate(712.2,105.2)" ><path d="M0 -14.500l6 6.500h-3.200v4.500h-5.600v-4.500h-3.200zM0 14.500l6-6.500h-3.200v-4.500h-5.600v4.500h-3.200zM-14.500 0l6.500-6v3.200h4.500v5.600h-4.500v3.200zM14.500 0l-6.500-6v3.200h-4.500v5.600h4.500v3.200z" fill="#3a3d44"/><rect x="-2.300" y="-2.300" width="4.600" height="4.600" fill="#fff" stroke="#3a3d44" stroke-width="1"/></g><g transform="translate(746.9,64.2)" ><path d="M-6.500 -5.500c3 0.500 4.500 2 4.500 5.500v5.500h-4.500zM6 -5.500l-6 5.500l6 5.500z" fill="#f4f4f4" stroke="#222" stroke-width="1.100" stroke-linejoin="round"/><path d="M1.500 -1v8l1.800-1.600l1.200 2.800l1.300-0.600l-1.200-2.700h2.500z" fill="#fff" stroke="#222" stroke-width="0.800"/></g><g transform="translate(772,64.2)" ><path d="M-6.500 -5.500c3 0.500 4.500 2 4.500 5.500v5.500h-4.500z" fill="#f4f4f4" stroke="#222" stroke-width="1.100"/><path d="M0 -7.500v13" stroke="#222" stroke-width="1.100"/><path d="M6.500 -4l1.800 1.600l-6.800 8l-2.800 1l0.800-2.800z" fill="#f2b632" stroke="#8a5a10" stroke-width="0.700"/><path d="M2 -5l3-1" stroke="#222" stroke-width="1"/></g><g transform="translate(796.6,64.2)" ><rect x="-7" y="-2.200" width="14" height="4.400" fill="#a9d2f3" stroke="#2f74c0" stroke-width="1.200"/><rect x="-1.700" y="-3.500" width="3.400" height="7" fill="#eeeeee"/><path d="M0 -5.500v11" stroke="#e03a3a" stroke-width="1" stroke-dasharray="1.500 1"/></g><g transform="translate(821.7,64.2)" ><rect x="-7" y="-2.400" width="4.800" height="4.800" fill="#a9d2f3" stroke="#2f74c0" stroke-width="1.200"/><rect x="2.200" y="-2.400" width="4.800" height="4.800" fill="#a9d2f3" stroke="#2f74c0" stroke-width="1.200"/><path d="M0 -5.500v11" stroke="#e03a3a" stroke-width="1" stroke-dasharray="1.500 1"/></g><g transform="translate(846.3,64.2)" ><path d="M-8 -2.500h4" stroke="#222" stroke-width="1"/><path d="M-4 -6v7M-4 -5h5l3-1.500v7l-3-1.500h-5" fill="#f4f4f4" stroke="#222" stroke-width="1" stroke-linejoin="round"/><path d="M0.500 2l5.500 5.500M6 2l-5.500 5.500" stroke="#e02a2a" stroke-width="2"/></g><g transform="translate(746.9,88.1)" ><path d="M-7.500 4.500v-3c0-1 0.500-1.500 1.500-1.500h1.500v-3c0-1.500 1-2.500 2.500-2.500s2.500 1 2.500 2.500v3h7" fill="none" stroke="#2f74c0" stroke-width="1.200"/><path d="M-7.500 6.800h15M-5.300 4.500v-2.300h3.300v-5c0-0.600 0.300-0.800 0.700-0.800s0.700 0.200 0.700 0.800v5h8.300" fill="none" stroke="#2f74c0" stroke-width="1"/><path d="M-3 4.500h10.500" stroke="#f2b632" stroke-width="1"/></g><g transform="translate(772,88.1)" ><path d="M2.500 -6.300A6.600 6.600 0 1 1 -3 -5.900" fill="none" stroke="#3a3d44" stroke-width="1.500"/><path d="M-0.500 -9l5 2.600l-4.500 3.200z" fill="#3a3d44"/></g><g transform="translate(796.6,88.1)" ><rect x="-7" y="-7" width="3.400" height="3.400" fill="#f0f0f0" stroke="#bdbdbd" stroke-width="0.900"/><rect x="-0.5" y="-7" width="3.400" height="3.400" fill="#f0f0f0" stroke="#bdbdbd" stroke-width="0.900"/><rect x="-7" y="-0.5" width="3.400" height="3.400" fill="#f0f0f0" stroke="#bdbdbd" stroke-width="0.900"/><path d="M-0.500 -0.500h3.400v3.400" fill="none" stroke="#bdbdbd" stroke-width="0.900"/><text x="1.500" y="8" style="font:bold 7px 'Liberation Sans';fill:#b5b5b5">P</text></g><g transform="translate(821.7,88.1)" ><rect x="-7.300" y="-7.300" width="14.600" height="14.600" fill="url(#gbl)" stroke="#2f74c0" stroke-width="1.300"/><rect x="-7.300" y="-0.500" width="8" height="7.800" fill="#f4f4f4" stroke="#222" stroke-width="1.200"/></g><g transform="translate(846.3,88.1)" ><path d="M-8 0h4.500" stroke="#222" stroke-width="1"/><path d="M-3.500 -4v8M-3.500 -2.800h5l3-1.700v9l-3-1.700h-5" fill="#f4f4f4" stroke="#222" stroke-width="1" stroke-linejoin="round"/></g><g transform="translate(746.9,112.1)" ><circle cx="-4.500" cy="-4" r="2.800" fill="#f4f4f4" stroke="#222" stroke-width="1"/><circle cx="1.500" cy="2.500" r="3.200" fill="#a9d2f3" stroke="#2f74c0" stroke-width="1.100"/><circle cx="4.500" cy="5" r="3.200" fill="#a9d2f3" stroke="#2f74c0" stroke-width="1.100"/><path d="M1 -5.500h3.500c1.500 0 2 0.500 2 2v0.500M5 -4.500l1.500 2l1.500-2" stroke="#222" stroke-width="1" fill="none"/></g><g transform="translate(772,112.1)" ><path d="M-7 -5.500h6M-7 -2.500h4M-7 0.500h3" stroke="#222" stroke-width="1"/><path d="M-3 -5.500h2.500l-2-1.800M-0.500 -5.500l-2 1.800" stroke="#222" stroke-width="1" fill="none"/><path d="M-4 -2.500h3.500c1 0 1.500 0.500 1.500 1.500v3" stroke="#2f74c0" stroke-width="1.200" fill="none"/><path d="M-1 7.500v-5M1.500 7.500v-5M5 7.500v-7M5 0.500l-2 2.300M5 0.500l2 2.300" stroke="#222" stroke-width="1" fill="none"/></g><g transform="translate(796.6,112.1)" ><path d="M-7 -4.500h9M-1 -6.500l2.500 2l-2.500 2" stroke="#222" stroke-width="1" fill="none"/><path d="M-7 0h10M-7 3h10" stroke="#2f74c0" stroke-width="1.100"/><path d="M-7 1.500h3" stroke="#222" stroke-width="1"/><path d="M4.500 -7.500v15M7 -7.500v15" stroke="#222" stroke-width="1.100"/></g><g transform="translate(821.7,112.1)" ><path d="M-7 -5.500h9M-1 -7.500l2.500 2l-2.500 2" stroke="#222" stroke-width="1" fill="none"/><path d="M-3 -2h7M-3 1h7M-3 4h7" stroke="#2f74c0" stroke-width="1.100"/><path d="M-7 -2h3M-7 1h3M-7 4h3M-7 7h11" stroke="#222" stroke-width="1"/><path d="M5.500 -7.500v15M8 -7.500v15" stroke="#222" stroke-width="1.100"/></g><g transform="translate(846.3,112.1)" ><path d="M-4.200 -4.300L4.200 4.300M4.200 -4.300L-4.200 4.300" stroke="#b01c1c" stroke-width="3.800" stroke-linecap="round"/><path d="M-4.200 -4.300L4.200 4.300M4.200 -4.300L-4.200 4.300" stroke="#ee4444" stroke-width="2.400" stroke-linecap="round"/></g><g transform="translate(869,60.5)" ><path d="M1 4h27M1 4l4-3.500M1 4l4 3.500M28 4l-4-3.500M28 4l-4 3.500" stroke="#c2c2c2" stroke-width="1.200" fill="none"/><rect x="0.500" y="11.500" width="28" height="5.500" fill="#d4d4d4" stroke="#c2c2c2" stroke-width="0.800"/></g><path d="M906.1 69.1h5l-2.5 2.8z" fill="#666"/><g transform="translate(869,90)" ><path d="M4 26L25 5" stroke="#222" stroke-width="1.300"/><path d="M4 26l2-6.500l4.500 4.500zM25 5l-2 6.500l-4.500-4.500z" fill="#222"/><path d="M0 21l9 9M20.500 0.500l9 9" stroke="#222" stroke-width="1.100"/></g><path d="M906.1 105.3h5l-2.5 2.8z" fill="#333"/><g transform="translate(935,56)" ><path d="M16 3.500h8.500v24.200h-24.200v-7.400h15.700z" fill="url(#gw)" stroke="#2b2b2b" stroke-width="1.300" stroke-linejoin="round"/><path d="M0.700 3.800v13.800h13.500v-13.800" fill="url(#gw)" stroke="#2b2b2b" stroke-width="1.200"/><path d="M0.700 3.800h13.500" stroke="#2b2b2b" stroke-width="1.100" stroke-dasharray="1.500 1.500"/><path d="M7.400 0l6.200 6.500h-3.600v6h-5.200v-6h-3.600z" fill="url(#gar)" stroke="#1560b8" stroke-width="0.700"/></g><g transform="translate(1010,56)" ><rect x="16" y="3.500" width="8.500" height="18" fill="url(#gw)" stroke="#2b2b2b" stroke-width="1.300"/><rect x="0.700" y="20.300" width="17" height="7.400" fill="#fff" stroke="#2b2b2b" stroke-width="1.300"/><path d="M0.700 3.800v13.800h13.500v-13.800" fill="url(#gw)" stroke="#2b2b2b" stroke-width="1.200"/><path d="M0.700 3.800h13.500" stroke="#2b2b2b" stroke-width="1.100" stroke-dasharray="1.500 1.500"/><path d="M7.400 0l6.200 6.500h-3.600v6h-5.200v-6h-3.600z" fill="url(#gar)" stroke="#1560b8" stroke-width="0.700"/><rect x="17.300" y="17.300" width="12.400" height="12.200" rx="1.800" fill="#d83434" stroke="#a11818" stroke-width="0.900"/><path d="M20.300 20.200l6.400 6.400M26.700 20.200l-6.400 6.400" stroke="#fff" stroke-width="1.300"/></g><rect x="399.500" y="35.200" width="13.500" height="8.300" rx="2" fill="#f4f4f4" stroke="#222" stroke-width="1.100"/><path d="M403.500 41h5.500l-2.750-2.800z" fill="#222"/><path d="M418.25 38.5h4.5l-2.25 2.55z" fill="#222"/><path d="M1381 8.500l4 3.500l-4 3.500z" fill="#333"/><g transform="translate(1575,5)" ><path d="M1 14.500v-6.500l1.800-5h3.400l0.800 5v6.500zM15 14.500v-6.500l-1.800-5h-3.400l-0.800 5v6.500z" fill="#f4f4f4" stroke="#1e1e1e" stroke-width="1.200" stroke-linejoin="round"/><rect x="2.500" y="0.700" width="3.500" height="2.500" fill="#f4f4f4" stroke="#1e1e1e" stroke-width="1"/><rect x="10" y="0.700" width="3.500" height="2.500" fill="#f4f4f4" stroke="#1e1e1e" stroke-width="1"/><rect x="6.800" y="5" width="2.400" height="4" fill="#1e1e1e"/></g><g transform="translate(1600,5)" ><path d="M1.500 3c0 5 3 8.500 8.500 8.500z" fill="#f4f4f4" stroke="#1e1e1e" stroke-width="1.200" stroke-linejoin="round"/><path d="M5.500 7.500l6-6.500M6 10l-3 4.500h8l-2.500-3.500" stroke="#1e1e1e" stroke-width="1.100" fill="none"/><path d="M1 14.500h12" stroke="#1e1e1e" stroke-width="1.200"/></g><g transform="translate(1630.7,12.3)" ><path d="M0 -7.500l2.200 5.200l5.600 0.400l-4.300 3.600l1.400 5.500l-4.900-3l-4.900 3l1.400-5.500l-4.300-3.600l5.600-0.400z" fill="#f4f4f4" stroke="#1e1e1e" stroke-width="1.100" stroke-linejoin="round"/></g><g transform="translate(1646.5,4.5)" ><path d="M8.500 0.700c2.500 0 4 1.800 4 4.500c0 2.200-1 3.800-2 4.600c0 1 0.500 1.500 2 2c2.500 0.800 4 1.500 4.300 3.700h-16.600c0.300-2.200 1.800-2.900 4.300-3.700c1.500-0.500 2-1 2-2c-1-0.800-2-2.400-2-4.600c0-2.700 1.500-4.500 4-4.500z" fill="#f4f4f4" stroke="#1e1e1e" stroke-width="1.100" stroke-linejoin="round"/></g><path d="M1752.9 10.7h5l-2.5 2.8z" fill="#444"/><g transform="translate(1769,4.5)" ><path d="M0.500 1.500h3l2 9h8.500l2-6.500h-11.500" fill="#eef2fb" stroke="#2a3a6a" stroke-width="1.200" stroke-linejoin="round"/><path d="M5.500 10.500l-1 2.500h10.500" stroke="#2a3a6a" stroke-width="1.100" fill="none"/><circle cx="6.500" cy="15" r="1.300" fill="#2a3a6a"/><circle cx="13" cy="15" r="1.300" fill="#2a3a6a"/></g><rect x="1794" y="3" width="1" height="19" fill="#bdbdbd"/><circle cx="1812" cy="12" r="7.400" fill="#f7f9ff" stroke="#2a3a7a" stroke-width="1.200"/><text x="1808.500" y="16.300" style="font:bold 12px 'Liberation Sans';fill:#2a3a7a">?</text><path d="M1827.75 10.7h4.5l-2.25 2.55z" fill="#444"/><path d="M1853.500 16.500h9" stroke="#1a1a1a" stroke-width="2"/><path d="M1880.500 7.500v-2.500h9v7h-2.500" fill="none" stroke="#1a1a1a" stroke-width="1.400"/><rect x="1877.700" y="8.200" width="8.800" height="6.800" fill="none" stroke="#1a1a1a" stroke-width="1.400"/><path d="M1877.700 9h8.800" stroke="#1a1a1a" stroke-width="1.600"/><path d="M1903.1 6.3L1913.7 16.9M1913.7 6.3L1903.1 16.9" stroke="#1a1a1a" stroke-width="2"/><path d="M277.7 179.4L286.3 188M286.3 179.4L277.7 188" stroke="#1a1a1a" stroke-width="1.6"/><path d="M277.7 622.5L286.3 631.1M286.3 622.5L277.7 631.1" stroke="#1a1a1a" stroke-width="1.6"/><defs><linearGradient id="rgr" x1="0" y1="0" x2="1" y2="1"><stop offset="0" stop-color="#9c9c9c"/><stop offset="1" stop-color="#c2c2c2"/></linearGradient></defs><path d="M22.500 203h17c9 0 13.500 4.500 13.500 11.500c0 5.500-3 9-8 10.500l12 20h-10.500l-10.500-18.500h-4v18.500l-9.500 0.500zM32 210.500v9.500h6.500c3.500 0 5.500-1.800 5.500-4.800s-2-4.700-5.500-4.700z" fill="url(#rgr)"/><path d="M22.500 203l5 3v36l-5 3.500z" fill="#8f8f8f" opacity="0.600"/><path d="M279.500 227.500h8l-4 4z" fill="#a0a0a0"/><path d="M194.800 275.800l4 4l4-4" stroke="#222" stroke-width="1.200" fill="none"/><g transform="translate(213.8,268)" ><rect x="0.600" y="0.600" width="6" height="6" rx="1" fill="none" stroke="#b9b9b9" stroke-width="1.100"/><rect x="0.600" y="9" width="6" height="6" rx="1" fill="none" stroke="#b9b9b9" stroke-width="1.100"/><path d="M9 0.600h6v4" fill="none" stroke="#b9b9b9" stroke-width="1.100"/><rect x="8" y="6.500" width="7.500" height="9" fill="#f4f4f4" stroke="#b9b9b9" stroke-width="1.100"/><path d="M9.500 9h4.500M9.500 12h4.500" stroke="#c4c4c4" stroke-width="0.900"/></g><path d="M277.5 297l3-3l3 3M277.5 301.5l3-3l3 3" stroke="#1a1a1a" stroke-width="1.300" fill="none"/><path d="M277.5 333.3l3-3l3 3M277.5 337.8l3-3l3 3" stroke="#1a1a1a" stroke-width="1.300" fill="none"/><path d="M277.5 387.3l3-3l3 3M277.5 391.8l3-3l3 3" stroke="#1a1a1a" stroke-width="1.300" fill="none"/><path d="M152.500 442.500l3 3.500l5-7" stroke="#222" stroke-width="1.300" fill="none"/><path d="M9.500 651v27M14 646.500h6M10 664.500h10M14 682.500h6" stroke="#9a9a9a" stroke-width="1" stroke-dasharray="1 1.200"/><rect x="5.4" y="642.2" width="8.400" height="8.400" fill="#fff" stroke="#8a8a8a" stroke-width="0.900"/><path d="M7.1 646.4h5M9.6 643.9v5" stroke="#222" stroke-width="1"/><rect x="5.4" y="678.1" width="8.400" height="8.400" fill="#fff" stroke="#8a8a8a" stroke-width="0.900"/><path d="M7.1 682.3h5M9.6 679.8v5" stroke="#222" stroke-width="1"/><g transform="translate(22,638)" ><path d="M0.600 4v-3.400h3.400M10.500 0.600h3.400v3.400M13.900 10v3.400h-3.400M4 13.400h-3.400v-3.400" fill="none" stroke="#2b2b2b" stroke-width="1.200"/><path d="M5 4.200h5.500l-0.800 5.600h-5.500z" fill="#f4f4f4" stroke="#2b2b2b" stroke-width="1.100"/></g><g transform="translate(21.3,656.8)" ><path d="M0.600 0.600h10.500l3.800 3.800v7.400h-14.300z" fill="#fafafa" stroke="#2b2b2b" stroke-width="1.200" stroke-linejoin="round"/><path d="M11 0.600v4h4" fill="none" stroke="#2b2b2b" stroke-width="1"/><path d="M2.500 3.500h6.500v6.500h-6.500zM2.500 6.500h3.500v3.500M9 7h3v3" fill="none" stroke="#2b2b2b" stroke-width="0.900"/></g><g transform="translate(22,674.6)" ><rect x="0.600" y="0.600" width="6" height="6" fill="#fafafa" stroke="#2b2b2b" stroke-width="1.200"/><path d="M9 0.600h4.800v12.600h-13.200v-4.200h8.400z" fill="#f0f0f0" stroke="#2b2b2b" stroke-width="1.200" stroke-linejoin="round"/></g><g transform="translate(375.2,1038.3)" ><rect x="0.600" y="0.600" width="14.300" height="10.600" fill="#f4f4f4" stroke="#222" stroke-width="1.200"/><rect x="0.600" y="0.600" width="14.300" height="2.200" fill="#333"/><rect x="1.500" y="3.800" width="4.200" height="3" fill="#555"/><rect x="5.700" y="6.800" width="4.200" height="3.400" fill="#555"/><rect x="9.900" y="3.800" width="4.200" height="3" fill="#555"/><rect x="5.700" y="3.800" width="4.200" height="3" fill="#c9c9c9"/><rect x="1.500" y="6.800" width="4.200" height="3.400" fill="#c9c9c9"/><rect x="9.900" y="6.800" width="4.200" height="3.400" fill="#c9c9c9"/></g><g transform="translate(397,1039)" ><path d="M0.600 4.500l3-3.700h11l-3 3.700zM0.600 4.500v6.500h11v-6.500M11.600 11l3-3.700v-6.500" fill="#e4e4e4" stroke="#222" stroke-width="1.200" stroke-linejoin="round"/></g><g transform="translate(416,1038.8)" ><path d="M0 7h3M3.500 10.500v-7c0-1.500 0.800-2.300 2.300-2.300h6.500" fill="none" stroke="#2f74c0" stroke-width="1.500"/><path d="M6 10.500v-5.500c0-0.800 0.400-1.200 1.200-1.200h4M8.500 0v2M0.500 7h2.500" fill="none" stroke="#2f74c0" stroke-width="1.100"/><path d="M7.500 1.200h3" stroke="#222" stroke-width="1"/><path d="M7.7 4.7l5.6 5.6M13.3 4.7l-5.6 5.6" stroke="#e02020" stroke-width="1.900"/></g><g transform="translate(437.5,1038.8)" ><path d="M0 7h3M3.500 10.500v-7c0-1.500 0.800-2.300 2.300-2.300h6.500" fill="none" stroke="#2f74c0" stroke-width="1.500"/><path d="M6 10.500v-5.500c0-0.800 0.400-1.200 1.200-1.200h4M8.500 0v2M0.500 7h2.500" fill="none" stroke="#2f74c0" stroke-width="1.100"/><path d="M7.500 1.200h3" stroke="#222" stroke-width="1"/><circle cx="12.5" cy="5" r="2.600" fill="#eaf3fd" stroke="#3a7fd0" stroke-width="1"/><path d="M11.5 7.3v2.600h2v-2.600" fill="#eaf3fd" stroke="#3a7fd0" stroke-width="0.900"/></g><g transform="translate(459.5,1037.8)" ><path d="M0.600 5.500l5-4.800l6.500 3v3" fill="none" stroke="#333" stroke-width="1.100" stroke-linejoin="round"/><path d="M1.500 5.500v5.500l3 1.200v-5" fill="#f4f4f4" stroke="#333" stroke-width="1.100"/><path d="M5 0.800c2-1.500 5.500-1 7 1.500" fill="none" stroke="#777" stroke-width="0.800"/><rect x="7.500" y="8" width="6.500" height="4.600" fill="#dff3ee" stroke="#2a8a7a" stroke-width="1"/><path d="M9 8v-1.500c0-2 3.500-2 3.500 0v1.500" fill="none" stroke="#2a8a7a" stroke-width="1"/></g><g transform="translate(479.5,1039.8)" ><path d="M0.500 3.500c1.500 0 2 1 2.500 2.500c0.600 2 2 3.500 4 3.500s3.200-1.300 3.200-2.800s-1-2.500-2.400-2.500s-2.300 0.800-2.500 1.800" fill="none" stroke="#222" stroke-width="1.100"/><path d="M8.500 2c2-1.800 5-1.500 6 0.500c0.800 1.800-0.500 3.800-2.500 4.500l-2 0.500" fill="none" stroke="#222" stroke-width="1.100"/></g><g transform="translate(499.8,1038.3)" ><path d="M0.800 0v11M14.500 0v6M0.800 2.500h13.700" stroke="#222" stroke-width="1.100"/><path d="M0.800 8h8" stroke="#222" stroke-width="0.900" stroke-dasharray="1.500 1.500"/><rect x="9.500" y="7.500" width="6" height="4.300" fill="#888" stroke="#333" stroke-width="0.900"/><path d="M10.800 7.500v-1.200c0-1.800 3.400-1.800 3.400 0v1.200" fill="none" stroke="#333" stroke-width="1"/></g><g transform="translate(521,1039.3)" ><path d="M0.600 0.600h11v6h-11zM0 9h13M0 11.200h13" fill="#f4f4f4" stroke="#333" stroke-width="1.100"/><circle cx="14" cy="4.5" r="2.600" fill="#eaf3fd" stroke="#7ab0e0" stroke-width="1"/><path d="M13 6.8v2.600h2v-2.600" fill="#eaf3fd" stroke="#7ab0e0" stroke-width="0.900"/></g><path d="M550.7 1042l-3.400 3.500l3.400 3.500" fill="none" stroke="#3a3a3a" stroke-width="2"/><path d="M1078 1042l3.400 3.500l-3.400 3.500" fill="none" stroke="#3a3a3a" stroke-width="2"/><g transform="translate(1190.5,1038.3)" ><rect x="0.600" y="0.600" width="14.300" height="10.600" fill="#f4f4f4" stroke="#222" stroke-width="1.200"/><rect x="0.600" y="0.600" width="14.300" height="2.200" fill="#333"/><rect x="1.500" y="3.800" width="4.200" height="3" fill="#555"/><rect x="5.700" y="6.800" width="4.200" height="3.400" fill="#555"/><rect x="9.900" y="3.800" width="4.200" height="3" fill="#555"/><rect x="5.700" y="3.800" width="4.200" height="3" fill="#c9c9c9"/><rect x="1.500" y="6.800" width="4.200" height="3.400" fill="#c9c9c9"/><rect x="9.900" y="6.800" width="4.200" height="3.400" fill="#c9c9c9"/></g><g transform="translate(1212,1039)" ><path d="M0.600 4.500l3-3.700h11l-3 3.700zM0.600 4.500v6.500h11v-6.500M11.600 11l3-3.700v-6.500" fill="#d5e6f7" stroke="#2f6fb5" stroke-width="1.200" stroke-linejoin="round"/><path d="M2 6.300h8.200" stroke="#e04a4a" stroke-width="1.300"/><path d="M2 8.600h8.200" stroke="#4aa84a" stroke-width="1.300"/></g><g transform="translate(1231.5,1038.3)" ><circle cx="6" cy="6" r="3.300" fill="#ffe27a" stroke="#e0a010" stroke-width="1"/><path d="M6 0v1.500M6 10.500v1.500M0 6h1.500M10.500 6h1.500M1.800 1.800l1 1M10.200 1.800l-1 1M1.800 10.200l1-1" stroke="#e0a010" stroke-width="1"/><path d="M8.9 6.4l5.2 5.2M14.1 6.4l-5.2 5.2" stroke="#e02020" stroke-width="1.900"/></g><g transform="translate(1254.5,1038.3)" ><circle cx="5.500" cy="5" r="4.200" fill="#e6f0fa" stroke="#2f6fb5" stroke-width="1.100"/><path d="M0.500 10.500h7M1.500 12.300h5" stroke="#2f6fb5" stroke-width="1"/><path d="M8.4 6.9l5.2 5.2M13.6 6.9l-5.2 5.2" stroke="#e02020" stroke-width="1.900"/></g><g transform="translate(1273.5,1039.3)" ><path d="M2 3.500h7l1.500 2.500l-2 4h-5l-2.500-4.500zM0 3l2.500 2M4 3.500c0.500-1.500 2.500-1.500 3 0" fill="#f4f4f4" stroke="#555" stroke-width="0.900" stroke-linejoin="round"/><circle cx="12.5" cy="5.5" r="2.600" fill="#eaf3fd" stroke="#3a7fd0" stroke-width="1"/><path d="M11.5 7.8v2.600h2v-2.600" fill="#eaf3fd" stroke="#3a7fd0" stroke-width="0.900"/></g><g transform="translate(1294.2,1038.8)" ><path d="M0 7h3M3.500 10.500v-7c0-1.500 0.800-2.300 2.300-2.300h6.500" fill="none" stroke="#2f74c0" stroke-width="1.500"/><path d="M6 10.500v-5.500c0-0.800 0.400-1.200 1.200-1.200h4M8.500 0v2M0.500 7h2.500" fill="none" stroke="#2f74c0" stroke-width="1.100"/><path d="M7.500 1.200h3" stroke="#222" stroke-width="1"/><path d="M7.7 4.7l5.6 5.6M13.3 4.7l-5.6 5.6" stroke="#e02020" stroke-width="1.900"/></g><g transform="translate(1315.2,1038.8)" ><path d="M0 7h3M3.500 10.500v-7c0-1.500 0.800-2.300 2.300-2.300h6.500" fill="none" stroke="#2f74c0" stroke-width="1.500"/><path d="M6 10.500v-5.500c0-0.800 0.400-1.200 1.200-1.200h4M8.500 0v2M0.500 7h2.500" fill="none" stroke="#2f74c0" stroke-width="1.100"/><path d="M7.500 1.200h3" stroke="#222" stroke-width="1"/><circle cx="12.5" cy="5" r="2.600" fill="#eaf3fd" stroke="#3a7fd0" stroke-width="1"/><path d="M11.5 7.3v2.600h2v-2.600" fill="#eaf3fd" stroke="#3a7fd0" stroke-width="0.900"/></g><g transform="translate(1336,1037.8)" ><path d="M0.600 5.500l5-4.800l6.500 3v3" fill="none" stroke="#333" stroke-width="1.100" stroke-linejoin="round"/><path d="M1.500 5.500v5.500l3 1.200v-5" fill="#f4f4f4" stroke="#333" stroke-width="1.100"/><path d="M5 0.800c2-1.500 5.500-1 7 1.500" fill="none" stroke="#777" stroke-width="0.800"/><rect x="7.500" y="8" width="6.500" height="4.600" fill="#dff3ee" stroke="#2a8a7a" stroke-width="1"/><path d="M9 8v-1.500c0-2 3.500-2 3.500 0v1.500" fill="none" stroke="#2a8a7a" stroke-width="1"/></g><g transform="translate(1358,1039.8)" ><path d="M0.500 3.500c1.500 0 2 1 2.500 2.500c0.600 2 2 3.500 4 3.500s3.200-1.300 3.200-2.800s-1-2.500-2.400-2.500s-2.300 0.800-2.500 1.800" fill="none" stroke="#222" stroke-width="1.100"/><path d="M8.500 2c2-1.800 5-1.500 6 0.500c0.800 1.800-0.500 3.800-2.500 4.500l-2 0.500" fill="none" stroke="#222" stroke-width="1.100"/></g><circle cx="1386" cy="1044.5" r="2.600" fill="#eaf3fd" stroke="#3a7fd0" stroke-width="1"/><path d="M1385 1046.8v2.600h2v-2.600" fill="#eaf3fd" stroke="#3a7fd0" stroke-width="0.900"/><g transform="translate(1400.5,1039.8)" ><rect x="0.600" y="1.500" width="12.500" height="8.500" fill="none" stroke="#222" stroke-width="1.200" stroke-dasharray="2.500 1.300"/><rect x="7" y="5" width="6.500" height="5.500" fill="#f4f4f4" stroke="#222" stroke-width="1"/><circle cx="10.200" cy="7.800" r="1.300" fill="none" stroke="#222" stroke-width="0.900"/></g><g transform="translate(1420,1038.3)" ><path d="M0.500 12v-7l4-4h7v5M0.500 5h7l4-4M7.500 5v7M4 12v-7M2.200 12v-7" fill="none" stroke="#c0392b" stroke-width="1"/><path d="M0.500 8.500h7" stroke="#c0392b" stroke-width="0.900"/><circle cx="12.5" cy="6.5" r="2.600" fill="#eaf3fd" stroke="#3a7fd0" stroke-width="1"/><path d="M11.5 8.8v2.600h2v-2.600" fill="#eaf3fd" stroke="#3a7fd0" stroke-width="0.900"/></g><g transform="translate(1442,1039.3)" ><path d="M0.600 4l3-3.200h9.500l-3 3.200zM0.600 4v6.500h9.500v-6.500M10.100 10.500l3-3.200v-6.500" fill="#e9e9e9" stroke="#666" stroke-width="1.100" stroke-linejoin="round"/><path d="M3 5.500v4M5.500 5.500v4" stroke="#666" stroke-width="1"/></g><g transform="translate(1462.8,1038.3)" ><path d="M0.800 0v11M14.500 0v6M0.800 2.500h13.700" stroke="#222" stroke-width="1.100"/><path d="M0.800 8h8" stroke="#222" stroke-width="0.900" stroke-dasharray="1.500 1.500"/><rect x="9.500" y="7.500" width="6" height="4.300" fill="#888" stroke="#333" stroke-width="0.900"/><path d="M10.800 7.500v-1.200c0-1.800 3.400-1.800 3.400 0v1.200" fill="none" stroke="#333" stroke-width="1"/></g><path d="M1492 1042l-3.400 3.500l3.400 3.500" fill="none" stroke="#3a3a3a" stroke-width="2"/><path d="M1892.3 1042l3.400 3.500l-3.400 3.500" fill="none" stroke="#3a3a3a" stroke-width="2"/><path d="M1093 205.700l3.500-3.400l3.500 3.400" fill="none" stroke="#3a3a3a" stroke-width="2"/><path d="M1093 1026.600l3.500 3.400l3.500-3.400" fill="none" stroke="#3a3a3a" stroke-width="2"/><path d="M1908 205.700l3.500-3.400l3.500 3.400" fill="none" stroke="#3a3a3a" stroke-width="2"/><path d="M1908 1026.600l3.500 3.400l3.500-3.400" fill="none" stroke="#3a3a3a" stroke-width="2"/><rect x="1099.5" y="1043" width="1.600" height="1.600" fill="#b5b5b5"/><rect x="1096.5" y="1046" width="1.600" height="1.600" fill="#b5b5b5"/><rect x="1099.5" y="1046" width="1.600" height="1.600" fill="#b5b5b5"/><rect x="1093.5" y="1049" width="1.600" height="1.600" fill="#b5b5b5"/><rect x="1096.5" y="1049" width="1.600" height="1.600" fill="#b5b5b5"/><rect x="1099.5" y="1049" width="1.600" height="1.600" fill="#b5b5b5"/><rect x="1914.5" y="1043" width="1.600" height="1.600" fill="#b5b5b5"/><rect x="1911.5" y="1046" width="1.600" height="1.600" fill="#b5b5b5"/><rect x="1914.5" y="1046" width="1.600" height="1.600" fill="#b5b5b5"/><rect x="1908.5" y="1049" width="1.600" height="1.600" fill="#b5b5b5"/><rect x="1911.5" y="1049" width="1.600" height="1.600" fill="#b5b5b5"/><rect x="1914.5" y="1049" width="1.600" height="1.600" fill="#b5b5b5"/><g transform="translate(299.3,175.8) scale(1)"><path d="M5.7 0.4L12.75 2L14.4 5.8L7.3 7.4Z" fill="#eef1f7" stroke="#2a2a2a" stroke-width="1.1" stroke-linejoin="round"/><path d="M7.300 7.400L12.750 6.200L12.750 10.400L6.500 13.750Z" fill="#c9cdd8" stroke="#2a2a2a" stroke-width="1.100" stroke-linejoin="round"/><path d="M0.250 5.800L5.700 0.400L7.300 7.400L6.500 13.750L1.500 11.250L1.500 6.600Z" fill="#f4f4f4" stroke="#2a2a2a" stroke-width="1.100" stroke-linejoin="round"/><path d="M2.300 8L4.200 8.800L4.200 12.400L2.300 11.500Z" fill="#2a3350"/></g><g transform="translate(1114.5,175.8) scale(1)"><path d="M5.7 0.4L12.75 2L14.4 5.8L7.3 7.4Z" fill="#eef1f7" stroke="#8f8f8f" stroke-width="1.1" stroke-linejoin="round"/><path d="M7.300 7.400L12.750 6.200L12.750 10.400L6.500 13.750Z" fill="#dfe1e6" stroke="#8f8f8f" stroke-width="1.100" stroke-linejoin="round"/><path d="M0.250 5.800L5.700 0.400L7.300 7.400L6.500 13.750L1.500 11.250L1.500 6.600Z" fill="#f4f4f4" stroke="#8f8f8f" stroke-width="1.100" stroke-linejoin="round"/><path d="M2.300 8L4.200 8.800L4.200 12.400L2.300 11.500Z" fill="#9aa0b0"/></g><path d="M407.8 179.3L416.4 187.9M416.4 179.3L407.8 187.9" stroke="#1a1a1a" stroke-width="1.6"/><path d="M1092.5 180.500h8" stroke="#333" stroke-width="1.200"/><path d="M1092.5 183h8l-4 4z" fill="#333"/><path d="M1907.5 180.500h8" stroke="#333" stroke-width="1.200"/><path d="M1907.5 183h8l-4 4z" fill="#333"/><rect x="1677" y="1063.300" width="7.500" height="5" rx="2.500" fill="none" stroke="#d9a800" stroke-width="1.700"/><rect x="1684" y="1063.300" width="7.500" height="5" rx="2.500" fill="none" stroke="#d9a800" stroke-width="1.700"/><path transform="translate(1682.5,1065.3) scale(1)" d="M0 0v10l2.300-2.100l1.600 3.800l1.700-0.700l-1.600-3.700h3.200z" fill="#fff" stroke="#222" stroke-width="0.900" stroke-linejoin="round"/><path d="M1702.500 1070l8.500-7.500v7.500zM1702.500 1074.500l4-3h5.500v3z" fill="#cfe3f7" stroke="#2f74c0" stroke-width="1"/><path d="M1711.3 1061.1l5.4 5.4M1716.7 1061.1l-5.4 5.4" stroke="#e02020" stroke-width="1.900"/><path transform="translate(1711,1067.5) scale(0.85)" d="M0 0v10l2.300-2.100l1.600 3.800l1.700-0.700l-1.600-3.700h3.200z" fill="#fff" stroke="#222" stroke-width="0.900" stroke-linejoin="round"/><path d="M1730.500 1061.500h6.500v2.500l-1 1v2.500l2 1.500v1h-9.500v-1l2-1.500v-2.500l-1-1z" fill="#f7b98a" stroke="#c8642a" stroke-width="0.900"/><path d="M1733.700 1070v5.500" stroke="#444" stroke-width="1"/><path transform="translate(1737.5,1066.5) scale(0.9)" d="M0 0v10l2.300-2.100l1.600 3.800l1.700-0.700l-1.600-3.700h3.200z" fill="#fff" stroke="#222" stroke-width="0.900" stroke-linejoin="round"/><path d="M1755.500 1063.500l5.500-1.500v11l-5.500 2z" fill="#bcdaf5" stroke="#2f74c0" stroke-width="1.100"/><path d="M1763.8 1061.1l5.4 5.4M1769.2 1061.1l-5.4 5.4" stroke="#e02020" stroke-width="1.900"/><path transform="translate(1763.5,1067.5) scale(0.85)" d="M0 0v10l2.300-2.100l1.600 3.800l1.700-0.700l-1.600-3.700h3.200z" fill="#fff" stroke="#222" stroke-width="0.900" stroke-linejoin="round"/><path d="M1784 1060.500v8M1780 1064.500h8M1784 1060.500l-1.500 1.800h3zM1784 1068.500l-1.500-1.800h3zM1780 1064.500l1.800-1.500v3zM1788 1064.500l-1.800-1.500v3z" stroke="#111" stroke-width="1" fill="#111"/><path transform="translate(1788.5,1064.5) scale(1)" d="M0 0v10l2.300-2.100l1.600 3.800l1.700-0.700l-1.600-3.700h3.200z" fill="#fff" stroke="#222" stroke-width="0.900" stroke-linejoin="round"/><circle cx="1813.500" cy="1068.900" r="5" fill="none" stroke="#b9b9b9" stroke-width="2.200" stroke-dasharray="2.200 1.700"/><defs><linearGradient id="fg" x1="0" y1="0" x2="1" y2="0"><stop offset="0" stop-color="#8a929c"/><stop offset="0.5" stop-color="#e6e9ee"/><stop offset="1" stop-color="#8a929c"/></linearGradient></defs><path d="M1829.500 1061.800h15.500l-6 7v6h-3.500v-6z" fill="url(#fg)" stroke="#4a525c" stroke-width="1" stroke-linejoin="round"/></svg>
</body></html>
